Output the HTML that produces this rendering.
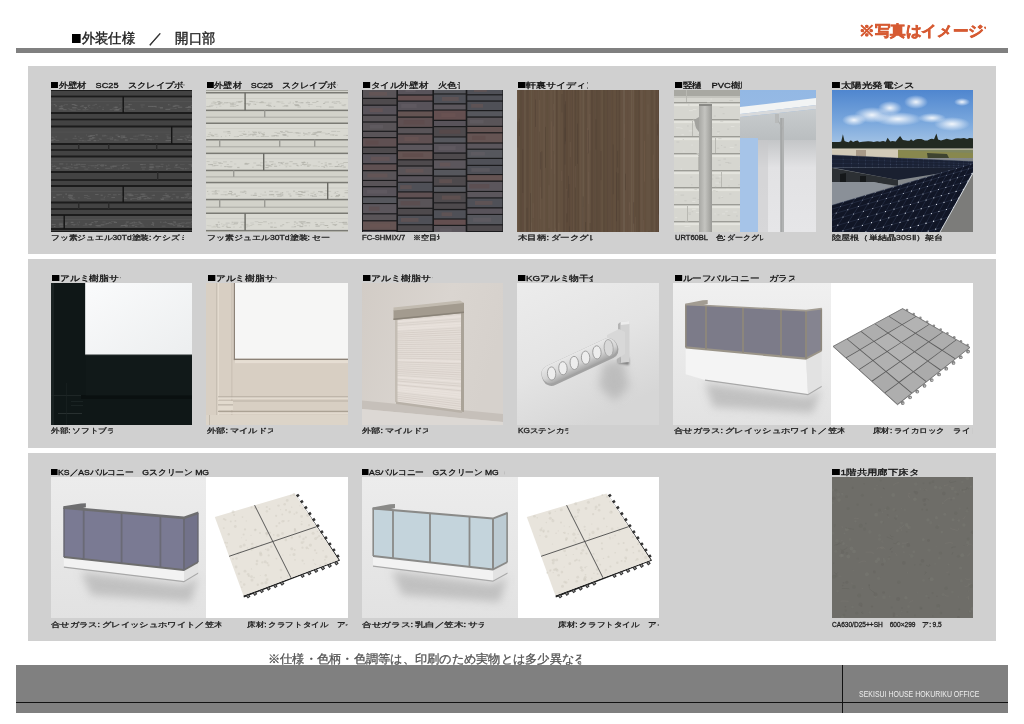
<!DOCTYPE html>
<html><head><meta charset="utf-8">
<style>
*{margin:0;padding:0;box-sizing:border-box}
html,body{width:1024px;height:724px;overflow:hidden;background:#fff;font-family:"Liberation Sans",sans-serif;color:#1a1a1a}
.a{position:absolute}
.hd{left:72px;top:29.5px;font-size:13.5px;white-space:pre;color:#222;-webkit-text-stroke:0.4px #222}
.hd .sq{width:9px;height:9px;margin-right:1px;vertical-align:-0.5px}
.red{left:858px;top:22px;font-size:14.5px;font-weight:bold;color:#d65a32;white-space:pre;-webkit-text-stroke:0.6px #d65a32}
.bar{left:16px;top:48px;width:992px;height:5px;background:#808080}
.pn{left:28px;width:968px;background:#d0d0d0}
.t{font-size:7.9px;white-space:pre;color:#111;line-height:9px;-webkit-text-stroke:0.3px #111}
.sq{display:inline-block;width:6px;height:6px;background:#000;margin-right:0.5px;vertical-align:-0.2px}
.sp{display:inline-block;width:1.5px}
.c{font-size:6.7px;white-space:pre;color:#222;line-height:9px;-webkit-text-stroke:0.3px #222}
.im{overflow:hidden}
.im svg{display:block}
.fn{left:268px;top:652px;font-size:11.5px;color:#555;white-space:pre;-webkit-text-stroke:0.3px #555}
.ft{left:16px;top:665px;width:992px;height:48px;background:#808080}
.fl{left:16px;top:701.8px;width:992px;height:1.2px;background:#111}
.fv{left:842px;top:665px;width:1.2px;height:48px;background:#111}
.ftx{left:859px;top:689px;font-size:8.8px;color:#eee;white-space:pre}
</style></head><body>
<div style="transform:scaleX(0.958);transform-origin:0 0;width:149.0px;overflow:hidden;left:72px" class="a hd"><i class="sq"></i>外装仕様　／　開口部仕様</div>
<div style="transform:scaleX(1.039);transform-origin:0 0;width:122.0px;overflow:hidden;left:858.75px" class="a red">※写真はイメージです。</div>
<div class="a bar"></div>

<div class="a pn" style="top:66px;height:188px"></div>
<div class="a pn" style="top:259px;height:189px"></div>
<div class="a pn" style="top:453px;height:188px"></div>

<!-- ROW 1 titles -->
<div class="a t" style="transform:scaleX(1.159);transform-origin:0 0;width:114.5px;overflow:hidden;left:51px;top:81px"><i class="sq"></i>外壁材　SC25　スクレイプボーダー</div>
<div class="a t" style="transform:scaleX(1.134);transform-origin:0 0;width:114.5px;overflow:hidden;left:207.3px;top:81px"><i class="sq"></i>外壁材　SC25　スクレイプボーダー</div>
<div class="a t" style="transform:scaleX(1.195);transform-origin:0 0;width:80.5px;overflow:hidden;left:362.5px;top:81px"><i class="sq"></i>タイル外壁材　火色音SH</div>
<div class="a t" style="transform:scaleX(1.248);transform-origin:0 0;width:55.5px;overflow:hidden;left:518px;top:81px"><i class="sq"></i>軒裏サイディング</div>
<div class="a t" style="transform:scaleX(1.193);transform-origin:0 0;width:55.5px;overflow:hidden;left:674.5px;top:81px"><i class="sq"></i>竪樋　PVC樹脂</div>
<div class="a t" style="transform:scaleX(1.322);transform-origin:0 0;width:61.5px;overflow:hidden;left:832px;top:81px"><i class="sq"></i>太陽光発電システム</div>

<!-- ROW 1 images -->
<div class="a im" id="i11" style="left:51px;top:90px;width:141px;height:142px;background:#3a3a3a"><svg width="141" height="142" viewBox="0 0 141 142" shape-rendering="auto"><rect x="0" y="0" width="141" height="142" fill="#434343"/><rect x="0" y="6.5" width="141" height="16.5" fill="#4b4b4b"/><rect x="45.7" y="17.7" width="1.6" height="0.6" fill="#6a6a6a" opacity="0.67"/><rect x="51.6" y="16.9" width="1.2" height="0.5" fill="#6a6a6a" opacity="0.62"/><rect x="9.8" y="16.4" width="1.4" height="1.1" fill="#6a6a6a" opacity="0.46"/><rect x="31.5" y="19.4" width="3.5" height="0.9" fill="#6a6a6a" opacity="0.6"/><rect x="137.7" y="18.9" width="1.2" height="0.7" fill="#6a6a6a" opacity="0.47"/><rect x="16.6" y="18.6" width="2.2" height="0.6" fill="#6a6a6a" opacity="0.69"/><rect x="90.1" y="17.1" width="2.5" height="0.5" fill="#6a6a6a" opacity="0.43"/><rect x="29" y="16.4" width="3.7" height="0.7" fill="#6a6a6a" opacity="0.69"/><rect x="63.9" y="18.5" width="2.2" height="1" fill="#6a6a6a" opacity="0.52"/><rect x="81" y="19" width="3.1" height="1" fill="#6a6a6a" opacity="0.54"/><rect x="138.2" y="16.3" width="1.5" height="1" fill="#6a6a6a" opacity="0.48"/><rect x="68.9" y="17.8" width="1.2" height="1" fill="#6a6a6a" opacity="0.69"/><rect x="123.4" y="17.9" width="2.3" height="0.9" fill="#6a6a6a" opacity="0.69"/><rect x="64.3" y="19.4" width="4.4" height="0.8" fill="#6a6a6a" opacity="0.73"/><rect x="8.6" y="17.7" width="3.8" height="1.2" fill="#6a6a6a" opacity="0.81"/><rect x="40.1" y="17.8" width="2.5" height="0.5" fill="#6a6a6a" opacity="0.63"/><rect x="23.7" y="14.3" width="1.5" height="1" fill="#6a6a6a" opacity="0.46"/><rect x="34.9" y="19" width="2.6" height="0.6" fill="#6a6a6a" opacity="0.62"/><rect x="77.5" y="18.7" width="4.5" height="1.1" fill="#6a6a6a" opacity="0.54"/><rect x="58.6" y="19" width="2.4" height="1.2" fill="#6a6a6a" opacity="0.48"/><rect x="24.8" y="15.3" width="1.9" height="0.8" fill="#6a6a6a" opacity="0.69"/><rect x="37" y="16.3" width="1" height="0.8" fill="#6a6a6a" opacity="0.68"/><rect x="134.4" y="16.9" width="3.8" height="0.9" fill="#6a6a6a" opacity="0.74"/><rect x="7.6" y="18.4" width="4.6" height="1.1" fill="#6a6a6a" opacity="0.8"/><rect x="55.3" y="14.5" width="2.6" height="0.9" fill="#6a6a6a" opacity="0.43"/><rect x="9.5" y="14.9" width="1.8" height="0.7" fill="#6a6a6a" opacity="0.43"/><rect x="0" y="14.5" width="1.6" height="0.8" fill="#6a6a6a" opacity="0.41"/><rect x="123.3" y="14.8" width="3.5" height="0.7" fill="#6a6a6a" opacity="0.57"/><rect x="51.3" y="18.8" width="1.5" height="1.2" fill="#6a6a6a" opacity="0.63"/><rect x="68.2" y="14.5" width="1.3" height="0.7" fill="#6a6a6a" opacity="0.53"/><rect x="116.9" y="14.1" width="1.6" height="1.2" fill="#6a6a6a" opacity="0.66"/><rect x="20.7" y="14.1" width="3.2" height="0.9" fill="#6a6a6a" opacity="0.89"/><rect x="121.7" y="15.4" width="3.8" height="0.8" fill="#6a6a6a" opacity="0.48"/><rect x="108.8" y="18.4" width="3.1" height="0.7" fill="#6a6a6a" opacity="0.51"/><rect x="114.4" y="18.8" width="4.9" height="1.1" fill="#6a6a6a" opacity="0.81"/><rect x="104.3" y="16.9" width="1.9" height="0.7" fill="#6a6a6a" opacity="0.41"/><rect x="3.9" y="15.4" width="2.1" height="1" fill="#6a6a6a" opacity="0.88"/><rect x="63.1" y="19.6" width="4.7" height="1.2" fill="#6a6a6a" opacity="0.58"/><rect x="31.1" y="15.1" width="1.9" height="0.6" fill="#6a6a6a" opacity="0.71"/><rect x="126.9" y="16.7" width="4.4" height="1" fill="#6a6a6a" opacity="0.8"/><rect x="12" y="19.2" width="3.6" height="1" fill="#6a6a6a" opacity="0.78"/><rect x="67.4" y="18.5" width="1.7" height="0.7" fill="#6a6a6a" opacity="0.8"/><rect x="137" y="16.2" width="2.6" height="1.2" fill="#6a6a6a" opacity="0.76"/><rect x="24" y="14.8" width="1.5" height="1.1" fill="#6a6a6a" opacity="0.8"/><rect x="20.6" y="19.6" width="4.3" height="1" fill="#6a6a6a" opacity="0.58"/><rect x="77.4" y="14" width="1.5" height="1.2" fill="#6a6a6a" opacity="0.72"/><rect x="74.2" y="16.4" width="4.7" height="1.1" fill="#6a6a6a" opacity="0.81"/><rect x="29.8" y="15.6" width="2" height="0.7" fill="#6a6a6a" opacity="0.69"/><rect x="36.6" y="14.7" width="2.7" height="1.1" fill="#6a6a6a" opacity="0.58"/><rect x="64.6" y="19.1" width="3.3" height="0.8" fill="#6a6a6a" opacity="0.86"/><rect x="70.7" y="16.9" width="3.1" height="0.5" fill="#6a6a6a" opacity="0.62"/><rect x="25.8" y="18.5" width="1" height="0.6" fill="#6a6a6a" opacity="0.64"/><rect x="102.3" y="15.8" width="3.2" height="0.9" fill="#6a6a6a" opacity="0.68"/><rect x="110.6" y="17.2" width="1.4" height="0.7" fill="#6a6a6a" opacity="0.54"/><rect x="108.9" y="17.2" width="3" height="1" fill="#6a6a6a" opacity="0.86"/><rect x="62.5" y="16.8" width="3.5" height="0.9" fill="#6a6a6a" opacity="0.75"/><rect x="63.8" y="16.7" width="3.1" height="1.2" fill="#6a6a6a" opacity="0.75"/><rect x="123.6" y="15.4" width="4.8" height="0.9" fill="#6a6a6a" opacity="0.87"/><rect x="118.4" y="14.6" width="1.5" height="0.8" fill="#6a6a6a" opacity="0.44"/><rect x="33.9" y="17.8" width="1.3" height="1" fill="#6a6a6a" opacity="0.85"/><rect x="21.8" y="17.7" width="3.9" height="0.6" fill="#6a6a6a" opacity="0.84"/><rect x="136.4" y="19.4" width="1.9" height="0.8" fill="#6a6a6a" opacity="0.64"/><rect x="139.6" y="14.9" width="4.3" height="0.8" fill="#6a6a6a" opacity="0.66"/><rect x="47.8" y="15.8" width="1.8" height="1" fill="#6a6a6a" opacity="0.41"/><rect x="78.1" y="14" width="2.8" height="0.7" fill="#6a6a6a" opacity="0.71"/><rect x="72.2" y="19.6" width="1.3" height="1.1" fill="#6a6a6a" opacity="0.89"/><rect x="14.8" y="14.2" width="2.1" height="1" fill="#6a6a6a" opacity="0.54"/><rect x="18.3" y="19.2" width="2.7" height="1.1" fill="#6a6a6a" opacity="0.53"/><rect x="21.1" y="17.2" width="4.7" height="1" fill="#6a6a6a" opacity="0.44"/><rect x="8.1" y="16.4" width="3.8" height="0.6" fill="#6a6a6a" opacity="0.87"/><rect x="89.5" y="14.4" width="4.2" height="1.1" fill="#6a6a6a" opacity="0.43"/><rect x="121.7" y="15.9" width="2.8" height="0.9" fill="#6a6a6a" opacity="0.86"/><rect x="37.8" y="17" width="1.5" height="0.7" fill="#6a6a6a" opacity="0.45"/><rect x="22.8" y="15.1" width="1.2" height="0.7" fill="#6a6a6a" opacity="0.55"/><rect x="107.1" y="16.8" width="2.2" height="0.6" fill="#6a6a6a" opacity="0.57"/><rect x="2.6" y="14" width="2" height="1" fill="#6a6a6a" opacity="0.68"/><rect x="26.7" y="19.3" width="2.9" height="0.6" fill="#6a6a6a" opacity="0.81"/><rect x="60.9" y="18.7" width="3" height="0.8" fill="#6a6a6a" opacity="0.65"/><rect x="97" y="15.9" width="4.9" height="1.1" fill="#6a6a6a" opacity="0.75"/><rect x="89.7" y="15.9" width="2.6" height="0.5" fill="#6a6a6a" opacity="0.46"/><rect x="10" y="15.4" width="4" height="0.6" fill="#6a6a6a" opacity="0.44"/><rect x="118.6" y="17.8" width="4.5" height="0.7" fill="#6a6a6a" opacity="0.52"/><rect x="41.3" y="14.8" width="2.8" height="0.8" fill="#6a6a6a" opacity="0.53"/><rect x="135.6" y="17.1" width="4.9" height="0.7" fill="#6a6a6a" opacity="0.88"/><rect x="43.6" y="13.9" width="2.4" height="0.8" fill="#6a6a6a" opacity="0.64"/><rect x="70.9" y="16.8" width="1.8" height="0.5" fill="#6a6a6a" opacity="0.53"/><rect x="12.7" y="14.2" width="2.6" height="0.5" fill="#6a6a6a" opacity="0.55"/><rect x="32.8" y="17" width="3.3" height="1" fill="#6a6a6a" opacity="0.73"/><rect x="101" y="16.2" width="4.5" height="0.7" fill="#6a6a6a" opacity="0.89"/><rect x="21.1" y="17.6" width="3.9" height="0.5" fill="#6a6a6a" opacity="0.82"/><rect x="0" y="11.4" width="141" height="0.6" fill="#6a6a6a" opacity="0.4"/><rect x="0" y="36.5" width="141" height="17.5" fill="#4b4b4b"/><rect x="125.8" y="48.9" width="3.5" height="1.1" fill="#6a6a6a" opacity="0.47"/><rect x="73.8" y="49.5" width="3" height="1.1" fill="#6a6a6a" opacity="0.81"/><rect x="82.4" y="48.6" width="4.6" height="1" fill="#6a6a6a" opacity="0.51"/><rect x="4.4" y="46.6" width="1.5" height="0.6" fill="#6a6a6a" opacity="0.82"/><rect x="78.8" y="48.2" width="3.5" height="1" fill="#6a6a6a" opacity="0.64"/><rect x="0.5" y="49" width="4.2" height="0.9" fill="#6a6a6a" opacity="0.67"/><rect x="93" y="48.9" width="1.3" height="0.7" fill="#6a6a6a" opacity="0.44"/><rect x="37.4" y="45.6" width="3.9" height="1" fill="#6a6a6a" opacity="0.89"/><rect x="69.6" y="47.3" width="2.5" height="1" fill="#6a6a6a" opacity="0.78"/><rect x="87" y="44.8" width="3.6" height="0.6" fill="#6a6a6a" opacity="0.53"/><rect x="104.8" y="47.9" width="2.2" height="0.5" fill="#6a6a6a" opacity="0.43"/><rect x="37.9" y="48.6" width="3.7" height="1" fill="#6a6a6a" opacity="0.55"/><rect x="72.8" y="47.2" width="2.9" height="0.6" fill="#6a6a6a" opacity="0.85"/><rect x="28.1" y="50.1" width="4.9" height="0.5" fill="#6a6a6a" opacity="0.63"/><rect x="115.6" y="47.1" width="4.9" height="0.7" fill="#6a6a6a" opacity="0.5"/><rect x="133.3" y="47.9" width="1.8" height="0.6" fill="#6a6a6a" opacity="0.66"/><rect x="134.3" y="49.4" width="1.5" height="0.9" fill="#6a6a6a" opacity="0.84"/><rect x="99.2" y="49.9" width="1.9" height="0.8" fill="#6a6a6a" opacity="0.41"/><rect x="0.5" y="47.1" width="3" height="0.7" fill="#6a6a6a" opacity="0.47"/><rect x="48.5" y="49.5" width="2.3" height="0.5" fill="#6a6a6a" opacity="0.78"/><rect x="118.3" y="50" width="1.5" height="1" fill="#6a6a6a" opacity="0.85"/><rect x="40.9" y="46.8" width="2.5" height="1.2" fill="#6a6a6a" opacity="0.69"/><rect x="50.9" y="46.1" width="2.7" height="0.5" fill="#6a6a6a" opacity="0.45"/><rect x="117.7" y="50.1" width="2.1" height="0.7" fill="#6a6a6a" opacity="0.53"/><rect x="72" y="46.7" width="1.8" height="1.2" fill="#6a6a6a" opacity="0.84"/><rect x="114.5" y="50" width="3.5" height="1.2" fill="#6a6a6a" opacity="0.67"/><rect x="101.5" y="48.9" width="1.2" height="0.8" fill="#6a6a6a" opacity="0.78"/><rect x="90.9" y="44.7" width="2.1" height="1.1" fill="#6a6a6a" opacity="0.46"/><rect x="66.6" y="46.2" width="2.4" height="1" fill="#6a6a6a" opacity="0.89"/><rect x="36.7" y="46.2" width="3.6" height="0.9" fill="#6a6a6a" opacity="0.6"/><rect x="23.6" y="45.6" width="1.6" height="1.1" fill="#6a6a6a" opacity="0.65"/><rect x="31" y="50.5" width="4.6" height="0.8" fill="#6a6a6a" opacity="0.47"/><rect x="27.1" y="46.5" width="1.4" height="0.6" fill="#6a6a6a" opacity="0.52"/><rect x="36.4" y="49.8" width="3.3" height="1" fill="#6a6a6a" opacity="0.61"/><rect x="58.4" y="46.7" width="3.1" height="0.7" fill="#6a6a6a" opacity="0.43"/><rect x="39.1" y="45.1" width="4.9" height="0.9" fill="#6a6a6a" opacity="0.71"/><rect x="121.7" y="46" width="1.9" height="0.7" fill="#6a6a6a" opacity="0.6"/><rect x="62.9" y="49.6" width="4.8" height="1.1" fill="#6a6a6a" opacity="0.41"/><rect x="4.5" y="49.9" width="3.8" height="0.8" fill="#6a6a6a" opacity="0.69"/><rect x="0" y="50.1" width="2.6" height="1.1" fill="#6a6a6a" opacity="0.83"/><rect x="137.1" y="45" width="2" height="0.6" fill="#6a6a6a" opacity="0.66"/><rect x="96.2" y="48.8" width="4.8" height="1" fill="#6a6a6a" opacity="0.78"/><rect x="64.5" y="44.6" width="3.2" height="1" fill="#6a6a6a" opacity="0.52"/><rect x="129.7" y="46.2" width="3.6" height="0.6" fill="#6a6a6a" opacity="0.53"/><rect x="89.7" y="45.1" width="3.8" height="0.5" fill="#6a6a6a" opacity="0.66"/><rect x="82.2" y="45.7" width="2.6" height="0.9" fill="#6a6a6a" opacity="0.41"/><rect x="42.5" y="50.2" width="2.8" height="1" fill="#6a6a6a" opacity="0.84"/><rect x="67" y="45.9" width="1.9" height="1.2" fill="#6a6a6a" opacity="0.75"/><rect x="43.3" y="47.4" width="1.1" height="1" fill="#6a6a6a" opacity="0.61"/><rect x="36.3" y="50" width="3.7" height="0.7" fill="#6a6a6a" opacity="0.42"/><rect x="47.7" y="48.6" width="2.7" height="0.6" fill="#6a6a6a" opacity="0.8"/><rect x="104.2" y="45.6" width="3" height="1.2" fill="#6a6a6a" opacity="0.56"/><rect x="115.6" y="45.7" width="1.9" height="1" fill="#6a6a6a" opacity="0.55"/><rect x="134.2" y="45.5" width="3" height="0.7" fill="#6a6a6a" opacity="0.61"/><rect x="93.8" y="45.3" width="4.8" height="0.8" fill="#6a6a6a" opacity="0.51"/><rect x="137.4" y="44.7" width="1.6" height="0.5" fill="#6a6a6a" opacity="0.6"/><rect x="126.6" y="48.9" width="4.5" height="1.2" fill="#6a6a6a" opacity="0.87"/><rect x="46.4" y="50.1" width="1.7" height="1" fill="#6a6a6a" opacity="0.42"/><rect x="93.7" y="46.7" width="2.5" height="0.7" fill="#6a6a6a" opacity="0.48"/><rect x="0.4" y="46.5" width="2.1" height="1.2" fill="#6a6a6a" opacity="0.46"/><rect x="136" y="46.6" width="1.8" height="1.1" fill="#6a6a6a" opacity="0.81"/><rect x="61" y="47.3" width="1.2" height="0.8" fill="#6a6a6a" opacity="0.86"/><rect x="27.2" y="49.9" width="2.5" height="0.5" fill="#6a6a6a" opacity="0.61"/><rect x="114.5" y="44.6" width="4.1" height="0.5" fill="#6a6a6a" opacity="0.43"/><rect x="129.7" y="49" width="2" height="1.1" fill="#6a6a6a" opacity="0.57"/><rect x="38.4" y="48.2" width="4.8" height="0.7" fill="#6a6a6a" opacity="0.76"/><rect x="44.6" y="44.4" width="2.1" height="1" fill="#6a6a6a" opacity="0.86"/><rect x="89.4" y="44.5" width="4.8" height="0.7" fill="#6a6a6a" opacity="0.64"/><rect x="134.9" y="46.7" width="4.8" height="0.7" fill="#6a6a6a" opacity="0.61"/><rect x="69.6" y="45.5" width="4.7" height="1.1" fill="#6a6a6a" opacity="0.77"/><rect x="116" y="48.1" width="4.1" height="0.7" fill="#6a6a6a" opacity="0.56"/><rect x="51" y="44.9" width="4.1" height="0.6" fill="#6a6a6a" opacity="0.78"/><rect x="34.9" y="44.6" width="1.3" height="0.9" fill="#6a6a6a" opacity="0.56"/><rect x="138.2" y="50.4" width="4.5" height="0.7" fill="#6a6a6a" opacity="0.44"/><rect x="13.6" y="48.7" width="3" height="0.8" fill="#6a6a6a" opacity="0.52"/><rect x="58.8" y="48.5" width="3.5" height="1" fill="#6a6a6a" opacity="0.82"/><rect x="93.7" y="49.5" width="1.5" height="0.7" fill="#6a6a6a" opacity="0.68"/><rect x="52.6" y="45.6" width="4" height="0.7" fill="#6a6a6a" opacity="0.52"/><rect x="21.6" y="47.9" width="4.5" height="0.7" fill="#6a6a6a" opacity="0.6"/><rect x="139.9" y="45.8" width="3" height="1.1" fill="#6a6a6a" opacity="0.73"/><rect x="139.7" y="47.3" width="1.4" height="1.1" fill="#6a6a6a" opacity="0.82"/><rect x="128.9" y="46.2" width="1.2" height="0.6" fill="#6a6a6a" opacity="0.49"/><rect x="137.2" y="50.1" width="3.3" height="0.8" fill="#6a6a6a" opacity="0.83"/><rect x="63.3" y="49.1" width="2" height="1.2" fill="#6a6a6a" opacity="0.45"/><rect x="84.1" y="45.7" width="3.5" height="0.8" fill="#6a6a6a" opacity="0.47"/><rect x="28.8" y="48" width="2" height="1" fill="#6a6a6a" opacity="0.5"/><rect x="1.6" y="48.5" width="2.3" height="0.6" fill="#6a6a6a" opacity="0.56"/><rect x="28.7" y="47.7" width="4.2" height="0.5" fill="#6a6a6a" opacity="0.45"/><rect x="55.7" y="48.3" width="3.2" height="0.6" fill="#6a6a6a" opacity="0.48"/><rect x="98.1" y="46.1" width="2.6" height="0.7" fill="#6a6a6a" opacity="0.88"/><rect x="0" y="41.8" width="141" height="0.6" fill="#6a6a6a" opacity="0.4"/><rect x="0" y="66.5" width="141" height="15.5" fill="#4b4b4b"/><rect x="44" y="75.4" width="3.3" height="0.8" fill="#6a6a6a" opacity="0.83"/><rect x="140.5" y="74.5" width="2.5" height="1" fill="#6a6a6a" opacity="0.5"/><rect x="0.8" y="75.8" width="4.6" height="1.1" fill="#6a6a6a" opacity="0.6"/><rect x="124.5" y="74.4" width="2.8" height="0.5" fill="#6a6a6a" opacity="0.68"/><rect x="90.3" y="74" width="4.6" height="0.9" fill="#6a6a6a" opacity="0.59"/><rect x="71.1" y="75" width="1.6" height="0.9" fill="#6a6a6a" opacity="0.86"/><rect x="15.3" y="77.8" width="3" height="1.2" fill="#6a6a6a" opacity="0.5"/><rect x="17.9" y="78.8" width="4.8" height="0.8" fill="#6a6a6a" opacity="0.43"/><rect x="130.6" y="78.4" width="2.6" height="0.9" fill="#6a6a6a" opacity="0.81"/><rect x="22.6" y="74.7" width="4.1" height="0.8" fill="#6a6a6a" opacity="0.82"/><rect x="116.9" y="74.7" width="1.7" height="0.8" fill="#6a6a6a" opacity="0.66"/><rect x="54.1" y="74.8" width="1.5" height="1" fill="#6a6a6a" opacity="0.85"/><rect x="5.8" y="77.6" width="3.2" height="0.5" fill="#6a6a6a" opacity="0.82"/><rect x="16.6" y="76.5" width="3.4" height="0.9" fill="#6a6a6a" opacity="0.55"/><rect x="59.2" y="75.8" width="3.3" height="1" fill="#6a6a6a" opacity="0.62"/><rect x="61.8" y="76.8" width="1.1" height="0.8" fill="#6a6a6a" opacity="0.52"/><rect x="107.7" y="76" width="4.1" height="0.6" fill="#6a6a6a" opacity="0.64"/><rect x="15.1" y="75.8" width="1.5" height="0.6" fill="#6a6a6a" opacity="0.62"/><rect x="71.9" y="76.9" width="1.2" height="0.6" fill="#6a6a6a" opacity="0.77"/><rect x="109.6" y="73.8" width="3" height="0.9" fill="#6a6a6a" opacity="0.59"/><rect x="134.1" y="78.1" width="1.5" height="1.2" fill="#6a6a6a" opacity="0.77"/><rect x="114.9" y="78.8" width="1.8" height="0.8" fill="#6a6a6a" opacity="0.88"/><rect x="129.2" y="77.8" width="1.7" height="1.2" fill="#6a6a6a" opacity="0.43"/><rect x="49.5" y="74.3" width="4" height="1.1" fill="#6a6a6a" opacity="0.54"/><rect x="115" y="76.2" width="1.6" height="1.1" fill="#6a6a6a" opacity="0.5"/><rect x="37.1" y="75.2" width="3" height="0.5" fill="#6a6a6a" opacity="0.49"/><rect x="22.7" y="77.2" width="4.7" height="1.1" fill="#6a6a6a" opacity="0.48"/><rect x="110.7" y="76.4" width="1.5" height="0.9" fill="#6a6a6a" opacity="0.58"/><rect x="123.1" y="76.6" width="3.2" height="1.1" fill="#6a6a6a" opacity="0.45"/><rect x="140" y="75.6" width="3.5" height="1.1" fill="#6a6a6a" opacity="0.53"/><rect x="139.7" y="75.4" width="3.3" height="1" fill="#6a6a6a" opacity="0.62"/><rect x="24.9" y="73.7" width="4" height="1.1" fill="#6a6a6a" opacity="0.53"/><rect x="90.1" y="76.7" width="4.9" height="1" fill="#6a6a6a" opacity="0.56"/><rect x="0.3" y="74.3" width="1.1" height="0.9" fill="#6a6a6a" opacity="0.62"/><rect x="72.3" y="74.2" width="4.6" height="0.7" fill="#6a6a6a" opacity="0.73"/><rect x="3.1" y="75.4" width="1" height="0.6" fill="#6a6a6a" opacity="0.58"/><rect x="31.6" y="76.7" width="3.3" height="0.6" fill="#6a6a6a" opacity="0.71"/><rect x="67" y="78.6" width="1.5" height="0.7" fill="#6a6a6a" opacity="0.47"/><rect x="13.5" y="78.2" width="3.6" height="1" fill="#6a6a6a" opacity="0.6"/><rect x="37.3" y="77" width="1" height="0.9" fill="#6a6a6a" opacity="0.58"/><rect x="91" y="78.6" width="2.8" height="1" fill="#6a6a6a" opacity="0.52"/><rect x="127.4" y="76.4" width="1.2" height="0.8" fill="#6a6a6a" opacity="0.52"/><rect x="8.2" y="73.5" width="4.1" height="0.9" fill="#6a6a6a" opacity="0.87"/><rect x="20.1" y="76.8" width="1.8" height="0.9" fill="#6a6a6a" opacity="0.72"/><rect x="114.7" y="75.2" width="1.7" height="0.7" fill="#6a6a6a" opacity="0.42"/><rect x="125.4" y="77.4" width="4.1" height="0.5" fill="#6a6a6a" opacity="0.82"/><rect x="105.1" y="77.5" width="2.9" height="0.8" fill="#6a6a6a" opacity="0.51"/><rect x="14.8" y="73.7" width="1.9" height="0.7" fill="#6a6a6a" opacity="0.77"/><rect x="98" y="77.3" width="4.4" height="0.7" fill="#6a6a6a" opacity="0.68"/><rect x="61.5" y="76.3" width="4.2" height="0.7" fill="#6a6a6a" opacity="0.72"/><rect x="136.1" y="78.2" width="1.9" height="0.5" fill="#6a6a6a" opacity="0.53"/><rect x="33.3" y="78.6" width="4" height="1" fill="#6a6a6a" opacity="0.56"/><rect x="124.1" y="74.8" width="2.3" height="1.1" fill="#6a6a6a" opacity="0.72"/><rect x="97.7" y="78.8" width="3.7" height="0.8" fill="#6a6a6a" opacity="0.82"/><rect x="98.4" y="75.8" width="4.4" height="1" fill="#6a6a6a" opacity="0.69"/><rect x="43.4" y="76.9" width="1.8" height="0.6" fill="#6a6a6a" opacity="0.86"/><rect x="20.4" y="74.1" width="1.1" height="1.2" fill="#6a6a6a" opacity="0.57"/><rect x="20" y="73.7" width="1.1" height="1" fill="#6a6a6a" opacity="0.72"/><rect x="98.3" y="73.8" width="3.9" height="0.9" fill="#6a6a6a" opacity="0.58"/><rect x="115.3" y="78.3" width="4.3" height="0.5" fill="#6a6a6a" opacity="0.83"/><rect x="128.9" y="74.1" width="4.8" height="0.6" fill="#6a6a6a" opacity="0.46"/><rect x="4.9" y="77.9" width="4.4" height="0.9" fill="#6a6a6a" opacity="0.81"/><rect x="89" y="74" width="2.1" height="0.6" fill="#6a6a6a" opacity="0.78"/><rect x="28.9" y="75.8" width="2.3" height="0.5" fill="#6a6a6a" opacity="0.53"/><rect x="39.8" y="75.5" width="3.9" height="0.7" fill="#6a6a6a" opacity="0.88"/><rect x="71" y="76.8" width="4.4" height="0.5" fill="#6a6a6a" opacity="0.61"/><rect x="61.5" y="75.4" width="4.1" height="1" fill="#6a6a6a" opacity="0.67"/><rect x="30.5" y="74" width="4.4" height="1.1" fill="#6a6a6a" opacity="0.49"/><rect x="0.2" y="77.6" width="1.8" height="1.2" fill="#6a6a6a" opacity="0.4"/><rect x="69.2" y="77.8" width="3" height="0.6" fill="#6a6a6a" opacity="0.65"/><rect x="49" y="74.9" width="4.3" height="1.2" fill="#6a6a6a" opacity="0.54"/><rect x="30.3" y="76.2" width="3.8" height="0.6" fill="#6a6a6a" opacity="0.72"/><rect x="11.4" y="77.3" width="4.2" height="1.1" fill="#6a6a6a" opacity="0.71"/><rect x="50.1" y="75.6" width="2.6" height="1.1" fill="#6a6a6a" opacity="0.44"/><rect x="125.3" y="74.6" width="1.1" height="0.7" fill="#6a6a6a" opacity="0.85"/><rect x="70.7" y="78.3" width="2.5" height="0.7" fill="#6a6a6a" opacity="0.63"/><rect x="74.9" y="77.6" width="4" height="1" fill="#6a6a6a" opacity="0.57"/><rect x="46.1" y="78" width="1.6" height="1" fill="#6a6a6a" opacity="0.77"/><rect x="23.9" y="77.7" width="2.8" height="0.9" fill="#6a6a6a" opacity="0.46"/><rect x="65.1" y="74.8" width="4.5" height="0.6" fill="#6a6a6a" opacity="0.55"/><rect x="99.1" y="74.3" width="4.4" height="0.6" fill="#6a6a6a" opacity="0.52"/><rect x="46" y="74.3" width="3.1" height="0.7" fill="#6a6a6a" opacity="0.49"/><rect x="137.5" y="74" width="3.9" height="1.2" fill="#6a6a6a" opacity="0.45"/><rect x="54.2" y="77.8" width="4.9" height="1" fill="#6a6a6a" opacity="0.62"/><rect x="27.7" y="74.1" width="3.6" height="0.6" fill="#6a6a6a" opacity="0.59"/><rect x="4.8" y="77.8" width="2.6" height="1" fill="#6a6a6a" opacity="0.65"/><rect x="89.2" y="74.2" width="2.9" height="0.9" fill="#6a6a6a" opacity="0.6"/><rect x="104.5" y="75.8" width="4.6" height="0.9" fill="#6a6a6a" opacity="0.77"/><rect x="59.4" y="77.4" width="1.9" height="1.1" fill="#6a6a6a" opacity="0.79"/><rect x="98.7" y="77.2" width="4.4" height="0.9" fill="#6a6a6a" opacity="0.63"/><rect x="0" y="71.2" width="141" height="0.6" fill="#6a6a6a" opacity="0.4"/><rect x="0" y="96" width="141" height="16.5" fill="#4b4b4b"/><rect x="44.1" y="104" width="3.5" height="0.8" fill="#6a6a6a" opacity="0.79"/><rect x="100.6" y="104.9" width="3.5" height="0.8" fill="#6a6a6a" opacity="0.63"/><rect x="87.6" y="107.3" width="2.6" height="1.2" fill="#6a6a6a" opacity="0.49"/><rect x="92.3" y="105.7" width="4.1" height="0.8" fill="#6a6a6a" opacity="0.89"/><rect x="5.4" y="104.4" width="3.2" height="1" fill="#6a6a6a" opacity="0.87"/><rect x="73.2" y="106.7" width="1.4" height="0.9" fill="#6a6a6a" opacity="0.76"/><rect x="72.2" y="108.2" width="3.6" height="0.9" fill="#6a6a6a" opacity="0.61"/><rect x="133.7" y="107.4" width="1.8" height="0.8" fill="#6a6a6a" opacity="0.78"/><rect x="17.3" y="105.5" width="4.9" height="0.5" fill="#6a6a6a" opacity="0.54"/><rect x="56.4" y="105.8" width="1.1" height="0.8" fill="#6a6a6a" opacity="0.75"/><rect x="49.6" y="104.7" width="2.1" height="1" fill="#6a6a6a" opacity="0.87"/><rect x="74.3" y="108.1" width="1.9" height="0.8" fill="#6a6a6a" opacity="0.51"/><rect x="18.2" y="108.1" width="4.1" height="0.9" fill="#6a6a6a" opacity="0.63"/><rect x="79.2" y="109" width="1.9" height="0.7" fill="#6a6a6a" opacity="0.72"/><rect x="115.4" y="106.1" width="4.3" height="0.7" fill="#6a6a6a" opacity="0.67"/><rect x="17.6" y="105.5" width="4.3" height="1.1" fill="#6a6a6a" opacity="0.53"/><rect x="53" y="105.9" width="2" height="0.6" fill="#6a6a6a" opacity="0.4"/><rect x="101.8" y="104.8" width="2.1" height="0.7" fill="#6a6a6a" opacity="0.64"/><rect x="60.4" y="107.2" width="3.5" height="0.8" fill="#6a6a6a" opacity="0.86"/><rect x="120.5" y="108.2" width="1.2" height="1.1" fill="#6a6a6a" opacity="0.79"/><rect x="19.8" y="107.1" width="4.3" height="0.5" fill="#6a6a6a" opacity="0.41"/><rect x="134.2" y="104.9" width="3.6" height="0.6" fill="#6a6a6a" opacity="0.47"/><rect x="32.9" y="105.4" width="4.1" height="0.6" fill="#6a6a6a" opacity="0.85"/><rect x="111.6" y="108.6" width="1.7" height="0.9" fill="#6a6a6a" opacity="0.79"/><rect x="94.3" y="108" width="4.6" height="1.1" fill="#6a6a6a" opacity="0.5"/><rect x="97.7" y="107.7" width="3.1" height="0.8" fill="#6a6a6a" opacity="0.84"/><rect x="78.3" y="104.8" width="2.1" height="0.6" fill="#6a6a6a" opacity="0.65"/><rect x="8.2" y="104.3" width="2.9" height="0.8" fill="#6a6a6a" opacity="0.65"/><rect x="76.1" y="103.5" width="4.5" height="1.1" fill="#6a6a6a" opacity="0.63"/><rect x="79.3" y="108.3" width="3.7" height="0.8" fill="#6a6a6a" opacity="0.61"/><rect x="135.4" y="107.1" width="1.3" height="0.9" fill="#6a6a6a" opacity="0.41"/><rect x="86" y="108.8" width="3.7" height="0.7" fill="#6a6a6a" opacity="0.89"/><rect x="72" y="108.6" width="2.9" height="0.5" fill="#6a6a6a" opacity="0.76"/><rect x="88.2" y="108.4" width="2.4" height="0.8" fill="#6a6a6a" opacity="0.64"/><rect x="74.1" y="104.6" width="4.1" height="0.8" fill="#6a6a6a" opacity="0.61"/><rect x="78.1" y="105.1" width="4.3" height="1.1" fill="#6a6a6a" opacity="0.6"/><rect x="71" y="106.3" width="2.1" height="1.2" fill="#6a6a6a" opacity="0.73"/><rect x="111.7" y="105.3" width="2.3" height="0.7" fill="#6a6a6a" opacity="0.69"/><rect x="89.5" y="103.7" width="4.1" height="1" fill="#6a6a6a" opacity="0.84"/><rect x="76.9" y="105.2" width="1.2" height="0.5" fill="#6a6a6a" opacity="0.49"/><rect x="129.9" y="107.2" width="3.4" height="1.1" fill="#6a6a6a" opacity="0.85"/><rect x="86.3" y="107" width="3.5" height="1" fill="#6a6a6a" opacity="0.7"/><rect x="96" y="107.3" width="1.9" height="0.8" fill="#6a6a6a" opacity="0.78"/><rect x="14.3" y="103.6" width="1.7" height="1" fill="#6a6a6a" opacity="0.86"/><rect x="92.5" y="108.2" width="2.5" height="1.1" fill="#6a6a6a" opacity="0.68"/><rect x="36.4" y="105.9" width="2.2" height="0.7" fill="#6a6a6a" opacity="0.62"/><rect x="90.5" y="103.7" width="4.7" height="0.9" fill="#6a6a6a" opacity="0.42"/><rect x="16.8" y="106.7" width="4.2" height="1.1" fill="#6a6a6a" opacity="0.62"/><rect x="2" y="106.8" width="2.5" height="1.2" fill="#6a6a6a" opacity="0.89"/><rect x="67" y="104" width="2.6" height="1" fill="#6a6a6a" opacity="0.51"/><rect x="21.4" y="103.5" width="1.1" height="1" fill="#6a6a6a" opacity="0.46"/><rect x="136.3" y="108.4" width="1.4" height="0.6" fill="#6a6a6a" opacity="0.41"/><rect x="101.4" y="107.7" width="2" height="0.6" fill="#6a6a6a" opacity="0.43"/><rect x="109.1" y="108.4" width="3.9" height="1" fill="#6a6a6a" opacity="0.44"/><rect x="88.6" y="106.1" width="3.8" height="1.2" fill="#6a6a6a" opacity="0.53"/><rect x="136" y="103.5" width="3.9" height="0.5" fill="#6a6a6a" opacity="0.73"/><rect x="115.2" y="105.2" width="1.3" height="1" fill="#6a6a6a" opacity="0.48"/><rect x="121.4" y="103.8" width="2.9" height="0.8" fill="#6a6a6a" opacity="0.69"/><rect x="61.9" y="104.3" width="3.7" height="1.1" fill="#6a6a6a" opacity="0.58"/><rect x="90.9" y="105.8" width="3.5" height="0.8" fill="#6a6a6a" opacity="0.79"/><rect x="133.2" y="106.7" width="4.1" height="0.7" fill="#6a6a6a" opacity="0.43"/><rect x="137.3" y="108.2" width="3.8" height="0.7" fill="#6a6a6a" opacity="0.7"/><rect x="137.8" y="106.9" width="4.3" height="0.7" fill="#6a6a6a" opacity="0.61"/><rect x="125.2" y="107.4" width="2.5" height="0.9" fill="#6a6a6a" opacity="0.85"/><rect x="113.9" y="103.4" width="2.1" height="0.7" fill="#6a6a6a" opacity="0.61"/><rect x="82.7" y="108.5" width="4.3" height="0.5" fill="#6a6a6a" opacity="0.82"/><rect x="114.5" y="106.7" width="4.5" height="0.7" fill="#6a6a6a" opacity="0.83"/><rect x="113.8" y="108.7" width="3.7" height="0.7" fill="#6a6a6a" opacity="0.44"/><rect x="78.1" y="104.6" width="4.2" height="1" fill="#6a6a6a" opacity="0.87"/><rect x="33" y="107.3" width="3.4" height="0.8" fill="#6a6a6a" opacity="0.5"/><rect x="35.9" y="108" width="4" height="0.8" fill="#6a6a6a" opacity="0.44"/><rect x="113.7" y="104.8" width="4.1" height="0.9" fill="#6a6a6a" opacity="0.85"/><rect x="124.8" y="106.2" width="3.1" height="0.9" fill="#6a6a6a" opacity="0.49"/><rect x="27.1" y="107.5" width="1.7" height="0.8" fill="#6a6a6a" opacity="0.68"/><rect x="56.8" y="104.3" width="3.1" height="0.5" fill="#6a6a6a" opacity="0.9"/><rect x="52.7" y="107.1" width="1.4" height="1.1" fill="#6a6a6a" opacity="0.48"/><rect x="84.2" y="106.4" width="2.4" height="0.5" fill="#6a6a6a" opacity="0.42"/><rect x="139.6" y="106.2" width="4.5" height="0.9" fill="#6a6a6a" opacity="0.53"/><rect x="109.9" y="108.9" width="2.7" height="1" fill="#6a6a6a" opacity="0.81"/><rect x="135.8" y="103.6" width="2" height="0.6" fill="#6a6a6a" opacity="0.49"/><rect x="11.8" y="106.6" width="1.2" height="1.1" fill="#6a6a6a" opacity="0.63"/><rect x="133.6" y="103.8" width="4.6" height="0.9" fill="#6a6a6a" opacity="0.6"/><rect x="16.9" y="104.9" width="4.8" height="0.9" fill="#6a6a6a" opacity="0.72"/><rect x="134.9" y="105.7" width="3.7" height="0.8" fill="#6a6a6a" opacity="0.48"/><rect x="136.2" y="104.7" width="5" height="0.5" fill="#6a6a6a" opacity="0.53"/><rect x="49.6" y="108.6" width="4.6" height="1.1" fill="#6a6a6a" opacity="0.42"/><rect x="110.9" y="107.2" width="3.8" height="1.2" fill="#6a6a6a" opacity="0.43"/><rect x="20.4" y="108.8" width="4" height="1" fill="#6a6a6a" opacity="0.55"/><rect x="83.4" y="104" width="4" height="0.7" fill="#6a6a6a" opacity="0.53"/><rect x="17.5" y="104.4" width="2.9" height="0.7" fill="#6a6a6a" opacity="0.47"/><rect x="0" y="101" width="141" height="0.6" fill="#6a6a6a" opacity="0.4"/><rect x="0" y="125" width="141" height="14" fill="#4b4b4b"/><rect x="95.5" y="134.8" width="1.1" height="0.6" fill="#6a6a6a" opacity="0.42"/><rect x="130.8" y="135.9" width="1.9" height="1.1" fill="#6a6a6a" opacity="0.84"/><rect x="19.7" y="131.8" width="2.8" height="1.2" fill="#6a6a6a" opacity="0.82"/><rect x="88.6" y="133" width="2.8" height="1.1" fill="#6a6a6a" opacity="0.64"/><rect x="88.6" y="132.4" width="1.6" height="0.5" fill="#6a6a6a" opacity="0.76"/><rect x="78" y="135.6" width="1.6" height="0.7" fill="#6a6a6a" opacity="0.61"/><rect x="22" y="135.4" width="2.1" height="0.7" fill="#6a6a6a" opacity="0.48"/><rect x="69.2" y="135.7" width="2.3" height="0.6" fill="#6a6a6a" opacity="0.89"/><rect x="8" y="134.6" width="4.6" height="0.6" fill="#6a6a6a" opacity="0.64"/><rect x="40.4" y="132.3" width="2" height="0.8" fill="#6a6a6a" opacity="0.9"/><rect x="140.7" y="131.8" width="4.7" height="0.7" fill="#6a6a6a" opacity="0.85"/><rect x="8.1" y="132.7" width="3.9" height="1.2" fill="#6a6a6a" opacity="0.41"/><rect x="113.8" y="132" width="2.4" height="0.5" fill="#6a6a6a" opacity="0.82"/><rect x="74.2" y="133.4" width="1.7" height="1.1" fill="#6a6a6a" opacity="0.51"/><rect x="80.6" y="132.2" width="1.6" height="1" fill="#6a6a6a" opacity="0.76"/><rect x="27.7" y="131.7" width="1.3" height="0.9" fill="#6a6a6a" opacity="0.65"/><rect x="38.6" y="134.3" width="1.8" height="1" fill="#6a6a6a" opacity="0.81"/><rect x="82.2" y="131.6" width="1.8" height="1" fill="#6a6a6a" opacity="0.6"/><rect x="101.8" y="135.3" width="1.2" height="0.7" fill="#6a6a6a" opacity="0.82"/><rect x="121.9" y="131.4" width="3" height="1.1" fill="#6a6a6a" opacity="0.64"/><rect x="123" y="132.2" width="2.1" height="1.1" fill="#6a6a6a" opacity="0.58"/><rect x="23.1" y="134.2" width="2.5" height="0.5" fill="#6a6a6a" opacity="0.66"/><rect x="62.9" y="131.9" width="3.1" height="1" fill="#6a6a6a" opacity="0.81"/><rect x="122" y="134.8" width="2.3" height="0.8" fill="#6a6a6a" opacity="0.78"/><rect x="8.6" y="136" width="4.5" height="0.8" fill="#6a6a6a" opacity="0.66"/><rect x="74.8" y="131.4" width="3.1" height="1.2" fill="#6a6a6a" opacity="0.51"/><rect x="25.7" y="132.5" width="1.4" height="1.1" fill="#6a6a6a" opacity="0.42"/><rect x="13.6" y="132.3" width="3.8" height="0.5" fill="#6a6a6a" opacity="0.7"/><rect x="81.3" y="134.7" width="3.1" height="0.6" fill="#6a6a6a" opacity="0.83"/><rect x="101.1" y="131.9" width="1.2" height="0.8" fill="#6a6a6a" opacity="0.65"/><rect x="39.4" y="133.3" width="1.5" height="0.6" fill="#6a6a6a" opacity="0.7"/><rect x="121.4" y="134.1" width="1.6" height="1" fill="#6a6a6a" opacity="0.48"/><rect x="116.5" y="133.2" width="4.8" height="0.8" fill="#6a6a6a" opacity="0.82"/><rect x="74.1" y="135.9" width="2.6" height="1" fill="#6a6a6a" opacity="0.57"/><rect x="33.9" y="133.4" width="2.3" height="1.2" fill="#6a6a6a" opacity="0.8"/><rect x="128.7" y="135.5" width="4.3" height="0.5" fill="#6a6a6a" opacity="0.66"/><rect x="135.1" y="132.5" width="4.7" height="0.8" fill="#6a6a6a" opacity="0.72"/><rect x="51.4" y="131.6" width="3.1" height="0.8" fill="#6a6a6a" opacity="0.65"/><rect x="2.9" y="136.1" width="1.6" height="1" fill="#6a6a6a" opacity="0.87"/><rect x="89.3" y="135.6" width="4.2" height="1.1" fill="#6a6a6a" opacity="0.42"/><rect x="90.5" y="134.6" width="2.1" height="0.7" fill="#6a6a6a" opacity="0.67"/><rect x="130.3" y="132.5" width="3.5" height="0.9" fill="#6a6a6a" opacity="0.62"/><rect x="134.1" y="132.8" width="2.2" height="1" fill="#6a6a6a" opacity="0.46"/><rect x="83.8" y="133.8" width="4.8" height="0.7" fill="#6a6a6a" opacity="0.63"/><rect x="75.3" y="131.9" width="1.6" height="0.6" fill="#6a6a6a" opacity="0.55"/><rect x="57.3" y="132.5" width="2.2" height="0.6" fill="#6a6a6a" opacity="0.67"/><rect x="118.4" y="134.1" width="3.4" height="1" fill="#6a6a6a" opacity="0.5"/><rect x="100.2" y="134" width="2.8" height="0.9" fill="#6a6a6a" opacity="0.63"/><rect x="43.8" y="132.4" width="2" height="0.9" fill="#6a6a6a" opacity="0.59"/><rect x="82.6" y="133" width="1" height="1.1" fill="#6a6a6a" opacity="0.52"/><rect x="78.5" y="132.7" width="3" height="1.2" fill="#6a6a6a" opacity="0.55"/><rect x="108.9" y="131.6" width="1.6" height="1.1" fill="#6a6a6a" opacity="0.62"/><rect x="8.7" y="133.5" width="2.6" height="1" fill="#6a6a6a" opacity="0.45"/><rect x="31.7" y="134.9" width="4.8" height="0.6" fill="#6a6a6a" opacity="0.57"/><rect x="49.7" y="134.3" width="3.7" height="1.1" fill="#6a6a6a" opacity="0.81"/><rect x="73" y="134.9" width="4" height="1" fill="#6a6a6a" opacity="0.64"/><rect x="110.7" y="135.8" width="3.8" height="0.6" fill="#6a6a6a" opacity="0.84"/><rect x="0.6" y="134.2" width="4.1" height="0.8" fill="#6a6a6a" opacity="0.88"/><rect x="80.6" y="135.1" width="2.7" height="1.1" fill="#6a6a6a" opacity="0.7"/><rect x="53.5" y="133.5" width="2.8" height="1" fill="#6a6a6a" opacity="0.55"/><rect x="55.1" y="133.2" width="3.2" height="0.7" fill="#6a6a6a" opacity="0.79"/><rect x="119.8" y="133.5" width="3" height="0.6" fill="#6a6a6a" opacity="0.55"/><rect x="20.4" y="134.1" width="3.3" height="0.6" fill="#6a6a6a" opacity="0.86"/><rect x="45.7" y="135.4" width="4.4" height="1.2" fill="#6a6a6a" opacity="0.5"/><rect x="60.1" y="131.4" width="4.6" height="0.5" fill="#6a6a6a" opacity="0.68"/><rect x="70.1" y="135.1" width="4.7" height="0.9" fill="#6a6a6a" opacity="0.9"/><rect x="73" y="134.7" width="3.1" height="0.8" fill="#6a6a6a" opacity="0.58"/><rect x="83.9" y="135.9" width="2.4" height="1" fill="#6a6a6a" opacity="0.66"/><rect x="14" y="133.3" width="2.5" height="0.9" fill="#6a6a6a" opacity="0.69"/><rect x="124.1" y="133.7" width="4.9" height="0.8" fill="#6a6a6a" opacity="0.71"/><rect x="140.5" y="133.9" width="2.4" height="1.1" fill="#6a6a6a" opacity="0.49"/><rect x="44.8" y="135.3" width="4.9" height="0.9" fill="#6a6a6a" opacity="0.46"/><rect x="126.1" y="135.3" width="3.8" height="1.2" fill="#6a6a6a" opacity="0.84"/><rect x="59.3" y="132.7" width="1.6" height="0.9" fill="#6a6a6a" opacity="0.65"/><rect x="26.5" y="134.4" width="1.7" height="0.9" fill="#6a6a6a" opacity="0.58"/><rect x="140.1" y="131.5" width="3.5" height="0.8" fill="#6a6a6a" opacity="0.79"/><rect x="43.3" y="131.3" width="3.8" height="0.7" fill="#6a6a6a" opacity="0.82"/><rect x="82.7" y="132.3" width="3.7" height="0.8" fill="#6a6a6a" opacity="0.68"/><rect x="37.5" y="133.9" width="3.6" height="1.2" fill="#6a6a6a" opacity="0.69"/><rect x="58" y="132.1" width="1.5" height="1" fill="#6a6a6a" opacity="0.45"/><rect x="14.1" y="133.9" width="1.7" height="1.1" fill="#6a6a6a" opacity="0.71"/><rect x="113.7" y="131.4" width="1.2" height="1" fill="#6a6a6a" opacity="0.56"/><rect x="100.9" y="132.1" width="2.4" height="0.7" fill="#6a6a6a" opacity="0.45"/><rect x="127.4" y="133" width="3.3" height="0.8" fill="#6a6a6a" opacity="0.59"/><rect x="7.7" y="134.2" width="4.6" height="1.2" fill="#6a6a6a" opacity="0.62"/><rect x="87.4" y="131.5" width="2" height="1.2" fill="#6a6a6a" opacity="0.83"/><rect x="44.4" y="135.3" width="4.6" height="0.7" fill="#6a6a6a" opacity="0.7"/><rect x="135.4" y="136" width="3" height="0.7" fill="#6a6a6a" opacity="0.59"/><rect x="101.3" y="132.8" width="1.9" height="1.1" fill="#6a6a6a" opacity="0.64"/><rect x="111.8" y="132.1" width="2" height="0.8" fill="#6a6a6a" opacity="0.49"/><rect x="0" y="129.2" width="141" height="0.6" fill="#6a6a6a" opacity="0.4"/><rect x="0" y="-1" width="141" height="2" fill="#1c1c1c"/><rect x="0" y="5.6" width="141" height="1.8" fill="#1c1c1c"/><rect x="0" y="22" width="141" height="2" fill="#1c1c1c"/><rect x="0" y="28.7" width="141" height="1.6" fill="#1c1c1c"/><rect x="0" y="35.5" width="141" height="2" fill="#1c1c1c"/><rect x="0" y="53" width="141" height="2" fill="#1c1c1c"/><rect x="0" y="59.2" width="141" height="1.6" fill="#1c1c1c"/><rect x="0" y="65.5" width="141" height="2" fill="#1c1c1c"/><rect x="0" y="81" width="141" height="2" fill="#1c1c1c"/><rect x="0" y="89.2" width="141" height="1.6" fill="#1c1c1c"/><rect x="0" y="95" width="141" height="2" fill="#1c1c1c"/><rect x="0" y="111.5" width="141" height="2" fill="#1c1c1c"/><rect x="0" y="118.2" width="141" height="1.6" fill="#1c1c1c"/><rect x="0" y="124" width="141" height="2" fill="#1c1c1c"/><rect x="0" y="138" width="141" height="2" fill="#1c1c1c"/><rect x="0" y="141" width="141" height="2" fill="#1c1c1c"/><rect x="71.5" y="6.5" width="1.4" height="16.5" fill="#151515"/><rect x="120" y="36.5" width="1.4" height="17.5" fill="#151515"/><rect x="27" y="54" width="1.4" height="6" fill="#2a2a2a"/><rect x="57" y="54" width="1.4" height="6" fill="#2a2a2a"/><rect x="105" y="54" width="1.4" height="6" fill="#2a2a2a"/><rect x="106" y="82" width="1.4" height="8" fill="#2a2a2a"/><rect x="71.5" y="96" width="1.4" height="16.5" fill="#151515"/><rect x="27" y="112.5" width="1.4" height="6.5" fill="#2a2a2a"/><rect x="57" y="112.5" width="1.4" height="6.5" fill="#2a2a2a"/><rect x="12.5" y="125" width="1.4" height="14" fill="#151515"/></svg></div>
<div class="a im" id="i12" style="left:206px;top:90px;width:142px;height:142px;background:#d6d5cc"><svg width="142" height="142" viewBox="0 0 142 142" shape-rendering="auto"><rect x="0" y="0" width="142" height="142" fill="#d2d2ca"/><rect x="0" y="2.7" width="142" height="17.7" fill="#d9d9d2"/><rect x="138" y="14.1" width="2.2" height="0.6" fill="#b2b2aa" opacity="0.67"/><rect x="54.8" y="11.1" width="2.6" height="0.6" fill="#b2b2aa" opacity="0.81"/><rect x="49.9" y="11.8" width="2" height="0.7" fill="#b2b2aa" opacity="0.52"/><rect x="5" y="12.8" width="3.7" height="0.6" fill="#b2b2aa" opacity="0.75"/><rect x="13.2" y="15.8" width="2.1" height="0.6" fill="#b2b2aa" opacity="0.62"/><rect x="118.8" y="11.7" width="4.2" height="0.7" fill="#b2b2aa" opacity="0.76"/><rect x="53.5" y="12" width="4.8" height="1.2" fill="#b2b2aa" opacity="0.65"/><rect x="32.3" y="11.5" width="2.8" height="1" fill="#b2b2aa" opacity="0.53"/><rect x="127.7" y="12.9" width="3.4" height="0.7" fill="#b2b2aa" opacity="0.7"/><rect x="30.2" y="11.4" width="4.5" height="0.9" fill="#b2b2aa" opacity="0.67"/><rect x="38.4" y="13" width="4.1" height="1" fill="#b2b2aa" opacity="0.68"/><rect x="44.1" y="11.2" width="2.6" height="0.6" fill="#b2b2aa" opacity="0.83"/><rect x="45.6" y="11.3" width="3.7" height="0.9" fill="#b2b2aa" opacity="0.58"/><rect x="71.1" y="11.1" width="2.2" height="0.7" fill="#b2b2aa" opacity="0.51"/><rect x="17.9" y="12.4" width="3.9" height="0.8" fill="#b2b2aa" opacity="0.85"/><rect x="110" y="16" width="4.5" height="0.6" fill="#b2b2aa" opacity="0.54"/><rect x="4.2" y="14.8" width="3.7" height="0.7" fill="#b2b2aa" opacity="0.61"/><rect x="93.6" y="12.2" width="3.8" height="1.1" fill="#b2b2aa" opacity="0.58"/><rect x="89.3" y="11.4" width="1.7" height="1.1" fill="#b2b2aa" opacity="0.77"/><rect x="101.2" y="10.9" width="1.2" height="0.6" fill="#b2b2aa" opacity="0.5"/><rect x="43" y="10.9" width="2.5" height="0.7" fill="#b2b2aa" opacity="0.72"/><rect x="25.5" y="14.2" width="4.4" height="1" fill="#b2b2aa" opacity="0.53"/><rect x="61.8" y="12.8" width="3.7" height="0.5" fill="#b2b2aa" opacity="0.82"/><rect x="110.3" y="10.9" width="2.1" height="1.1" fill="#b2b2aa" opacity="0.7"/><rect x="6.7" y="11.4" width="2" height="1.1" fill="#b2b2aa" opacity="0.51"/><rect x="129.9" y="11.2" width="4" height="1" fill="#b2b2aa" opacity="0.6"/><rect x="106.2" y="12.4" width="4.3" height="0.6" fill="#b2b2aa" opacity="0.87"/><rect x="60.2" y="14.9" width="4.7" height="1" fill="#b2b2aa" opacity="0.81"/><rect x="89.2" y="11" width="2.8" height="1" fill="#b2b2aa" opacity="0.61"/><rect x="72.7" y="11.5" width="4.7" height="1" fill="#b2b2aa" opacity="0.42"/><rect x="99.8" y="12.3" width="4.2" height="0.9" fill="#b2b2aa" opacity="0.88"/><rect x="90.5" y="12.2" width="3.2" height="0.5" fill="#b2b2aa" opacity="0.58"/><rect x="58.5" y="12.6" width="1.8" height="0.6" fill="#b2b2aa" opacity="0.75"/><rect x="95.2" y="12.2" width="2" height="0.9" fill="#b2b2aa" opacity="0.62"/><rect x="132.9" y="12.5" width="2.4" height="1.1" fill="#b2b2aa" opacity="0.47"/><rect x="80" y="15.7" width="2.3" height="0.9" fill="#b2b2aa" opacity="0.78"/><rect x="24" y="14.4" width="3.7" height="0.8" fill="#b2b2aa" opacity="0.78"/><rect x="118" y="12.5" width="1.5" height="0.8" fill="#b2b2aa" opacity="0.5"/><rect x="8.6" y="11.9" width="2.1" height="1" fill="#b2b2aa" opacity="0.62"/><rect x="16" y="13.6" width="2.3" height="0.8" fill="#b2b2aa" opacity="0.48"/><rect x="10.2" y="16.8" width="1" height="1" fill="#b2b2aa" opacity="0.44"/><rect x="101.8" y="14.2" width="4.9" height="0.6" fill="#b2b2aa" opacity="0.64"/><rect x="61.7" y="14" width="1.8" height="0.5" fill="#b2b2aa" opacity="0.86"/><rect x="91.5" y="16.5" width="3.5" height="1" fill="#b2b2aa" opacity="0.53"/><rect x="34.9" y="10.8" width="1.6" height="1" fill="#b2b2aa" opacity="0.82"/><rect x="42.1" y="14.6" width="1.7" height="1.1" fill="#b2b2aa" opacity="0.86"/><rect x="23.9" y="15.8" width="4.1" height="1" fill="#b2b2aa" opacity="0.56"/><rect x="26.2" y="12.6" width="4.3" height="0.8" fill="#b2b2aa" opacity="0.68"/><rect x="52.4" y="12.1" width="4.3" height="0.5" fill="#b2b2aa" opacity="0.68"/><rect x="89.2" y="15" width="4.3" height="1.1" fill="#b2b2aa" opacity="0.87"/><rect x="70.2" y="11.6" width="3" height="0.7" fill="#b2b2aa" opacity="0.69"/><rect x="11.4" y="11.7" width="3.8" height="0.8" fill="#b2b2aa" opacity="0.88"/><rect x="12.7" y="13.4" width="1.2" height="0.6" fill="#b2b2aa" opacity="0.76"/><rect x="0.4" y="16" width="4.4" height="1.1" fill="#b2b2aa" opacity="0.61"/><rect x="40.2" y="13.9" width="3.6" height="0.8" fill="#b2b2aa" opacity="0.57"/><rect x="62.3" y="15.8" width="3.7" height="1.1" fill="#b2b2aa" opacity="0.48"/><rect x="42" y="14.2" width="2.8" height="0.7" fill="#b2b2aa" opacity="0.5"/><rect x="12.1" y="13.5" width="2.3" height="1.2" fill="#b2b2aa" opacity="0.85"/><rect x="122.9" y="16.6" width="4.9" height="0.9" fill="#b2b2aa" opacity="0.81"/><rect x="8.5" y="14.4" width="3.7" height="0.7" fill="#b2b2aa" opacity="0.69"/><rect x="135.3" y="14.7" width="2.9" height="0.7" fill="#b2b2aa" opacity="0.57"/><rect x="125.7" y="11.8" width="1.1" height="1" fill="#b2b2aa" opacity="0.62"/><rect x="12.1" y="13" width="3.6" height="0.9" fill="#b2b2aa" opacity="0.61"/><rect x="75.3" y="13.1" width="3.3" height="0.6" fill="#b2b2aa" opacity="0.49"/><rect x="126.4" y="11.4" width="3.2" height="1.1" fill="#b2b2aa" opacity="0.53"/><rect x="13.5" y="12.2" width="3.1" height="0.8" fill="#b2b2aa" opacity="0.68"/><rect x="32.2" y="11.4" width="3.3" height="0.9" fill="#b2b2aa" opacity="0.69"/><rect x="11.4" y="11.1" width="2.6" height="0.8" fill="#b2b2aa" opacity="0.83"/><rect x="78.2" y="15.4" width="3.9" height="0.6" fill="#b2b2aa" opacity="0.9"/><rect x="102.5" y="15.8" width="1.4" height="0.8" fill="#b2b2aa" opacity="0.49"/><rect x="136.3" y="15.5" width="3.3" height="0.6" fill="#b2b2aa" opacity="0.79"/><rect x="8.2" y="13" width="1.9" height="0.5" fill="#b2b2aa" opacity="0.7"/><rect x="30.3" y="15" width="2.2" height="0.8" fill="#b2b2aa" opacity="0.84"/><rect x="88.2" y="14.2" width="4.5" height="1.1" fill="#b2b2aa" opacity="0.84"/><rect x="23.9" y="12.8" width="4" height="1" fill="#b2b2aa" opacity="0.74"/><rect x="117.2" y="13" width="1.5" height="1" fill="#b2b2aa" opacity="0.87"/><rect x="102.5" y="14.4" width="1.2" height="0.6" fill="#b2b2aa" opacity="0.67"/><rect x="114" y="16.4" width="1.5" height="1" fill="#b2b2aa" opacity="0.53"/><rect x="27.4" y="15.9" width="2.8" height="0.9" fill="#b2b2aa" opacity="0.46"/><rect x="3" y="15.6" width="1.4" height="0.6" fill="#b2b2aa" opacity="0.68"/><rect x="41.2" y="13" width="3.7" height="0.6" fill="#b2b2aa" opacity="0.84"/><rect x="76.5" y="15.7" width="3.8" height="1.2" fill="#b2b2aa" opacity="0.41"/><rect x="48.6" y="13.8" width="1.6" height="1.1" fill="#b2b2aa" opacity="0.8"/><rect x="5" y="15.7" width="1.7" height="1" fill="#b2b2aa" opacity="0.6"/><rect x="67.6" y="15.9" width="1.6" height="0.8" fill="#b2b2aa" opacity="0.84"/><rect x="86.7" y="12.7" width="1.3" height="0.7" fill="#b2b2aa" opacity="0.85"/><rect x="83.7" y="11.7" width="1.2" height="0.8" fill="#b2b2aa" opacity="0.63"/><rect x="81.9" y="12.9" width="2.6" height="0.5" fill="#b2b2aa" opacity="0.69"/><rect x="47.4" y="13.5" width="1.1" height="1.2" fill="#b2b2aa" opacity="0.42"/><rect x="20.7" y="12.4" width="3.7" height="0.7" fill="#b2b2aa" opacity="0.65"/><rect x="0" y="8" width="142" height="0.6" fill="#b2b2aa" opacity="0.4"/><rect x="0" y="33.3" width="142" height="16.4" fill="#d9d9d2"/><rect x="37.2" y="43.7" width="3.3" height="1.2" fill="#b2b2aa" opacity="0.9"/><rect x="4.8" y="45.1" width="3.2" height="1.1" fill="#b2b2aa" opacity="0.79"/><rect x="89.9" y="42.8" width="3.5" height="0.7" fill="#b2b2aa" opacity="0.8"/><rect x="123.9" y="44.6" width="4.8" height="0.7" fill="#b2b2aa" opacity="0.78"/><rect x="105" y="44.3" width="3" height="0.7" fill="#b2b2aa" opacity="0.68"/><rect x="57.6" y="42.6" width="1.2" height="0.7" fill="#b2b2aa" opacity="0.89"/><rect x="68.4" y="42.1" width="2.5" height="0.7" fill="#b2b2aa" opacity="0.57"/><rect x="19.3" y="45.7" width="1" height="0.8" fill="#b2b2aa" opacity="0.62"/><rect x="80.8" y="41.6" width="2.2" height="0.5" fill="#b2b2aa" opacity="0.55"/><rect x="43.8" y="43.8" width="3.9" height="1.2" fill="#b2b2aa" opacity="0.57"/><rect x="130.8" y="41.1" width="3.3" height="0.6" fill="#b2b2aa" opacity="0.69"/><rect x="140.2" y="45.1" width="2.4" height="0.8" fill="#b2b2aa" opacity="0.83"/><rect x="9.6" y="45.8" width="2.9" height="0.7" fill="#b2b2aa" opacity="0.53"/><rect x="3.3" y="42.2" width="1.7" height="1" fill="#b2b2aa" opacity="0.51"/><rect x="56.7" y="44.1" width="1.8" height="1.1" fill="#b2b2aa" opacity="0.72"/><rect x="27.9" y="46.2" width="3.9" height="0.9" fill="#b2b2aa" opacity="0.44"/><rect x="114.9" y="42.6" width="4.5" height="0.6" fill="#b2b2aa" opacity="0.49"/><rect x="76.2" y="44.4" width="4.5" height="1.1" fill="#b2b2aa" opacity="0.51"/><rect x="46.4" y="44.4" width="4" height="0.8" fill="#b2b2aa" opacity="0.74"/><rect x="48" y="43.1" width="1.2" height="0.5" fill="#b2b2aa" opacity="0.71"/><rect x="47.5" y="44.1" width="3" height="0.7" fill="#b2b2aa" opacity="0.63"/><rect x="1.9" y="43.9" width="4.7" height="1.2" fill="#b2b2aa" opacity="0.43"/><rect x="87.2" y="42.6" width="3.9" height="0.6" fill="#b2b2aa" opacity="0.48"/><rect x="20.3" y="41.2" width="4.1" height="1.1" fill="#b2b2aa" opacity="0.61"/><rect x="76.5" y="43.9" width="3.4" height="1" fill="#b2b2aa" opacity="0.7"/><rect x="47" y="42.2" width="4" height="1" fill="#b2b2aa" opacity="0.78"/><rect x="110.2" y="45.1" width="2.2" height="1.2" fill="#b2b2aa" opacity="0.63"/><rect x="39.5" y="46.1" width="3.1" height="0.6" fill="#b2b2aa" opacity="0.4"/><rect x="67.6" y="45.1" width="3.6" height="0.8" fill="#b2b2aa" opacity="0.89"/><rect x="32.4" y="41.2" width="4" height="0.5" fill="#b2b2aa" opacity="0.47"/><rect x="8.5" y="43.9" width="3" height="0.6" fill="#b2b2aa" opacity="0.87"/><rect x="51.9" y="41.7" width="1.6" height="1" fill="#b2b2aa" opacity="0.86"/><rect x="23" y="45.1" width="1.1" height="0.7" fill="#b2b2aa" opacity="0.89"/><rect x="70.8" y="42.7" width="3.5" height="1.1" fill="#b2b2aa" opacity="0.63"/><rect x="46" y="41.3" width="4.6" height="1" fill="#b2b2aa" opacity="0.43"/><rect x="91.7" y="45.6" width="2.6" height="0.5" fill="#b2b2aa" opacity="0.68"/><rect x="58.2" y="46.1" width="4.7" height="0.9" fill="#b2b2aa" opacity="0.51"/><rect x="35.8" y="43.2" width="2" height="0.7" fill="#b2b2aa" opacity="0.5"/><rect x="107.8" y="42.4" width="3.6" height="1.2" fill="#b2b2aa" opacity="0.51"/><rect x="80.9" y="45.6" width="1.6" height="1.1" fill="#b2b2aa" opacity="0.53"/><rect x="106.7" y="42.3" width="4.3" height="0.7" fill="#b2b2aa" opacity="0.64"/><rect x="126.5" y="44.6" width="1.6" height="0.9" fill="#b2b2aa" opacity="0.63"/><rect x="82.2" y="41.9" width="4.5" height="1.1" fill="#b2b2aa" opacity="0.58"/><rect x="110.7" y="41.7" width="4.5" height="1.1" fill="#b2b2aa" opacity="0.9"/><rect x="42.3" y="41.3" width="1.1" height="1.2" fill="#b2b2aa" opacity="0.4"/><rect x="129.4" y="44.9" width="1.6" height="0.6" fill="#b2b2aa" opacity="0.48"/><rect x="97" y="42.6" width="1.4" height="1.1" fill="#b2b2aa" opacity="0.76"/><rect x="125.2" y="40.9" width="4.9" height="0.7" fill="#b2b2aa" opacity="0.8"/><rect x="97.9" y="43.6" width="1.2" height="0.7" fill="#b2b2aa" opacity="0.62"/><rect x="14.9" y="46.4" width="1.1" height="0.7" fill="#b2b2aa" opacity="0.84"/><rect x="17.1" y="41.5" width="2.9" height="0.8" fill="#b2b2aa" opacity="0.49"/><rect x="97.3" y="44.9" width="1.6" height="0.9" fill="#b2b2aa" opacity="0.46"/><rect x="50.2" y="46" width="3" height="0.7" fill="#b2b2aa" opacity="0.51"/><rect x="137.4" y="44.9" width="4.5" height="0.7" fill="#b2b2aa" opacity="0.49"/><rect x="37.6" y="40.9" width="1.3" height="0.9" fill="#b2b2aa" opacity="0.6"/><rect x="79" y="40.7" width="2.5" height="1" fill="#b2b2aa" opacity="0.73"/><rect x="77.2" y="44.6" width="3.2" height="1.2" fill="#b2b2aa" opacity="0.84"/><rect x="101.9" y="42.5" width="2.6" height="0.8" fill="#b2b2aa" opacity="0.89"/><rect x="55" y="43" width="2.5" height="0.6" fill="#b2b2aa" opacity="0.9"/><rect x="0.7" y="46" width="3.4" height="0.7" fill="#b2b2aa" opacity="0.71"/><rect x="53.5" y="41.8" width="2" height="0.6" fill="#b2b2aa" opacity="0.82"/><rect x="111.3" y="41" width="4.6" height="1" fill="#b2b2aa" opacity="0.56"/><rect x="91.8" y="42.5" width="3.2" height="1.2" fill="#b2b2aa" opacity="0.4"/><rect x="106" y="43.6" width="4.4" height="0.9" fill="#b2b2aa" opacity="0.9"/><rect x="33.3" y="44.9" width="3.5" height="0.8" fill="#b2b2aa" opacity="0.76"/><rect x="55.9" y="44.2" width="3.1" height="1" fill="#b2b2aa" opacity="0.56"/><rect x="89.3" y="42" width="3.2" height="0.9" fill="#b2b2aa" opacity="0.53"/><rect x="129" y="44.8" width="2.9" height="0.9" fill="#b2b2aa" opacity="0.64"/><rect x="31.4" y="46" width="1.6" height="0.9" fill="#b2b2aa" opacity="0.66"/><rect x="74.9" y="42" width="4.3" height="0.6" fill="#b2b2aa" opacity="0.81"/><rect x="65.4" y="45.4" width="3.6" height="1.1" fill="#b2b2aa" opacity="0.83"/><rect x="6.1" y="45.5" width="2.5" height="1.1" fill="#b2b2aa" opacity="0.46"/><rect x="21.8" y="41.3" width="2" height="0.7" fill="#b2b2aa" opacity="0.8"/><rect x="74" y="41.2" width="2.8" height="0.8" fill="#b2b2aa" opacity="0.9"/><rect x="98.7" y="43.4" width="2.8" height="1.1" fill="#b2b2aa" opacity="0.78"/><rect x="21.3" y="42.8" width="3.7" height="0.9" fill="#b2b2aa" opacity="0.52"/><rect x="52.6" y="42.9" width="2.4" height="0.5" fill="#b2b2aa" opacity="0.5"/><rect x="81" y="41.7" width="1.2" height="1" fill="#b2b2aa" opacity="0.54"/><rect x="46" y="45.5" width="2" height="0.6" fill="#b2b2aa" opacity="0.72"/><rect x="122" y="43.1" width="1.8" height="1.1" fill="#b2b2aa" opacity="0.71"/><rect x="52.8" y="43.2" width="1.2" height="0.8" fill="#b2b2aa" opacity="0.76"/><rect x="41.9" y="44.4" width="2.6" height="1.1" fill="#b2b2aa" opacity="0.58"/><rect x="54.7" y="46" width="3.3" height="0.6" fill="#b2b2aa" opacity="0.89"/><rect x="101.1" y="44.5" width="2.5" height="0.7" fill="#b2b2aa" opacity="0.44"/><rect x="107.4" y="43.7" width="2.5" height="0.8" fill="#b2b2aa" opacity="0.85"/><rect x="107.5" y="44.1" width="1.1" height="0.8" fill="#b2b2aa" opacity="0.63"/><rect x="119.2" y="43.4" width="2.7" height="1.1" fill="#b2b2aa" opacity="0.62"/><rect x="69.8" y="45.4" width="3" height="1" fill="#b2b2aa" opacity="0.77"/><rect x="57" y="44.6" width="1.2" height="0.9" fill="#b2b2aa" opacity="0.78"/><rect x="109.3" y="41.9" width="1.5" height="0.6" fill="#b2b2aa" opacity="0.81"/><rect x="0" y="38.2" width="142" height="0.6" fill="#b2b2aa" opacity="0.4"/><rect x="0" y="63.4" width="142" height="17" fill="#d9d9d2"/><rect x="14.4" y="75.5" width="1.4" height="0.9" fill="#b2b2aa" opacity="0.43"/><rect x="96.7" y="73.9" width="3.8" height="0.5" fill="#b2b2aa" opacity="0.75"/><rect x="59.3" y="77" width="3.3" height="1.1" fill="#b2b2aa" opacity="0.84"/><rect x="20.7" y="74.1" width="2.3" height="0.5" fill="#b2b2aa" opacity="0.89"/><rect x="39" y="72.9" width="2" height="0.7" fill="#b2b2aa" opacity="0.83"/><rect x="78.9" y="73.6" width="3" height="0.5" fill="#b2b2aa" opacity="0.55"/><rect x="123.1" y="76.1" width="4.2" height="0.7" fill="#b2b2aa" opacity="0.5"/><rect x="7.4" y="73.3" width="3.1" height="0.8" fill="#b2b2aa" opacity="0.64"/><rect x="82.9" y="75.8" width="2.5" height="0.6" fill="#b2b2aa" opacity="0.86"/><rect x="79" y="72.9" width="1.2" height="0.9" fill="#b2b2aa" opacity="0.6"/><rect x="80.2" y="72.7" width="2.3" height="1.1" fill="#b2b2aa" opacity="0.55"/><rect x="100.9" y="74.6" width="4.2" height="0.8" fill="#b2b2aa" opacity="0.87"/><rect x="63.2" y="71.4" width="4.5" height="0.8" fill="#b2b2aa" opacity="0.72"/><rect x="7" y="71.5" width="4.5" height="0.9" fill="#b2b2aa" opacity="0.49"/><rect x="131" y="75.8" width="3.2" height="0.8" fill="#b2b2aa" opacity="0.74"/><rect x="95.8" y="72.3" width="2.2" height="1.1" fill="#b2b2aa" opacity="0.47"/><rect x="130.3" y="71.7" width="1.8" height="0.6" fill="#b2b2aa" opacity="0.79"/><rect x="135" y="75" width="2.7" height="0.7" fill="#b2b2aa" opacity="0.85"/><rect x="97.4" y="71.4" width="1.6" height="1" fill="#b2b2aa" opacity="0.42"/><rect x="118.7" y="72.4" width="2.2" height="0.9" fill="#b2b2aa" opacity="0.56"/><rect x="79.6" y="76.5" width="1.6" height="0.7" fill="#b2b2aa" opacity="0.82"/><rect x="21.6" y="76.9" width="4.2" height="0.8" fill="#b2b2aa" opacity="0.42"/><rect x="54" y="72.4" width="3.6" height="0.9" fill="#b2b2aa" opacity="0.45"/><rect x="66" y="73.6" width="3.9" height="1" fill="#b2b2aa" opacity="0.46"/><rect x="117.6" y="76.5" width="1.5" height="1.2" fill="#b2b2aa" opacity="0.87"/><rect x="74.7" y="73.1" width="2.2" height="1" fill="#b2b2aa" opacity="0.65"/><rect x="132" y="73.9" width="1.4" height="1.1" fill="#b2b2aa" opacity="0.7"/><rect x="76.8" y="71.9" width="1.4" height="0.7" fill="#b2b2aa" opacity="0.85"/><rect x="120" y="76.6" width="1.9" height="0.5" fill="#b2b2aa" opacity="0.7"/><rect x="137.4" y="76.7" width="2.4" height="1" fill="#b2b2aa" opacity="0.43"/><rect x="47.3" y="72.5" width="2.8" height="1" fill="#b2b2aa" opacity="0.49"/><rect x="111.9" y="71.5" width="2.2" height="0.9" fill="#b2b2aa" opacity="0.45"/><rect x="78.3" y="74.6" width="4.2" height="0.8" fill="#b2b2aa" opacity="0.42"/><rect x="72.9" y="74.9" width="1.4" height="0.6" fill="#b2b2aa" opacity="0.69"/><rect x="50.1" y="75" width="2.5" height="0.6" fill="#b2b2aa" opacity="0.48"/><rect x="133.7" y="76.1" width="2.3" height="1.1" fill="#b2b2aa" opacity="0.64"/><rect x="21.2" y="76.3" width="1.4" height="0.6" fill="#b2b2aa" opacity="0.65"/><rect x="76.1" y="73.8" width="1.5" height="0.6" fill="#b2b2aa" opacity="0.67"/><rect x="72" y="72.2" width="2.5" height="0.8" fill="#b2b2aa" opacity="0.5"/><rect x="18.1" y="76.2" width="2" height="0.9" fill="#b2b2aa" opacity="0.85"/><rect x="2.1" y="74" width="4.8" height="1.1" fill="#b2b2aa" opacity="0.69"/><rect x="97.8" y="75.5" width="1.9" height="0.6" fill="#b2b2aa" opacity="0.53"/><rect x="4.4" y="74.1" width="2.6" height="0.7" fill="#b2b2aa" opacity="0.85"/><rect x="12" y="72.4" width="3.3" height="0.9" fill="#b2b2aa" opacity="0.79"/><rect x="100.9" y="72.5" width="1.2" height="0.9" fill="#b2b2aa" opacity="0.89"/><rect x="5.9" y="75.2" width="3.5" height="1.1" fill="#b2b2aa" opacity="0.57"/><rect x="115.1" y="76.5" width="2.8" height="0.5" fill="#b2b2aa" opacity="0.87"/><rect x="58.5" y="71.6" width="2.6" height="0.7" fill="#b2b2aa" opacity="0.77"/><rect x="96.4" y="73.1" width="1.6" height="0.6" fill="#b2b2aa" opacity="0.5"/><rect x="31.2" y="76.9" width="2.3" height="1.2" fill="#b2b2aa" opacity="0.8"/><rect x="68.1" y="75.7" width="3" height="1.1" fill="#b2b2aa" opacity="0.78"/><rect x="90.4" y="74.8" width="1.8" height="1.1" fill="#b2b2aa" opacity="0.79"/><rect x="13.1" y="73.1" width="3.9" height="0.6" fill="#b2b2aa" opacity="0.88"/><rect x="95.5" y="71.9" width="4" height="1.1" fill="#b2b2aa" opacity="0.87"/><rect x="128.5" y="76" width="4" height="1.1" fill="#b2b2aa" opacity="0.7"/><rect x="61.8" y="75.7" width="4.3" height="1.1" fill="#b2b2aa" opacity="0.55"/><rect x="136.5" y="76.7" width="3.1" height="0.6" fill="#b2b2aa" opacity="0.88"/><rect x="111.8" y="76" width="2" height="0.7" fill="#b2b2aa" opacity="0.5"/><rect x="65" y="74" width="1.9" height="1.1" fill="#b2b2aa" opacity="0.74"/><rect x="100.9" y="75.7" width="2.6" height="1.1" fill="#b2b2aa" opacity="0.74"/><rect x="133.7" y="73.5" width="4.3" height="0.6" fill="#b2b2aa" opacity="0.73"/><rect x="118.7" y="74.6" width="2.4" height="1.1" fill="#b2b2aa" opacity="0.8"/><rect x="0.6" y="71.1" width="3" height="0.6" fill="#b2b2aa" opacity="0.81"/><rect x="59.4" y="73.8" width="3.4" height="0.7" fill="#b2b2aa" opacity="0.51"/><rect x="50.2" y="74.7" width="4.4" height="0.7" fill="#b2b2aa" opacity="0.44"/><rect x="38.5" y="73.7" width="3.8" height="1" fill="#b2b2aa" opacity="0.8"/><rect x="17.1" y="71.3" width="3.7" height="1.1" fill="#b2b2aa" opacity="0.49"/><rect x="38.6" y="73.2" width="4.8" height="0.7" fill="#b2b2aa" opacity="0.84"/><rect x="86.7" y="73.4" width="4.6" height="0.8" fill="#b2b2aa" opacity="0.88"/><rect x="72" y="72.2" width="5" height="1.1" fill="#b2b2aa" opacity="0.48"/><rect x="74.9" y="72.1" width="1" height="1.2" fill="#b2b2aa" opacity="0.63"/><rect x="114.9" y="73.1" width="2" height="0.6" fill="#b2b2aa" opacity="0.68"/><rect x="122.4" y="73.3" width="3.1" height="1.2" fill="#b2b2aa" opacity="0.85"/><rect x="94.6" y="74.8" width="1.3" height="0.8" fill="#b2b2aa" opacity="0.88"/><rect x="51.4" y="74.8" width="3.6" height="0.8" fill="#b2b2aa" opacity="0.66"/><rect x="96.1" y="74" width="4.6" height="0.8" fill="#b2b2aa" opacity="0.89"/><rect x="8.1" y="75.1" width="4.3" height="0.9" fill="#b2b2aa" opacity="0.62"/><rect x="106.7" y="75.4" width="4.6" height="1" fill="#b2b2aa" opacity="0.42"/><rect x="46.2" y="76.7" width="1.5" height="1.1" fill="#b2b2aa" opacity="0.47"/><rect x="83.4" y="71.3" width="3.3" height="0.8" fill="#b2b2aa" opacity="0.77"/><rect x="91.1" y="75.6" width="2.1" height="0.7" fill="#b2b2aa" opacity="0.67"/><rect x="59.7" y="74.9" width="4.9" height="1.1" fill="#b2b2aa" opacity="0.74"/><rect x="54" y="75.3" width="4.9" height="1" fill="#b2b2aa" opacity="0.54"/><rect x="23" y="76" width="3.3" height="1.1" fill="#b2b2aa" opacity="0.57"/><rect x="19.9" y="76.3" width="3.1" height="0.6" fill="#b2b2aa" opacity="0.77"/><rect x="24.2" y="71.4" width="2.2" height="0.7" fill="#b2b2aa" opacity="0.59"/><rect x="137.3" y="72.2" width="4.8" height="0.7" fill="#b2b2aa" opacity="0.87"/><rect x="28" y="73.7" width="2.3" height="0.6" fill="#b2b2aa" opacity="0.53"/><rect x="55.9" y="76.8" width="2.5" height="0.7" fill="#b2b2aa" opacity="0.5"/><rect x="129" y="76" width="2.8" height="0.9" fill="#b2b2aa" opacity="0.79"/><rect x="0" y="68.5" width="142" height="0.6" fill="#b2b2aa" opacity="0.4"/><rect x="0" y="92.6" width="142" height="17" fill="#d9d9d2"/><rect x="44.7" y="104.8" width="1.6" height="0.8" fill="#b2b2aa" opacity="0.68"/><rect x="95.2" y="101.9" width="4" height="0.8" fill="#b2b2aa" opacity="0.86"/><rect x="75.2" y="104" width="2.2" height="0.7" fill="#b2b2aa" opacity="0.79"/><rect x="5.9" y="103.6" width="4.3" height="0.7" fill="#b2b2aa" opacity="0.87"/><rect x="37.7" y="100.7" width="2" height="0.9" fill="#b2b2aa" opacity="0.78"/><rect x="96.3" y="105.1" width="2.7" height="0.6" fill="#b2b2aa" opacity="0.55"/><rect x="91.6" y="104" width="4.9" height="1" fill="#b2b2aa" opacity="0.79"/><rect x="56" y="104.7" width="4.8" height="0.7" fill="#b2b2aa" opacity="0.6"/><rect x="114.4" y="101.4" width="2.4" height="1.1" fill="#b2b2aa" opacity="0.67"/><rect x="74" y="105.6" width="3.7" height="0.6" fill="#b2b2aa" opacity="0.57"/><rect x="9.4" y="103.2" width="2.7" height="1.1" fill="#b2b2aa" opacity="0.73"/><rect x="82.1" y="103.7" width="2.6" height="0.7" fill="#b2b2aa" opacity="0.82"/><rect x="112" y="101.1" width="4.4" height="1" fill="#b2b2aa" opacity="0.78"/><rect x="71.1" y="105.6" width="4.6" height="1" fill="#b2b2aa" opacity="0.81"/><rect x="92.1" y="101" width="4.5" height="1" fill="#b2b2aa" opacity="0.75"/><rect x="87" y="100.7" width="2.1" height="0.9" fill="#b2b2aa" opacity="0.81"/><rect x="38.8" y="101.6" width="1.9" height="0.6" fill="#b2b2aa" opacity="0.74"/><rect x="138.4" y="102.4" width="4.2" height="1" fill="#b2b2aa" opacity="0.44"/><rect x="119.1" y="100.3" width="2.3" height="0.9" fill="#b2b2aa" opacity="0.47"/><rect x="39.1" y="102.9" width="1.2" height="0.9" fill="#b2b2aa" opacity="0.8"/><rect x="5.6" y="100.9" width="4.3" height="0.7" fill="#b2b2aa" opacity="0.71"/><rect x="48.3" y="103.6" width="2.3" height="0.7" fill="#b2b2aa" opacity="0.8"/><rect x="29.7" y="105.1" width="4.4" height="0.9" fill="#b2b2aa" opacity="0.42"/><rect x="110.5" y="103.3" width="1.1" height="0.8" fill="#b2b2aa" opacity="0.43"/><rect x="89.5" y="103.7" width="3.9" height="0.8" fill="#b2b2aa" opacity="0.66"/><rect x="83.6" y="105.4" width="1.9" height="1.2" fill="#b2b2aa" opacity="0.8"/><rect x="136.5" y="106.1" width="2.3" height="0.5" fill="#b2b2aa" opacity="0.64"/><rect x="19" y="104.3" width="2.8" height="1" fill="#b2b2aa" opacity="0.63"/><rect x="48.5" y="102.6" width="1.8" height="0.7" fill="#b2b2aa" opacity="0.5"/><rect x="104.5" y="102.9" width="3.1" height="0.6" fill="#b2b2aa" opacity="0.75"/><rect x="27.9" y="103.6" width="2.1" height="1" fill="#b2b2aa" opacity="0.89"/><rect x="106.2" y="105.7" width="4.8" height="1" fill="#b2b2aa" opacity="0.76"/><rect x="8.9" y="100.3" width="1.8" height="1.1" fill="#b2b2aa" opacity="0.76"/><rect x="89.5" y="102.4" width="2.1" height="0.6" fill="#b2b2aa" opacity="0.72"/><rect x="140.8" y="100.5" width="2.2" height="0.6" fill="#b2b2aa" opacity="0.58"/><rect x="127.7" y="103" width="4.2" height="0.6" fill="#b2b2aa" opacity="0.45"/><rect x="21.9" y="103.1" width="4.1" height="1.2" fill="#b2b2aa" opacity="0.86"/><rect x="112.9" y="105.1" width="2.9" height="0.6" fill="#b2b2aa" opacity="0.45"/><rect x="80" y="101.5" width="3" height="0.7" fill="#b2b2aa" opacity="0.41"/><rect x="129.1" y="105.9" width="3.8" height="1.2" fill="#b2b2aa" opacity="0.62"/><rect x="104" y="105.1" width="2.5" height="1.1" fill="#b2b2aa" opacity="0.47"/><rect x="1.8" y="103.7" width="1.9" height="0.8" fill="#b2b2aa" opacity="0.4"/><rect x="117.9" y="103" width="4.1" height="0.5" fill="#b2b2aa" opacity="0.84"/><rect x="75.9" y="102.2" width="1.3" height="0.9" fill="#b2b2aa" opacity="0.84"/><rect x="68.8" y="101.5" width="3.6" height="0.7" fill="#b2b2aa" opacity="0.85"/><rect x="54.3" y="103.8" width="1.4" height="0.6" fill="#b2b2aa" opacity="0.5"/><rect x="64.8" y="104" width="3.3" height="1" fill="#b2b2aa" opacity="0.62"/><rect x="9.6" y="100.6" width="3.9" height="0.8" fill="#b2b2aa" opacity="0.6"/><rect x="95.6" y="101.7" width="3.9" height="1" fill="#b2b2aa" opacity="0.75"/><rect x="67" y="105.7" width="1.6" height="0.9" fill="#b2b2aa" opacity="0.43"/><rect x="33.9" y="101.6" width="4.9" height="0.8" fill="#b2b2aa" opacity="0.79"/><rect x="117" y="104.7" width="3.5" height="0.5" fill="#b2b2aa" opacity="0.45"/><rect x="138.6" y="100.5" width="4.2" height="0.5" fill="#b2b2aa" opacity="0.52"/><rect x="132.2" y="104.2" width="1.9" height="1.2" fill="#b2b2aa" opacity="0.72"/><rect x="130.5" y="101.2" width="2.1" height="0.5" fill="#b2b2aa" opacity="0.78"/><rect x="14.7" y="104.5" width="4.9" height="0.6" fill="#b2b2aa" opacity="0.8"/><rect x="23.1" y="100.9" width="3" height="1.1" fill="#b2b2aa" opacity="0.84"/><rect x="130.1" y="105.3" width="1" height="0.9" fill="#b2b2aa" opacity="0.81"/><rect x="71.4" y="103.8" width="3.5" height="1.1" fill="#b2b2aa" opacity="0.44"/><rect x="7.7" y="102" width="3.2" height="0.8" fill="#b2b2aa" opacity="0.4"/><rect x="105.8" y="105.2" width="1.1" height="1.1" fill="#b2b2aa" opacity="0.63"/><rect x="17.3" y="101.5" width="3.6" height="0.8" fill="#b2b2aa" opacity="0.46"/><rect x="138.7" y="102.3" width="3.2" height="0.6" fill="#b2b2aa" opacity="0.77"/><rect x="120.7" y="100.9" width="4.4" height="0.8" fill="#b2b2aa" opacity="0.55"/><rect x="108.3" y="103.9" width="1.6" height="1.2" fill="#b2b2aa" opacity="0.78"/><rect x="1" y="100.9" width="1.3" height="1" fill="#b2b2aa" opacity="0.7"/><rect x="73.9" y="102.7" width="2.8" height="0.9" fill="#b2b2aa" opacity="0.72"/><rect x="130.1" y="105" width="3.9" height="1.1" fill="#b2b2aa" opacity="0.82"/><rect x="101.8" y="104.3" width="1.1" height="1.1" fill="#b2b2aa" opacity="0.62"/><rect x="124.7" y="105.9" width="1.7" height="0.8" fill="#b2b2aa" opacity="0.75"/><rect x="35.9" y="102.3" width="2.2" height="0.7" fill="#b2b2aa" opacity="0.45"/><rect x="62.9" y="104.1" width="4.9" height="1.2" fill="#b2b2aa" opacity="0.78"/><rect x="118.8" y="104.7" width="5" height="0.7" fill="#b2b2aa" opacity="0.52"/><rect x="58.6" y="101.6" width="1.1" height="1.1" fill="#b2b2aa" opacity="0.86"/><rect x="46.7" y="104.9" width="4.1" height="1.1" fill="#b2b2aa" opacity="0.8"/><rect x="75.5" y="105.2" width="1.4" height="0.7" fill="#b2b2aa" opacity="0.71"/><rect x="52.1" y="106" width="3.1" height="0.6" fill="#b2b2aa" opacity="0.67"/><rect x="92.3" y="105.8" width="3.2" height="0.8" fill="#b2b2aa" opacity="0.86"/><rect x="98" y="100.8" width="4.9" height="0.6" fill="#b2b2aa" opacity="0.54"/><rect x="128.7" y="101.8" width="1.1" height="1" fill="#b2b2aa" opacity="0.89"/><rect x="25" y="104.3" width="2.8" height="1" fill="#b2b2aa" opacity="0.77"/><rect x="106.9" y="101.8" width="2" height="0.5" fill="#b2b2aa" opacity="0.75"/><rect x="29.7" y="106" width="2" height="1" fill="#b2b2aa" opacity="0.7"/><rect x="93.2" y="104.4" width="3.4" height="0.7" fill="#b2b2aa" opacity="0.43"/><rect x="9.5" y="102.4" width="1.1" height="0.6" fill="#b2b2aa" opacity="0.46"/><rect x="70.1" y="104.3" width="4.9" height="0.7" fill="#b2b2aa" opacity="0.78"/><rect x="25.3" y="102.1" width="1.4" height="0.8" fill="#b2b2aa" opacity="0.74"/><rect x="63.2" y="100.8" width="3.9" height="1.2" fill="#b2b2aa" opacity="0.57"/><rect x="118.2" y="105.2" width="1.1" height="0.7" fill="#b2b2aa" opacity="0.83"/><rect x="114" y="101.9" width="3.7" height="0.5" fill="#b2b2aa" opacity="0.49"/><rect x="0" y="97.7" width="142" height="0.6" fill="#b2b2aa" opacity="0.4"/><rect x="0" y="123.3" width="142" height="17.4" fill="#d9d9d2"/><rect x="128.5" y="135.1" width="1.6" height="0.9" fill="#b2b2aa" opacity="0.73"/><rect x="25.6" y="131.7" width="1.6" height="1.2" fill="#b2b2aa" opacity="0.59"/><rect x="92.6" y="132.5" width="3.3" height="0.5" fill="#b2b2aa" opacity="0.41"/><rect x="121.1" y="137" width="1.5" height="0.8" fill="#b2b2aa" opacity="0.76"/><rect x="19.6" y="132.7" width="4.2" height="0.8" fill="#b2b2aa" opacity="0.66"/><rect x="15.8" y="136" width="2" height="0.7" fill="#b2b2aa" opacity="0.59"/><rect x="108.6" y="132.3" width="1.9" height="0.7" fill="#b2b2aa" opacity="0.59"/><rect x="51.9" y="134" width="3.6" height="1.1" fill="#b2b2aa" opacity="0.43"/><rect x="94.2" y="132.6" width="4.3" height="0.5" fill="#b2b2aa" opacity="0.62"/><rect x="16.4" y="135.5" width="2.8" height="0.6" fill="#b2b2aa" opacity="0.46"/><rect x="68.1" y="132.5" width="1.7" height="0.8" fill="#b2b2aa" opacity="0.46"/><rect x="9.6" y="134" width="2.4" height="1.2" fill="#b2b2aa" opacity="0.68"/><rect x="10.2" y="135.7" width="1.9" height="0.9" fill="#b2b2aa" opacity="0.84"/><rect x="136.7" y="131.8" width="4.4" height="1.2" fill="#b2b2aa" opacity="0.66"/><rect x="34" y="136.4" width="1.7" height="0.6" fill="#b2b2aa" opacity="0.44"/><rect x="37.7" y="133.9" width="4.7" height="1" fill="#b2b2aa" opacity="0.44"/><rect x="64.3" y="132.4" width="2.3" height="1" fill="#b2b2aa" opacity="0.58"/><rect x="17" y="134.1" width="4.9" height="0.6" fill="#b2b2aa" opacity="0.41"/><rect x="92.7" y="131.3" width="3.1" height="0.8" fill="#b2b2aa" opacity="0.77"/><rect x="76.3" y="134.2" width="1.9" height="0.9" fill="#b2b2aa" opacity="0.73"/><rect x="20.6" y="136.9" width="4.2" height="1" fill="#b2b2aa" opacity="0.83"/><rect x="52.2" y="132.2" width="4.6" height="0.7" fill="#b2b2aa" opacity="0.7"/><rect x="128" y="132.5" width="1.3" height="0.5" fill="#b2b2aa" opacity="0.62"/><rect x="19.9" y="135.7" width="1.8" height="0.9" fill="#b2b2aa" opacity="0.87"/><rect x="57.1" y="131.2" width="3.7" height="1.2" fill="#b2b2aa" opacity="0.52"/><rect x="67.7" y="136.9" width="3" height="0.8" fill="#b2b2aa" opacity="0.9"/><rect x="88.2" y="136.2" width="1.9" height="0.6" fill="#b2b2aa" opacity="0.9"/><rect x="64.8" y="137" width="1.9" height="0.7" fill="#b2b2aa" opacity="0.6"/><rect x="48.7" y="131.3" width="3.7" height="0.8" fill="#b2b2aa" opacity="0.48"/><rect x="117.6" y="134.8" width="1" height="0.7" fill="#b2b2aa" opacity="0.63"/><rect x="79.8" y="132" width="3.8" height="0.7" fill="#b2b2aa" opacity="0.46"/><rect x="136.4" y="132" width="1.6" height="0.9" fill="#b2b2aa" opacity="0.69"/><rect x="125.9" y="132.6" width="1.2" height="0.6" fill="#b2b2aa" opacity="0.69"/><rect x="64.2" y="136.5" width="2.6" height="1" fill="#b2b2aa" opacity="0.83"/><rect x="135.9" y="136.9" width="2.1" height="0.8" fill="#b2b2aa" opacity="0.43"/><rect x="129.9" y="131.2" width="1.4" height="0.7" fill="#b2b2aa" opacity="0.54"/><rect x="137.3" y="133.7" width="4.5" height="0.9" fill="#b2b2aa" opacity="0.82"/><rect x="114.6" y="134.3" width="3.6" height="0.6" fill="#b2b2aa" opacity="0.52"/><rect x="93.5" y="136" width="3.3" height="1.1" fill="#b2b2aa" opacity="0.88"/><rect x="27.4" y="136.6" width="1.3" height="0.9" fill="#b2b2aa" opacity="0.49"/><rect x="98.3" y="132.6" width="2" height="0.8" fill="#b2b2aa" opacity="0.66"/><rect x="96.2" y="135.6" width="1.3" height="0.9" fill="#b2b2aa" opacity="0.64"/><rect x="95.4" y="131.2" width="4.2" height="0.8" fill="#b2b2aa" opacity="0.74"/><rect x="100.7" y="132.2" width="3.6" height="1.2" fill="#b2b2aa" opacity="0.79"/><rect x="33.1" y="137" width="2.7" height="0.6" fill="#b2b2aa" opacity="0.6"/><rect x="136.5" y="132.5" width="4.6" height="1" fill="#b2b2aa" opacity="0.58"/><rect x="94.2" y="131.9" width="4.1" height="0.7" fill="#b2b2aa" opacity="0.51"/><rect x="37.8" y="132" width="1.1" height="0.8" fill="#b2b2aa" opacity="0.61"/><rect x="11" y="136.9" width="3.3" height="0.9" fill="#b2b2aa" opacity="0.58"/><rect x="100" y="132.2" width="2.7" height="0.8" fill="#b2b2aa" opacity="0.41"/><rect x="96" y="133.4" width="1.6" height="1.2" fill="#b2b2aa" opacity="0.78"/><rect x="118.6" y="135" width="3.6" height="1" fill="#b2b2aa" opacity="0.88"/><rect x="27.9" y="133" width="4.1" height="0.7" fill="#b2b2aa" opacity="0.81"/><rect x="85.4" y="136.5" width="4.4" height="0.9" fill="#b2b2aa" opacity="0.5"/><rect x="2.1" y="135.5" width="3.1" height="0.7" fill="#b2b2aa" opacity="0.44"/><rect x="0.7" y="135.4" width="1.7" height="0.5" fill="#b2b2aa" opacity="0.51"/><rect x="37.6" y="137.1" width="3.8" height="0.5" fill="#b2b2aa" opacity="0.46"/><rect x="132.7" y="132" width="4.9" height="0.7" fill="#b2b2aa" opacity="0.66"/><rect x="45.5" y="134" width="2.7" height="0.7" fill="#b2b2aa" opacity="0.43"/><rect x="11.9" y="131.7" width="1.6" height="0.9" fill="#b2b2aa" opacity="0.75"/><rect x="37.3" y="135.6" width="4.2" height="0.7" fill="#b2b2aa" opacity="0.65"/><rect x="26.8" y="134.5" width="4.7" height="0.5" fill="#b2b2aa" opacity="0.48"/><rect x="98.4" y="135.5" width="2.5" height="0.7" fill="#b2b2aa" opacity="0.8"/><rect x="113.9" y="134.7" width="1.4" height="0.6" fill="#b2b2aa" opacity="0.75"/><rect x="114.2" y="132.5" width="4.2" height="0.6" fill="#b2b2aa" opacity="0.73"/><rect x="80.2" y="132.3" width="1.6" height="0.9" fill="#b2b2aa" opacity="0.45"/><rect x="90" y="132.7" width="2" height="0.8" fill="#b2b2aa" opacity="0.67"/><rect x="102.9" y="135.5" width="1.1" height="0.7" fill="#b2b2aa" opacity="0.55"/><rect x="90.9" y="134.9" width="3.8" height="1.1" fill="#b2b2aa" opacity="0.5"/><rect x="44.2" y="132.7" width="3.7" height="0.6" fill="#b2b2aa" opacity="0.51"/><rect x="109.5" y="135.5" width="4.3" height="1.2" fill="#b2b2aa" opacity="0.8"/><rect x="44" y="135.5" width="2.3" height="0.5" fill="#b2b2aa" opacity="0.7"/><rect x="12.7" y="134.3" width="1.2" height="0.6" fill="#b2b2aa" opacity="0.87"/><rect x="124.6" y="132.3" width="2.8" height="0.6" fill="#b2b2aa" opacity="0.65"/><rect x="74" y="135.5" width="2.5" height="0.9" fill="#b2b2aa" opacity="0.79"/><rect x="15.1" y="133.5" width="1.3" height="0.8" fill="#b2b2aa" opacity="0.53"/><rect x="94.9" y="133.1" width="1.9" height="0.8" fill="#b2b2aa" opacity="0.76"/><rect x="109.4" y="133.9" width="2.5" height="1.1" fill="#b2b2aa" opacity="0.87"/><rect x="87.9" y="133.9" width="1.4" height="0.9" fill="#b2b2aa" opacity="0.54"/><rect x="5.3" y="136.7" width="4.9" height="0.6" fill="#b2b2aa" opacity="0.63"/><rect x="87.9" y="131.5" width="2.2" height="1" fill="#b2b2aa" opacity="0.79"/><rect x="62.1" y="133.5" width="1.3" height="0.6" fill="#b2b2aa" opacity="0.88"/><rect x="7.3" y="135.8" width="2.2" height="0.6" fill="#b2b2aa" opacity="0.45"/><rect x="10" y="134.4" width="1.7" height="1.1" fill="#b2b2aa" opacity="0.48"/><rect x="24.7" y="133.7" width="4.1" height="0.7" fill="#b2b2aa" opacity="0.46"/><rect x="34.5" y="131.8" width="4.9" height="0.7" fill="#b2b2aa" opacity="0.77"/><rect x="126.6" y="134" width="4.6" height="1.2" fill="#b2b2aa" opacity="0.7"/><rect x="41" y="135.5" width="2.9" height="1" fill="#b2b2aa" opacity="0.46"/><rect x="27.5" y="131.8" width="4.8" height="1.1" fill="#b2b2aa" opacity="0.57"/><rect x="35.2" y="134" width="2" height="1.2" fill="#b2b2aa" opacity="0.47"/><rect x="0" y="128.5" width="142" height="0.6" fill="#b2b2aa" opacity="0.4"/><rect x="0" y="-0.5" width="142" height="1" fill="#7a7a74"/><rect x="0" y="2" width="142" height="1.5" fill="#7a7a74"/><rect x="0" y="19.6" width="142" height="1.5" fill="#7a7a74"/><rect x="0" y="26.7" width="142" height="1" fill="#a9a9a3"/><rect x="0" y="32.5" width="142" height="1.5" fill="#7a7a74"/><rect x="0" y="49" width="142" height="1.5" fill="#7a7a74"/><rect x="0" y="56.3" width="142" height="1" fill="#a9a9a3"/><rect x="0" y="62.6" width="142" height="1.5" fill="#7a7a74"/><rect x="0" y="79.7" width="142" height="1.5" fill="#7a7a74"/><rect x="0" y="86.4" width="142" height="1" fill="#a9a9a3"/><rect x="0" y="91.8" width="142" height="1.5" fill="#7a7a74"/><rect x="0" y="108.8" width="142" height="1.5" fill="#7a7a74"/><rect x="0" y="116.7" width="142" height="1" fill="#a9a9a3"/><rect x="0" y="122.5" width="142" height="1.5" fill="#7a7a74"/><rect x="0" y="139.9" width="142" height="1.5" fill="#7a7a74"/><rect x="38.4" y="2.7" width="1.4" height="17.7" fill="#6a6a64"/><rect x="58" y="20.4" width="1.4" height="6.8" fill="#9a9a94"/><rect x="13" y="49.7" width="1.4" height="7.1" fill="#9a9a94"/><rect x="73" y="49.7" width="1.4" height="7.1" fill="#9a9a94"/><rect x="108" y="49.7" width="1.4" height="7.1" fill="#9a9a94"/><rect x="57" y="63.4" width="1.4" height="17" fill="#6a6a64"/><rect x="27" y="80.4" width="1.4" height="6.5" fill="#9a9a94"/><rect x="121" y="92.6" width="1.4" height="17" fill="#6a6a64"/><rect x="13" y="109.6" width="1.4" height="7.6" fill="#9a9a94"/><rect x="58" y="109.6" width="1.4" height="7.6" fill="#9a9a94"/><rect x="38.4" y="123.3" width="1.4" height="17.4" fill="#6a6a64"/></svg></div>
<div class="a im" id="i13" style="left:362px;top:90px;width:141px;height:142px;background:#4a4446"><svg width="141" height="142" viewBox="0 0 141 142" shape-rendering="auto"><rect x="0" y="0" width="141" height="142" fill="#1b1b1d"/><rect x="1" y="-0.3" width="33.4" height="8.1" fill="#595458"/><rect x="7.1" y="1.9" width="17.9" height="3.7" fill="#6e5654" opacity="0.5"/><rect x="1" y="9" width="33.4" height="5.6" fill="#4e4a4d"/><rect x="1" y="15.8" width="33.4" height="8.7" fill="#58535a"/><rect x="7.7" y="18.2" width="13.1" height="3.9" fill="#6e5654" opacity="0.5"/><rect x="1" y="25.7" width="33.4" height="5.7" fill="#595458"/><rect x="1" y="32.6" width="33.4" height="8.1" fill="#595458"/><rect x="7.9" y="34.8" width="13.2" height="3.7" fill="#656066" opacity="0.5"/><rect x="1" y="41.9" width="33.4" height="5.1" fill="#595458"/><rect x="1" y="48.2" width="33.4" height="8.4" fill="#5f5052"/><rect x="3.7" y="50.5" width="12.7" height="3.8" fill="#5e4848" opacity="0.5"/><rect x="1" y="57.8" width="33.4" height="5.2" fill="#4e4a4d"/><rect x="1" y="64.2" width="33.4" height="9" fill="#58535a"/><rect x="8.9" y="66.7" width="18.7" height="4.1" fill="#6e5654" opacity="0.5"/><rect x="1" y="74.4" width="33.4" height="5.6" fill="#5f5052"/><rect x="1" y="81.3" width="33.4" height="8.6" fill="#595458"/><rect x="5.3" y="83.6" width="20.1" height="3.9" fill="#6e5654" opacity="0.5"/><rect x="1" y="91" width="33.4" height="5" fill="#595458"/><rect x="1" y="97.3" width="33.4" height="8.8" fill="#58535a"/><rect x="5.1" y="99.7" width="20.1" height="4" fill="#656066" opacity="0.5"/><rect x="1" y="107.3" width="33.4" height="5.7" fill="#56575d"/><rect x="1" y="114.1" width="33.4" height="9.1" fill="#5b565c"/><rect x="6.9" y="116.6" width="10.6" height="4.1" fill="#5e4848" opacity="0.5"/><rect x="1" y="124.4" width="33.4" height="5.8" fill="#595458"/><rect x="1" y="131.4" width="33.4" height="8.5" fill="#655453"/><rect x="7.7" y="133.7" width="20.4" height="3.9" fill="#6e5654" opacity="0.5"/><rect x="1" y="141.1" width="33.4" height="5.5" fill="#595458"/><rect x="36" y="-3.9" width="34.4" height="8.3" fill="#58535a"/><rect x="43.4" y="-1.7" width="10.3" height="3.8" fill="#656066" opacity="0.5"/><rect x="36" y="5.6" width="34.4" height="4.9" fill="#644f50"/><rect x="36" y="11.7" width="34.4" height="8.5" fill="#58535a"/><rect x="39.2" y="14" width="15.5" height="3.9" fill="#656066" opacity="0.5"/><rect x="36" y="21.4" width="34.4" height="5.1" fill="#655453"/><rect x="36" y="27.7" width="34.4" height="9.2" fill="#5f5052"/><rect x="41.8" y="30.2" width="20.6" height="4.2" fill="#5e4848" opacity="0.5"/><rect x="36" y="38.1" width="34.4" height="5.3" fill="#595458"/><rect x="36" y="44.6" width="34.4" height="8.9" fill="#5f5052"/><rect x="42.4" y="47" width="14.2" height="4" fill="#6e5654" opacity="0.5"/><rect x="36" y="54.7" width="34.4" height="5.4" fill="#5b565c"/><rect x="36" y="61.3" width="34.4" height="7.9" fill="#655453"/><rect x="40.5" y="63.4" width="20.6" height="3.6" fill="#5e4848" opacity="0.5"/><rect x="36" y="70.4" width="34.4" height="5" fill="#4e4a4d"/><rect x="36" y="76.6" width="34.4" height="8.3" fill="#595458"/><rect x="43.6" y="78.9" width="17.9" height="3.8" fill="#6e5654" opacity="0.5"/><rect x="36" y="86.2" width="34.4" height="5.5" fill="#58535a"/><rect x="36" y="92.8" width="34.4" height="8.5" fill="#4f5057"/><rect x="38.1" y="95.2" width="11.6" height="3.9" fill="#6e5654" opacity="0.5"/><rect x="36" y="102.5" width="34.4" height="5" fill="#5f5052"/><rect x="36" y="108.7" width="34.4" height="9" fill="#595458"/><rect x="38.6" y="111.2" width="19.5" height="4.1" fill="#5e4848" opacity="0.5"/><rect x="36" y="119" width="34.4" height="5.6" fill="#4e4a4d"/><rect x="36" y="125.8" width="34.4" height="8.4" fill="#4f5057"/><rect x="38.9" y="128" width="17.6" height="3.8" fill="#6e5654" opacity="0.5"/><rect x="36" y="135.3" width="34.4" height="5.7" fill="#4e4a4d"/><rect x="36" y="142.2" width="34.4" height="8.3" fill="#595458"/><rect x="41.1" y="144.5" width="21.7" height="3.8" fill="#656066" opacity="0.5"/><rect x="72" y="-2.1" width="31.7" height="5.5" fill="#56575d"/><rect x="72" y="4.5" width="31.7" height="8.7" fill="#4f5057"/><rect x="80" y="6.9" width="16.7" height="4" fill="#6e5654" opacity="0.5"/><rect x="72" y="14.5" width="31.7" height="5" fill="#5b565c"/><rect x="72" y="20.6" width="31.7" height="9.1" fill="#644f50"/><rect x="79.2" y="23.1" width="14.3" height="4.1" fill="#6e5654" opacity="0.5"/><rect x="72" y="31" width="31.7" height="5" fill="#58535a"/><rect x="72" y="37.2" width="31.7" height="9.2" fill="#4e4a4d"/><rect x="77.1" y="39.7" width="21.2" height="4.1" fill="#5e4848" opacity="0.5"/><rect x="72" y="47.5" width="31.7" height="5" fill="#56575d"/><rect x="72" y="53.7" width="31.7" height="8.7" fill="#58535a"/><rect x="76.5" y="56.1" width="17.2" height="4" fill="#656066" opacity="0.5"/><rect x="72" y="63.7" width="31.7" height="5.4" fill="#4e4a4d"/><rect x="72" y="70.3" width="31.7" height="8.4" fill="#5b565c"/><rect x="77.8" y="72.6" width="10.6" height="3.9" fill="#6e5654" opacity="0.5"/><rect x="72" y="79.9" width="31.7" height="5.6" fill="#56575d"/><rect x="72" y="86.7" width="31.7" height="8.9" fill="#4e4a4d"/><rect x="77.2" y="89.2" width="12.8" height="4" fill="#6e5654" opacity="0.5"/><rect x="72" y="96.8" width="31.7" height="5" fill="#56575d"/><rect x="72" y="103.1" width="31.7" height="9.2" fill="#4e4a4d"/><rect x="79.9" y="105.6" width="18.7" height="4.1" fill="#6e5654" opacity="0.5"/><rect x="72" y="113.4" width="31.7" height="5.5" fill="#4e4a4d"/><rect x="72" y="120.2" width="31.7" height="8.2" fill="#4f5057"/><rect x="79.6" y="122.4" width="10.6" height="3.8" fill="#6e5654" opacity="0.5"/><rect x="72" y="129.6" width="31.7" height="5.2" fill="#644f50"/><rect x="72" y="136" width="31.7" height="9.1" fill="#5b565c"/><rect x="78.1" y="138.5" width="11.7" height="4.1" fill="#656066" opacity="0.5"/><rect x="105.3" y="-4.4" width="35.1" height="8.6" fill="#4f5057"/><rect x="111.9" y="-2" width="12.9" height="3.9" fill="#6e5654" opacity="0.5"/><rect x="105.3" y="5.4" width="35.1" height="5" fill="#4f5057"/><rect x="105.3" y="11.7" width="35.1" height="8.3" fill="#4f5057"/><rect x="109.1" y="13.9" width="11.9" height="3.8" fill="#6e5654" opacity="0.5"/><rect x="105.3" y="21.2" width="35.1" height="5.2" fill="#56575d"/><rect x="105.3" y="27.7" width="35.1" height="8.1" fill="#595458"/><rect x="108" y="29.8" width="13.6" height="3.7" fill="#656066" opacity="0.5"/><rect x="105.3" y="36.9" width="35.1" height="5.3" fill="#655453"/><rect x="105.3" y="43.4" width="35.1" height="9" fill="#655453"/><rect x="110.1" y="45.9" width="13.3" height="4.1" fill="#5e4848" opacity="0.5"/><rect x="105.3" y="53.6" width="35.1" height="5" fill="#5b565c"/><rect x="105.3" y="59.8" width="35.1" height="8" fill="#56575d"/><rect x="108.7" y="61.9" width="14.2" height="3.7" fill="#656066" opacity="0.5"/><rect x="105.3" y="69" width="35.1" height="5.8" fill="#4f5057"/><rect x="105.3" y="76" width="35.1" height="8" fill="#4f5057"/><rect x="109.3" y="78.1" width="18.5" height="3.7" fill="#656066" opacity="0.5"/><rect x="105.3" y="85.1" width="35.1" height="5.4" fill="#655453"/><rect x="105.3" y="91.8" width="35.1" height="9.1" fill="#5b565c"/><rect x="107.3" y="94.2" width="20.2" height="4.1" fill="#5e4848" opacity="0.5"/><rect x="105.3" y="102" width="35.1" height="5.3" fill="#5b565c"/><rect x="105.3" y="108.5" width="35.1" height="8.7" fill="#4f5057"/><rect x="113" y="110.9" width="17.4" height="4" fill="#6e5654" opacity="0.5"/><rect x="105.3" y="118.5" width="35.1" height="5.4" fill="#58535a"/><rect x="105.3" y="125" width="35.1" height="9.2" fill="#56575d"/><rect x="111.1" y="127.6" width="18.1" height="4.2" fill="#656066" opacity="0.5"/><rect x="105.3" y="135.4" width="35.1" height="5.6" fill="#4e4a4d"/><rect x="105.3" y="142.2" width="35.1" height="8.3" fill="#56575d"/><rect x="110.6" y="144.5" width="14.8" height="3.8" fill="#6e5654" opacity="0.5"/></svg></div>
<div class="a im" id="i14" style="left:517px;top:90px;width:142px;height:142px;background:#6b5446"><svg width="142" height="142" viewBox="0 0 142 142" shape-rendering="auto"><rect x="0" y="0" width="142" height="142" fill="#62503f"/><rect x="0" y="0" width="1.1" height="142" fill="#6c5848" opacity="0.66"/><rect x="2.3" y="0" width="0.6" height="142" fill="#5c4a3c" opacity="0.62"/><rect x="3.5" y="0" width="1" height="142" fill="#544335" opacity="0.66"/><rect x="5.1" y="0" width="1.6" height="142" fill="#5c4a3c" opacity="0.56"/><rect x="7.3" y="0" width="1.2" height="142" fill="#70604f" opacity="0.54"/><rect x="9.4" y="0" width="2.2" height="142" fill="#574537" opacity="0.45"/><rect x="12.1" y="0" width="1.2" height="142" fill="#665242" opacity="0.52"/><rect x="13.8" y="0" width="1.2" height="142" fill="#70604f" opacity="0.36"/><rect x="16" y="0" width="0.5" height="142" fill="#6c5848" opacity="0.38"/><rect x="17.6" y="0" width="0.8" height="142" fill="#5c4a3c" opacity="0.39"/><rect x="18.5" y="0" width="1" height="142" fill="#665242" opacity="0.69"/><rect x="20.9" y="0" width="0.7" height="142" fill="#6c5848" opacity="0.52"/><rect x="23" y="0" width="0.7" height="142" fill="#6c5848" opacity="0.47"/><rect x="24" y="0" width="2" height="142" fill="#665242" opacity="0.45"/><rect x="26.1" y="0" width="2.2" height="142" fill="#6c5848" opacity="0.54"/><rect x="29.8" y="0" width="0.6" height="142" fill="#574537" opacity="0.36"/><rect x="30.4" y="0" width="1.2" height="142" fill="#665242" opacity="0.55"/><rect x="31.8" y="0" width="0.8" height="142" fill="#6c5848" opacity="0.38"/><rect x="33.1" y="0" width="2.4" height="142" fill="#6c5848" opacity="0.44"/><rect x="37" y="0" width="1.4" height="142" fill="#70604f" opacity="0.46"/><rect x="39" y="0" width="1.5" height="142" fill="#574537" opacity="0.7"/><rect x="41.5" y="0" width="0.9" height="142" fill="#6c5848" opacity="0.66"/><rect x="43.6" y="0" width="1.8" height="142" fill="#665242" opacity="0.32"/><rect x="46.1" y="0" width="1.9" height="142" fill="#574537" opacity="0.61"/><rect x="48.8" y="0" width="2.3" height="142" fill="#574537" opacity="0.48"/><rect x="52.4" y="0" width="1.7" height="142" fill="#5c4a3c" opacity="0.56"/><rect x="54.9" y="0" width="0.8" height="142" fill="#574537" opacity="0.67"/><rect x="56.5" y="0" width="0.8" height="142" fill="#6c5848" opacity="0.58"/><rect x="57.5" y="0" width="1.8" height="142" fill="#544335" opacity="0.62"/><rect x="60.5" y="0" width="1.5" height="142" fill="#574537" opacity="0.64"/><rect x="62.6" y="0" width="1.9" height="142" fill="#6c5848" opacity="0.53"/><rect x="65.6" y="0" width="1.3" height="142" fill="#70604f" opacity="0.68"/><rect x="68.3" y="0" width="1.7" height="142" fill="#5c4a3c" opacity="0.66"/><rect x="70.3" y="0" width="2.5" height="142" fill="#6c5848" opacity="0.62"/><rect x="74" y="0" width="2.1" height="142" fill="#544335" opacity="0.58"/><rect x="76.6" y="0" width="2" height="142" fill="#5c4a3c" opacity="0.62"/><rect x="79.1" y="0" width="1.6" height="142" fill="#544335" opacity="0.5"/><rect x="81.2" y="0" width="2.3" height="142" fill="#574537" opacity="0.5"/><rect x="84.8" y="0" width="0.6" height="142" fill="#70604f" opacity="0.6"/><rect x="86.2" y="0" width="2.3" height="142" fill="#544335" opacity="0.5"/><rect x="89.6" y="0" width="0.5" height="142" fill="#544335" opacity="0.61"/><rect x="90.2" y="0" width="1.1" height="142" fill="#574537" opacity="0.54"/><rect x="92" y="0" width="2.3" height="142" fill="#5c4a3c" opacity="0.33"/><rect x="94.9" y="0" width="1.2" height="142" fill="#574537" opacity="0.5"/><rect x="97.2" y="0" width="0.9" height="142" fill="#665242" opacity="0.4"/><rect x="99.3" y="0" width="0.9" height="142" fill="#544335" opacity="0.68"/><rect x="101.7" y="0" width="1.4" height="142" fill="#544335" opacity="0.58"/><rect x="104" y="0" width="1.1" height="142" fill="#665242" opacity="0.65"/><rect x="105.7" y="0" width="2.4" height="142" fill="#70604f" opacity="0.68"/><rect x="108.2" y="0" width="2.2" height="142" fill="#665242" opacity="0.42"/><rect x="111.2" y="0" width="2.2" height="142" fill="#665242" opacity="0.6"/><rect x="113.7" y="0" width="1.8" height="142" fill="#70604f" opacity="0.64"/><rect x="115.8" y="0" width="1.5" height="142" fill="#70604f" opacity="0.49"/><rect x="117.5" y="0" width="2.2" height="142" fill="#574537" opacity="0.39"/><rect x="120.6" y="0" width="2.3" height="142" fill="#574537" opacity="0.59"/><rect x="123.4" y="0" width="2.4" height="142" fill="#6c5848" opacity="0.68"/><rect x="126.7" y="0" width="2" height="142" fill="#665242" opacity="0.37"/><rect x="129.5" y="0" width="1.2" height="142" fill="#6c5848" opacity="0.66"/><rect x="131" y="0" width="2.2" height="142" fill="#6c5848" opacity="0.4"/><rect x="134.5" y="0" width="0.9" height="142" fill="#544335" opacity="0.42"/><rect x="137" y="0" width="0.6" height="142" fill="#70604f" opacity="0.51"/><rect x="138.9" y="0" width="1.4" height="142" fill="#574537" opacity="0.47"/><rect x="141" y="0" width="1.1" height="142" fill="#574537" opacity="0.6"/><rect x="65.8" y="116.9" width="0.8" height="48.5" fill="#76604f" opacity="0.5"/><rect x="22.8" y="97.1" width="0.8" height="32.2" fill="#76604f" opacity="0.5"/><rect x="126.3" y="129.9" width="0.8" height="46" fill="#76604f" opacity="0.5"/><rect x="70" y="38" width="0.8" height="24.7" fill="#76604f" opacity="0.5"/><rect x="108.2" y="83.7" width="0.8" height="16.5" fill="#4c3d32" opacity="0.5"/><rect x="52.2" y="136.3" width="0.8" height="49.3" fill="#4c3d32" opacity="0.5"/><rect x="70.8" y="40.1" width="0.8" height="23.2" fill="#4c3d32" opacity="0.5"/><rect x="44.6" y="4.1" width="0.8" height="18.2" fill="#4c3d32" opacity="0.5"/><rect x="135.9" y="64.6" width="0.8" height="24.8" fill="#76604f" opacity="0.5"/><rect x="68.3" y="132" width="0.8" height="17.9" fill="#4c3d32" opacity="0.5"/><rect x="51.2" y="85.9" width="0.8" height="22" fill="#4c3d32" opacity="0.5"/><rect x="100.7" y="83.3" width="0.8" height="26.8" fill="#4c3d32" opacity="0.5"/><rect x="78.5" y="29.2" width="0.8" height="30.3" fill="#4c3d32" opacity="0.5"/><rect x="107" y="33.7" width="0.8" height="14.4" fill="#76604f" opacity="0.5"/><rect x="131.6" y="140.9" width="0.8" height="37.1" fill="#4c3d32" opacity="0.5"/><rect x="37.9" y="138.4" width="0.8" height="13.5" fill="#76604f" opacity="0.5"/><rect x="44.4" y="80.7" width="0.8" height="10.4" fill="#76604f" opacity="0.5"/><rect x="49.7" y="100.8" width="0.8" height="31.3" fill="#4c3d32" opacity="0.5"/><rect x="1.9" y="28.8" width="0.8" height="17.2" fill="#4c3d32" opacity="0.5"/><rect x="14.4" y="132.4" width="0.8" height="20.7" fill="#76604f" opacity="0.5"/><rect x="95.8" y="54.5" width="0.8" height="49.7" fill="#4c3d32" opacity="0.5"/><rect x="9.6" y="117.9" width="0.8" height="49.2" fill="#4c3d32" opacity="0.5"/><rect x="117.8" y="126.7" width="0.8" height="30.6" fill="#76604f" opacity="0.5"/><rect x="51.7" y="94" width="0.8" height="48.1" fill="#4c3d32" opacity="0.5"/><rect x="141.1" y="88.5" width="0.8" height="36.1" fill="#4c3d32" opacity="0.5"/><rect x="52.8" y="51.9" width="0.8" height="15.3" fill="#76604f" opacity="0.5"/><rect x="36.2" y="20.1" width="0.8" height="16.3" fill="#4c3d32" opacity="0.5"/><rect x="15.7" y="113.2" width="0.8" height="15" fill="#76604f" opacity="0.5"/><rect x="71.4" y="81.6" width="0.8" height="32.4" fill="#76604f" opacity="0.5"/><rect x="65.8" y="106.5" width="0.8" height="39.1" fill="#4c3d32" opacity="0.5"/><rect x="60" y="33.6" width="0.8" height="40.3" fill="#4c3d32" opacity="0.5"/><rect x="127.1" y="50.8" width="0.8" height="40.9" fill="#76604f" opacity="0.5"/><rect x="83.6" y="61" width="0.8" height="29.1" fill="#4c3d32" opacity="0.5"/><rect x="31.6" y="95.1" width="0.8" height="43.4" fill="#76604f" opacity="0.5"/><rect x="140.3" y="33.9" width="0.8" height="11.5" fill="#4c3d32" opacity="0.5"/><rect x="28.1" y="36.9" width="0.8" height="41" fill="#4c3d32" opacity="0.5"/><rect x="48.1" y="11.2" width="0.8" height="40.2" fill="#4c3d32" opacity="0.5"/><rect x="72.7" y="133" width="0.8" height="19.8" fill="#4c3d32" opacity="0.5"/><rect x="24.4" y="61.3" width="0.8" height="47.3" fill="#4c3d32" opacity="0.5"/><rect x="100.3" y="60.9" width="0.8" height="16.6" fill="#4c3d32" opacity="0.5"/><rect x="70.7" y="140.6" width="0.8" height="39.4" fill="#4c3d32" opacity="0.5"/><rect x="116.3" y="112.2" width="0.8" height="21.4" fill="#4c3d32" opacity="0.5"/><rect x="47.6" y="14.5" width="0.8" height="39.7" fill="#4c3d32" opacity="0.5"/><rect x="72.5" y="23.9" width="0.8" height="36.8" fill="#76604f" opacity="0.5"/><rect x="36.8" y="64.4" width="0.8" height="19.6" fill="#76604f" opacity="0.5"/><rect x="0.5" y="31.6" width="0.8" height="25.9" fill="#4c3d32" opacity="0.5"/><rect x="57.9" y="76.1" width="0.8" height="21.5" fill="#76604f" opacity="0.5"/><rect x="47.6" y="37.8" width="0.8" height="36.8" fill="#4c3d32" opacity="0.5"/><rect x="5.4" y="59.2" width="0.8" height="43.8" fill="#4c3d32" opacity="0.5"/><rect x="22.1" y="10" width="0.8" height="31.7" fill="#76604f" opacity="0.5"/><rect x="130.6" y="14.2" width="0.8" height="30.1" fill="#76604f" opacity="0.5"/><rect x="35.9" y="14.1" width="0.8" height="47" fill="#76604f" opacity="0.5"/><rect x="41.5" y="132.6" width="0.8" height="42.6" fill="#76604f" opacity="0.5"/><rect x="18" y="9.5" width="0.8" height="27.5" fill="#4c3d32" opacity="0.5"/><rect x="99" y="82.1" width="0.8" height="49.1" fill="#4c3d32" opacity="0.5"/><rect x="112.1" y="112.2" width="0.8" height="13" fill="#76604f" opacity="0.5"/><rect x="34.1" y="31.4" width="0.8" height="47.9" fill="#76604f" opacity="0.5"/><rect x="49.4" y="98.8" width="0.8" height="24.7" fill="#76604f" opacity="0.5"/><rect x="23" y="62.2" width="0.8" height="17.2" fill="#4c3d32" opacity="0.5"/><rect x="13" y="103.1" width="0.8" height="44.6" fill="#4c3d32" opacity="0.5"/></svg></div>
<div class="a im" id="i15" style="left:674px;top:90px;width:142px;height:142px;background:#d8d8d4"><svg width="142" height="142" viewBox="0 0 142 142" shape-rendering="auto"><rect x="0" y="0" width="66" height="142" fill="#d6d6d0"/><rect x="0" y="0" width="66" height="6" fill="#a8a8a2"/><rect x="0" y="6" width="66" height="2" fill="#c4c4be"/><rect x="0" y="12" width="66" height="1.6" fill="#9c9c96"/><rect x="0" y="13.6" width="66" height="2.5" fill="#e4e4de"/><rect x="12" y="-3" width="1" height="15" fill="#b8b8b2"/><rect x="0" y="29" width="66" height="1.6" fill="#9c9c96"/><rect x="0" y="30.6" width="66" height="2.5" fill="#e4e4de"/><rect x="35" y="14" width="1" height="15" fill="#b8b8b2"/><rect x="0" y="46" width="66" height="1.6" fill="#9c9c96"/><rect x="0" y="47.6" width="66" height="2.5" fill="#e4e4de"/><rect x="18" y="31" width="1" height="15" fill="#b8b8b2"/><rect x="0" y="63" width="66" height="1.6" fill="#9c9c96"/><rect x="0" y="64.6" width="66" height="2.5" fill="#e4e4de"/><rect x="41" y="48" width="1" height="15" fill="#b8b8b2"/><rect x="0" y="80" width="66" height="1.6" fill="#9c9c96"/><rect x="0" y="81.6" width="66" height="2.5" fill="#e4e4de"/><rect x="24" y="65" width="1" height="15" fill="#b8b8b2"/><rect x="0" y="97" width="66" height="1.6" fill="#9c9c96"/><rect x="0" y="98.6" width="66" height="2.5" fill="#e4e4de"/><rect x="47" y="82" width="1" height="15" fill="#b8b8b2"/><rect x="0" y="114" width="66" height="1.6" fill="#9c9c96"/><rect x="0" y="115.6" width="66" height="2.5" fill="#e4e4de"/><rect x="30" y="99" width="1" height="15" fill="#b8b8b2"/><rect x="0" y="131" width="66" height="1.6" fill="#9c9c96"/><rect x="0" y="132.6" width="66" height="2.5" fill="#e4e4de"/><rect x="13" y="116" width="1" height="15" fill="#b8b8b2"/><rect x="43.5" y="42.9" width="1.4" height="0.8" fill="#e8e8e2" opacity="0.7"/><rect x="6.1" y="37.6" width="1.5" height="0.8" fill="#e8e8e2" opacity="0.7"/><rect x="5.6" y="49" width="2.8" height="0.8" fill="#e8e8e2" opacity="0.7"/><rect x="64" y="94.3" width="3.8" height="0.8" fill="#c2c2bc" opacity="0.7"/><rect x="20.5" y="35.4" width="3.2" height="0.8" fill="#c2c2bc" opacity="0.7"/><rect x="24.7" y="76.4" width="2.8" height="0.8" fill="#c2c2bc" opacity="0.7"/><rect x="40.9" y="96.4" width="1.4" height="0.8" fill="#c2c2bc" opacity="0.7"/><rect x="27.6" y="97" width="1.6" height="0.8" fill="#e8e8e2" opacity="0.7"/><rect x="18.2" y="111.2" width="3.1" height="0.8" fill="#e8e8e2" opacity="0.7"/><rect x="34.1" y="41.4" width="3.8" height="0.8" fill="#e8e8e2" opacity="0.7"/><rect x="35.9" y="47.3" width="3.5" height="0.8" fill="#c2c2bc" opacity="0.7"/><rect x="54" y="72.7" width="3.2" height="0.8" fill="#c2c2bc" opacity="0.7"/><rect x="48.1" y="123.5" width="3.1" height="0.8" fill="#e8e8e2" opacity="0.7"/><rect x="23.7" y="109.1" width="3.2" height="0.8" fill="#c2c2bc" opacity="0.7"/><rect x="54.5" y="139.8" width="2.3" height="0.8" fill="#e8e8e2" opacity="0.7"/><rect x="41.9" y="100.9" width="1.8" height="0.8" fill="#c2c2bc" opacity="0.7"/><rect x="22.6" y="62.9" width="2.3" height="0.8" fill="#e8e8e2" opacity="0.7"/><rect x="53.1" y="38.7" width="2" height="0.8" fill="#c2c2bc" opacity="0.7"/><rect x="47.5" y="106.8" width="1.6" height="0.8" fill="#c2c2bc" opacity="0.7"/><rect x="24.4" y="44.2" width="2.5" height="0.8" fill="#c2c2bc" opacity="0.7"/><rect x="59.1" y="121.7" width="3.6" height="0.8" fill="#e8e8e2" opacity="0.7"/><rect x="19" y="28.8" width="1.5" height="0.8" fill="#c2c2bc" opacity="0.7"/><rect x="47" y="55.2" width="1.2" height="0.8" fill="#c2c2bc" opacity="0.7"/><rect x="21.9" y="122.1" width="3.7" height="0.8" fill="#e8e8e2" opacity="0.7"/><rect x="28" y="28.4" width="3.4" height="0.8" fill="#c2c2bc" opacity="0.7"/><rect x="7.4" y="44.4" width="2.5" height="0.8" fill="#e8e8e2" opacity="0.7"/><rect x="65.1" y="60.5" width="1.6" height="0.8" fill="#c2c2bc" opacity="0.7"/><rect x="48.6" y="23.3" width="2" height="0.8" fill="#c2c2bc" opacity="0.7"/><rect x="44.9" y="91.7" width="1.6" height="0.8" fill="#c2c2bc" opacity="0.7"/><rect x="38.2" y="84.7" width="1.7" height="0.8" fill="#c2c2bc" opacity="0.7"/><rect x="13.2" y="122.6" width="3.7" height="0.8" fill="#c2c2bc" opacity="0.7"/><rect x="31.1" y="111.5" width="3.6" height="0.8" fill="#c2c2bc" opacity="0.7"/><rect x="2.4" y="51.6" width="2.9" height="0.8" fill="#c2c2bc" opacity="0.7"/><rect x="33.7" y="24.4" width="1.6" height="0.8" fill="#e8e8e2" opacity="0.7"/><rect x="65.5" y="130.6" width="1" height="0.8" fill="#c2c2bc" opacity="0.7"/><rect x="7.7" y="140.2" width="1.7" height="0.8" fill="#e8e8e2" opacity="0.7"/><rect x="16.1" y="86.7" width="2.1" height="0.8" fill="#c2c2bc" opacity="0.7"/><rect x="34.3" y="81.7" width="1.9" height="0.8" fill="#e8e8e2" opacity="0.7"/><rect x="51.2" y="72.2" width="4" height="0.8" fill="#c2c2bc" opacity="0.7"/><rect x="43.8" y="69.9" width="2.8" height="0.8" fill="#c2c2bc" opacity="0.7"/><rect x="51.3" y="120.8" width="2.6" height="0.8" fill="#e8e8e2" opacity="0.7"/><rect x="10.5" y="136.1" width="3.9" height="0.8" fill="#e8e8e2" opacity="0.7"/><rect x="62" y="125.6" width="1.9" height="0.8" fill="#c2c2bc" opacity="0.7"/><rect x="45.7" y="17" width="3.7" height="0.8" fill="#c2c2bc" opacity="0.7"/><rect x="24.3" y="66" width="2.5" height="0.8" fill="#e8e8e2" opacity="0.7"/><rect x="60.7" y="54.6" width="2.1" height="0.8" fill="#c2c2bc" opacity="0.7"/><rect x="6.6" y="78.7" width="1.3" height="0.8" fill="#e8e8e2" opacity="0.7"/><rect x="56.8" y="36.1" width="3.6" height="0.8" fill="#e8e8e2" opacity="0.7"/><rect x="56" y="88.7" width="2.7" height="0.8" fill="#e8e8e2" opacity="0.7"/><rect x="18.7" y="19.3" width="3.9" height="0.8" fill="#e8e8e2" opacity="0.7"/><rect x="55.7" y="57" width="4" height="0.8" fill="#e8e8e2" opacity="0.7"/><rect x="9.1" y="98.3" width="1.3" height="0.8" fill="#c2c2bc" opacity="0.7"/><rect x="27.5" y="136.2" width="2.1" height="0.8" fill="#e8e8e2" opacity="0.7"/><rect x="0.2" y="141.8" width="1.6" height="0.8" fill="#e8e8e2" opacity="0.7"/><rect x="23.8" y="42.6" width="1.5" height="0.8" fill="#e8e8e2" opacity="0.7"/><rect x="10.9" y="130.9" width="3.4" height="0.8" fill="#c2c2bc" opacity="0.7"/><rect x="1.9" y="37.4" width="3.9" height="0.8" fill="#e8e8e2" opacity="0.7"/><rect x="44.6" y="74.6" width="2.4" height="0.8" fill="#c2c2bc" opacity="0.7"/><rect x="35.7" y="17" width="1.5" height="0.8" fill="#c2c2bc" opacity="0.7"/><rect x="17.1" y="94.4" width="1.4" height="0.8" fill="#c2c2bc" opacity="0.7"/><rect x="43.5" y="124.5" width="1.9" height="0.8" fill="#c2c2bc" opacity="0.7"/><rect x="47.3" y="106.2" width="1.3" height="0.8" fill="#e8e8e2" opacity="0.7"/><rect x="20.4" y="98.9" width="2.6" height="0.8" fill="#c2c2bc" opacity="0.7"/><rect x="44.3" y="107.6" width="2" height="0.8" fill="#c2c2bc" opacity="0.7"/><rect x="49.7" y="56.8" width="2.3" height="0.8" fill="#c2c2bc" opacity="0.7"/><rect x="54.3" y="95.5" width="1.3" height="0.8" fill="#c2c2bc" opacity="0.7"/><rect x="39.1" y="100.3" width="2.5" height="0.8" fill="#c2c2bc" opacity="0.7"/><rect x="17.7" y="121.3" width="1.5" height="0.8" fill="#c2c2bc" opacity="0.7"/><rect x="1" y="127.3" width="2.3" height="0.8" fill="#e8e8e2" opacity="0.7"/><rect x="35.2" y="123.6" width="1.6" height="0.8" fill="#e8e8e2" opacity="0.7"/><rect x="39.8" y="25.6" width="2.1" height="0.8" fill="#c2c2bc" opacity="0.7"/><rect x="1.5" y="104.4" width="1.2" height="0.8" fill="#e8e8e2" opacity="0.7"/><rect x="44.3" y="48.3" width="3.2" height="0.8" fill="#c2c2bc" opacity="0.7"/><rect x="57.4" y="140.6" width="2.3" height="0.8" fill="#e8e8e2" opacity="0.7"/><rect x="36.5" y="8.7" width="1.2" height="0.8" fill="#e8e8e2" opacity="0.7"/><rect x="15" y="20.3" width="3.8" height="0.8" fill="#e8e8e2" opacity="0.7"/><rect x="40.4" y="123.5" width="1.4" height="0.8" fill="#e8e8e2" opacity="0.7"/><rect x="24.9" y="116.1" width="3.5" height="0.8" fill="#c2c2bc" opacity="0.7"/><rect x="18.6" y="107.8" width="3.5" height="0.8" fill="#c2c2bc" opacity="0.7"/><rect x="8.8" y="49" width="1.1" height="0.8" fill="#c2c2bc" opacity="0.7"/><rect x="14.3" y="135.8" width="2.1" height="0.8" fill="#e8e8e2" opacity="0.7"/><rect x="33.1" y="11.6" width="3.3" height="0.8" fill="#e8e8e2" opacity="0.7"/><rect x="26.5" y="29.4" width="2.5" height="0.8" fill="#e8e8e2" opacity="0.7"/><rect x="10.3" y="110.4" width="2.3" height="0.8" fill="#c2c2bc" opacity="0.7"/><rect x="31.1" y="75.9" width="3.4" height="0.8" fill="#c2c2bc" opacity="0.7"/><rect x="43.1" y="41.3" width="2.7" height="0.8" fill="#c2c2bc" opacity="0.7"/><rect x="17.4" y="54.7" width="1.4" height="0.8" fill="#e8e8e2" opacity="0.7"/><rect x="24.9" y="85.5" width="1.7" height="0.8" fill="#e8e8e2" opacity="0.7"/><rect x="53.3" y="124.9" width="1.9" height="0.8" fill="#c2c2bc" opacity="0.7"/><rect x="36.4" y="88.6" width="2.9" height="0.8" fill="#c2c2bc" opacity="0.7"/><rect x="46.2" y="30.8" width="3" height="0.8" fill="#c2c2bc" opacity="0.7"/><rect x="51.9" y="98.9" width="3.4" height="0.8" fill="#e8e8e2" opacity="0.7"/><rect x="55.1" y="103.6" width="2.3" height="0.8" fill="#c2c2bc" opacity="0.7"/><rect x="10.3" y="31.1" width="3.7" height="0.8" fill="#e8e8e2" opacity="0.7"/><rect x="14.6" y="124.1" width="2.2" height="0.8" fill="#c2c2bc" opacity="0.7"/><rect x="6.6" y="104.7" width="3.5" height="0.8" fill="#c2c2bc" opacity="0.7"/><rect x="31.4" y="80.1" width="2.3" height="0.8" fill="#e8e8e2" opacity="0.7"/><rect x="55.2" y="10.2" width="3.8" height="0.8" fill="#c2c2bc" opacity="0.7"/><rect x="29.3" y="127.2" width="2.9" height="0.8" fill="#c2c2bc" opacity="0.7"/><rect x="35.5" y="37.2" width="3.3" height="0.8" fill="#e8e8e2" opacity="0.7"/><rect x="41.6" y="87.7" width="3.8" height="0.8" fill="#c2c2bc" opacity="0.7"/><rect x="42.8" y="57.8" width="2.4" height="0.8" fill="#c2c2bc" opacity="0.7"/><rect x="64.7" y="29.1" width="1.9" height="0.8" fill="#e8e8e2" opacity="0.7"/><rect x="36.3" y="106.2" width="1.3" height="0.8" fill="#c2c2bc" opacity="0.7"/><rect x="13" y="35.6" width="1.8" height="0.8" fill="#c2c2bc" opacity="0.7"/><rect x="17.4" y="32.4" width="1" height="0.8" fill="#e8e8e2" opacity="0.7"/><rect x="14.7" y="40.5" width="3.6" height="0.8" fill="#e8e8e2" opacity="0.7"/><rect x="7.5" y="37.9" width="1" height="0.8" fill="#e8e8e2" opacity="0.7"/><rect x="49.5" y="68.6" width="2.5" height="0.8" fill="#c2c2bc" opacity="0.7"/><rect x="65.7" y="36" width="1.1" height="0.8" fill="#e8e8e2" opacity="0.7"/><rect x="27.2" y="132.8" width="2.2" height="0.8" fill="#e8e8e2" opacity="0.7"/><rect x="27.6" y="90.9" width="3.4" height="0.8" fill="#e8e8e2" opacity="0.7"/><rect x="44.7" y="86.4" width="2.6" height="0.8" fill="#e8e8e2" opacity="0.7"/><rect x="18.1" y="118.9" width="3.7" height="0.8" fill="#e8e8e2" opacity="0.7"/><rect x="13.9" y="14.6" width="1.6" height="0.8" fill="#c2c2bc" opacity="0.7"/><rect x="65.7" y="76.2" width="1.4" height="0.8" fill="#e8e8e2" opacity="0.7"/><rect x="59.3" y="65.7" width="1" height="0.8" fill="#e8e8e2" opacity="0.7"/><rect x="41.4" y="92.7" width="3.5" height="0.8" fill="#e8e8e2" opacity="0.7"/><rect x="54" y="125.2" width="2.3" height="0.8" fill="#c2c2bc" opacity="0.7"/><rect x="9.4" y="60.7" width="1" height="0.8" fill="#e8e8e2" opacity="0.7"/><defs><linearGradient id="pp" x1="0" x2="1"><stop offset="0" stop-color="#a8a8a4"/><stop offset="0.45" stop-color="#c4c4c0"/><stop offset="1" stop-color="#9a9a96"/></linearGradient><linearGradient id="sk" x1="0" y1="0" x2="0" y2="1"><stop offset="0" stop-color="#93b8e4"/><stop offset="1" stop-color="#a9c6ea"/></linearGradient><linearGradient id="wl" x1="0" x2="0" y1="0" y2="1"><stop offset="0" stop-color="#c4c6c8"/><stop offset="0.3" stop-color="#e2e2e4"/><stop offset="1" stop-color="#e6e6e8"/></linearGradient><linearGradient id="sf" x1="0" y1="0" x2="0" y2="1"><stop offset="0" stop-color="#c8ccce"/><stop offset="1" stop-color="#b4b8ba"/></linearGradient></defs><rect x="25" y="14" width="13" height="128" fill="url(#pp)"/><rect x="25" y="14" width="13" height="2" fill="#8a8a86"/><polygon points="20,30 25,27 25,42 22,38" fill="#a2a29e"/><rect x="66" y="0" width="76" height="142" fill="url(#sk)"/><polygon points="66,17 142,8 142,15 66,24" fill="#f2f4f4"/><polygon points="66,24 142,15 142,19 66,27" fill="#d8dadc"/><polygon points="66,27 142,19 142,60 84,62 66,48" fill="url(#sf)"/><rect x="84" y="50" width="58" height="92" fill="url(#wl)"/><rect x="84" y="50" width="10" height="92" fill="#c8c8ca" opacity="0.5"/><rect x="66" y="48" width="18" height="94" fill="#a6c4e8"/><rect x="106.5" y="28" width="3.5" height="114" fill="#b0b2b2"/><rect x="106.5" y="28" width="1" height="114" fill="#9a9c9c"/><rect x="101" y="24" width="4" height="9" fill="#b8baba"/><polygon points="104,30 108,36 109,40 105,33" fill="#a8aaaa"/></svg></div>
<div class="a im" id="i16" style="left:832px;top:90px;width:141px;height:142px;background:#6f93c4"><svg width="141" height="142" viewBox="0 0 141 142" shape-rendering="auto"><defs><linearGradient id="sky" x1="0" y1="0" x2="0" y2="1"><stop offset="0" stop-color="#4f86cf"/><stop offset="0.5" stop-color="#78a6dc"/><stop offset="1" stop-color="#b2cde8"/></linearGradient><radialGradient id="cl"><stop offset="0" stop-color="#ffffff" stop-opacity="0.9"/><stop offset="1" stop-color="#ffffff" stop-opacity="0"/></radialGradient><linearGradient id="roof" x1="0" y1="0" x2="1" y2="1"><stop offset="0" stop-color="#8e949a"/><stop offset="1" stop-color="#767878"/></linearGradient></defs><rect x="0" y="0" width="141" height="62" fill="url(#sky)"/><ellipse cx="40" cy="25" rx="18" ry="8" fill="url(#cl)"/><ellipse cx="58" cy="18" rx="12" ry="7" fill="url(#cl)"/><ellipse cx="84" cy="12" rx="12" ry="7" fill="url(#cl)"/><ellipse cx="66" cy="29" rx="24" ry="7" fill="url(#cl)"/><ellipse cx="120" cy="34" rx="18" ry="7" fill="url(#cl)"/><ellipse cx="22" cy="30" rx="12" ry="6" fill="url(#cl)"/><ellipse cx="100" cy="28" rx="14" ry="5" fill="url(#cl)"/><ellipse cx="130" cy="12" rx="8" ry="4" fill="url(#cl)"/><polygon points="0,62 0,52 1.5,51.9 4.2,52.1 7.1,52.1 9.2,51.4 10.9,44.2 12.5,50.9 14.3,51.7 16.7,52.3 18.8,50.2 21.1,52 23.3,50.9 25.6,50.6 27.3,52.3 30.5,51.8 33.6,51.6 36.1,51.2 39.4,51.6 41.7,52 45.1,51.3 48,51.8 49.7,51.2 51.2,51 53.7,51.8 55.6,47.8 58.2,51.4 60.5,51.1 63.7,51.5 65.4,49.2 68.1,46.1 70.9,50 73,50.2 75.4,50.7 77.5,50.7 79.1,49.3 81.1,51 83.6,49.4 85.9,48.9 89.4,48.9 92.8,50.4 95.5,50.5 98.3,48.9 100,48.7 102,49.3 104.4,43.4 106.1,49.6 109,50.6 112.4,49.6 114.7,48.8 117.5,49.5 120,50 123.4,48.4 125.9,48.2 128.8,48.5 132,48 135.1,48.9 137.3,48.1 140.5,48.3 141,48.6 141,62" fill="#222a22"/><rect x="0" y="59" width="141" height="13" fill="#7f8660"/><polygon points="0,59 66,59.5 66,68 0,68" fill="#d2cab8"/><rect x="24" y="60" width="10" height="8" fill="#a89a88"/><polygon points="66,60 110,62 141,63 141,73 66,70" fill="#88884e"/><polygon points="95,63 115,64 118,70 96,70" fill="#3e4430"/><rect x="0" y="58.5" width="141" height="1" fill="#e2dccc"/><rect x="0" y="68" width="141" height="74" fill="url(#roof)"/><polygon points="0,65 141,71.5 141,78 0,77.5" fill="#1a2134"/><line x1="0" y1="65" x2="0" y2="77.5" stroke="#2c3650" stroke-width="0.35"/><line x1="11.1" y1="65.5" x2="11.1" y2="77.5" stroke="#2c3650" stroke-width="0.35"/><line x1="19.3" y1="65.9" x2="19.3" y2="77.6" stroke="#2c3650" stroke-width="0.35"/><line x1="26.7" y1="66.2" x2="26.7" y2="77.6" stroke="#2c3650" stroke-width="0.35"/><line x1="33.6" y1="66.6" x2="33.6" y2="77.6" stroke="#2c3650" stroke-width="0.35"/><line x1="40.2" y1="66.9" x2="40.2" y2="77.6" stroke="#2c3650" stroke-width="0.35"/><line x1="46.5" y1="67.1" x2="46.5" y2="77.7" stroke="#2c3650" stroke-width="0.35"/><line x1="52.6" y1="67.4" x2="52.6" y2="77.7" stroke="#2c3650" stroke-width="0.35"/><line x1="58.5" y1="67.7" x2="58.5" y2="77.7" stroke="#2c3650" stroke-width="0.35"/><line x1="64.3" y1="68" x2="64.3" y2="77.7" stroke="#2c3650" stroke-width="0.35"/><line x1="70" y1="68.2" x2="70" y2="77.7" stroke="#2c3650" stroke-width="0.35"/><line x1="75.5" y1="68.5" x2="75.5" y2="77.8" stroke="#2c3650" stroke-width="0.35"/><line x1="81" y1="68.7" x2="81" y2="77.8" stroke="#2c3650" stroke-width="0.35"/><line x1="86.3" y1="69" x2="86.3" y2="77.8" stroke="#2c3650" stroke-width="0.35"/><line x1="91.6" y1="69.2" x2="91.6" y2="77.8" stroke="#2c3650" stroke-width="0.35"/><line x1="96.8" y1="69.5" x2="96.8" y2="77.8" stroke="#2c3650" stroke-width="0.35"/><line x1="101.9" y1="69.7" x2="101.9" y2="77.9" stroke="#2c3650" stroke-width="0.35"/><line x1="107" y1="69.9" x2="107" y2="77.9" stroke="#2c3650" stroke-width="0.35"/><line x1="112" y1="70.2" x2="112" y2="77.9" stroke="#2c3650" stroke-width="0.35"/><line x1="117" y1="70.4" x2="117" y2="77.9" stroke="#2c3650" stroke-width="0.35"/><line x1="121.9" y1="70.6" x2="121.9" y2="77.9" stroke="#2c3650" stroke-width="0.35"/><line x1="126.7" y1="70.8" x2="126.7" y2="77.9" stroke="#2c3650" stroke-width="0.35"/><line x1="131.5" y1="71.1" x2="131.5" y2="78" stroke="#2c3650" stroke-width="0.35"/><line x1="136.3" y1="71.3" x2="136.3" y2="78" stroke="#2c3650" stroke-width="0.35"/><line x1="141" y1="71.5" x2="141" y2="78" stroke="#2c3650" stroke-width="0.35"/><line x1="0" y1="65" x2="141" y2="71.5" stroke="#2c3650" stroke-width="0.35"/><line x1="0" y1="69.2" x2="141" y2="73.7" stroke="#2c3650" stroke-width="0.35"/><line x1="0" y1="73.3" x2="141" y2="75.8" stroke="#2c3650" stroke-width="0.35"/><line x1="0" y1="77.5" x2="141" y2="78" stroke="#2c3650" stroke-width="0.35"/><circle cx="0" cy="65" r="0.2" fill="#7a8498"/><circle cx="0" cy="69.2" r="0.2" fill="#7a8498"/><circle cx="0" cy="73.3" r="0.3" fill="#7a8498"/><circle cx="0" cy="77.5" r="0.3" fill="#7a8498"/><circle cx="11.1" cy="65.5" r="0.2" fill="#7a8498"/><circle cx="11.1" cy="69.5" r="0.2" fill="#7a8498"/><circle cx="11.1" cy="73.5" r="0.3" fill="#7a8498"/><circle cx="11.1" cy="77.5" r="0.3" fill="#7a8498"/><circle cx="19.3" cy="65.9" r="0.2" fill="#7a8498"/><circle cx="19.3" cy="69.8" r="0.2" fill="#7a8498"/><circle cx="19.3" cy="73.7" r="0.3" fill="#7a8498"/><circle cx="19.3" cy="77.6" r="0.3" fill="#7a8498"/><circle cx="26.7" cy="66.2" r="0.2" fill="#7a8498"/><circle cx="26.7" cy="70" r="0.2" fill="#7a8498"/><circle cx="26.7" cy="73.8" r="0.3" fill="#7a8498"/><circle cx="26.7" cy="77.6" r="0.3" fill="#7a8498"/><circle cx="33.6" cy="66.6" r="0.2" fill="#7a8498"/><circle cx="33.6" cy="70.2" r="0.2" fill="#7a8498"/><circle cx="33.6" cy="73.9" r="0.3" fill="#7a8498"/><circle cx="33.6" cy="77.6" r="0.3" fill="#7a8498"/><circle cx="40.2" cy="66.9" r="0.2" fill="#7a8498"/><circle cx="40.2" cy="70.4" r="0.2" fill="#7a8498"/><circle cx="40.2" cy="74" r="0.3" fill="#7a8498"/><circle cx="40.2" cy="77.6" r="0.3" fill="#7a8498"/><circle cx="46.5" cy="67.1" r="0.2" fill="#7a8498"/><circle cx="46.5" cy="70.7" r="0.2" fill="#7a8498"/><circle cx="46.5" cy="74.2" r="0.3" fill="#7a8498"/><circle cx="46.5" cy="77.7" r="0.3" fill="#7a8498"/><circle cx="52.6" cy="67.4" r="0.2" fill="#7a8498"/><circle cx="52.6" cy="70.8" r="0.2" fill="#7a8498"/><circle cx="52.6" cy="74.3" r="0.3" fill="#7a8498"/><circle cx="52.6" cy="77.7" r="0.3" fill="#7a8498"/><circle cx="58.5" cy="67.7" r="0.2" fill="#7a8498"/><circle cx="58.5" cy="71" r="0.2" fill="#7a8498"/><circle cx="58.5" cy="74.4" r="0.3" fill="#7a8498"/><circle cx="58.5" cy="77.7" r="0.3" fill="#7a8498"/><circle cx="64.3" cy="68" r="0.2" fill="#7a8498"/><circle cx="64.3" cy="71.2" r="0.2" fill="#7a8498"/><circle cx="64.3" cy="74.5" r="0.3" fill="#7a8498"/><circle cx="64.3" cy="77.7" r="0.3" fill="#7a8498"/><circle cx="70" cy="68.2" r="0.2" fill="#7a8498"/><circle cx="70" cy="71.4" r="0.2" fill="#7a8498"/><circle cx="70" cy="74.6" r="0.3" fill="#7a8498"/><circle cx="70" cy="77.7" r="0.3" fill="#7a8498"/><circle cx="75.5" cy="68.5" r="0.2" fill="#7a8498"/><circle cx="75.5" cy="71.6" r="0.2" fill="#7a8498"/><circle cx="75.5" cy="74.7" r="0.3" fill="#7a8498"/><circle cx="75.5" cy="77.8" r="0.3" fill="#7a8498"/><circle cx="81" cy="68.7" r="0.2" fill="#7a8498"/><circle cx="81" cy="71.8" r="0.2" fill="#7a8498"/><circle cx="81" cy="74.8" r="0.3" fill="#7a8498"/><circle cx="81" cy="77.8" r="0.3" fill="#7a8498"/><circle cx="86.3" cy="69" r="0.2" fill="#7a8498"/><circle cx="86.3" cy="71.9" r="0.2" fill="#7a8498"/><circle cx="86.3" cy="74.9" r="0.3" fill="#7a8498"/><circle cx="86.3" cy="77.8" r="0.3" fill="#7a8498"/><circle cx="91.6" cy="69.2" r="0.2" fill="#7a8498"/><circle cx="91.6" cy="72.1" r="0.2" fill="#7a8498"/><circle cx="91.6" cy="75" r="0.3" fill="#7a8498"/><circle cx="91.6" cy="77.8" r="0.3" fill="#7a8498"/><circle cx="96.8" cy="69.5" r="0.2" fill="#7a8498"/><circle cx="96.8" cy="72.3" r="0.2" fill="#7a8498"/><circle cx="96.8" cy="75" r="0.3" fill="#7a8498"/><circle cx="96.8" cy="77.8" r="0.3" fill="#7a8498"/><circle cx="101.9" cy="69.7" r="0.2" fill="#7a8498"/><circle cx="101.9" cy="72.4" r="0.2" fill="#7a8498"/><circle cx="101.9" cy="75.1" r="0.3" fill="#7a8498"/><circle cx="101.9" cy="77.9" r="0.3" fill="#7a8498"/><circle cx="107" cy="69.9" r="0.2" fill="#7a8498"/><circle cx="107" cy="72.6" r="0.2" fill="#7a8498"/><circle cx="107" cy="75.2" r="0.3" fill="#7a8498"/><circle cx="107" cy="77.9" r="0.3" fill="#7a8498"/><circle cx="112" cy="70.2" r="0.2" fill="#7a8498"/><circle cx="112" cy="72.7" r="0.2" fill="#7a8498"/><circle cx="112" cy="75.3" r="0.3" fill="#7a8498"/><circle cx="112" cy="77.9" r="0.3" fill="#7a8498"/><circle cx="117" cy="70.4" r="0.2" fill="#7a8498"/><circle cx="117" cy="72.9" r="0.2" fill="#7a8498"/><circle cx="117" cy="75.4" r="0.3" fill="#7a8498"/><circle cx="117" cy="77.9" r="0.3" fill="#7a8498"/><circle cx="121.9" cy="70.6" r="0.2" fill="#7a8498"/><circle cx="121.9" cy="73.1" r="0.2" fill="#7a8498"/><circle cx="121.9" cy="75.5" r="0.3" fill="#7a8498"/><circle cx="121.9" cy="77.9" r="0.3" fill="#7a8498"/><circle cx="126.7" cy="70.8" r="0.2" fill="#7a8498"/><circle cx="126.7" cy="73.2" r="0.2" fill="#7a8498"/><circle cx="126.7" cy="75.6" r="0.3" fill="#7a8498"/><circle cx="126.7" cy="77.9" r="0.3" fill="#7a8498"/><circle cx="131.5" cy="71.1" r="0.2" fill="#7a8498"/><circle cx="131.5" cy="73.4" r="0.2" fill="#7a8498"/><circle cx="131.5" cy="75.7" r="0.3" fill="#7a8498"/><circle cx="131.5" cy="78" r="0.3" fill="#7a8498"/><circle cx="136.3" cy="71.3" r="0.2" fill="#7a8498"/><circle cx="136.3" cy="73.5" r="0.2" fill="#7a8498"/><circle cx="136.3" cy="75.7" r="0.3" fill="#7a8498"/><circle cx="136.3" cy="78" r="0.3" fill="#7a8498"/><circle cx="141" cy="71.5" r="0.2" fill="#7a8498"/><circle cx="141" cy="73.7" r="0.2" fill="#7a8498"/><circle cx="141" cy="75.8" r="0.3" fill="#7a8498"/><circle cx="141" cy="78" r="0.3" fill="#7a8498"/><polygon points="0,77.5 66,90 141,78 0,78" fill="#1a2030"/><polygon points="0,78 66,90 66,96 40,92 0,92" fill="#2c3034"/><polygon points="8,84 14,83 14,92 8,92" fill="#15181a"/><polygon points="28,86 34,86 34,95 28,95" fill="#15181a"/><polygon points="0,92 42,92 60,96 0,116" fill="#8a9098"/><polygon points="-4,116.5 146,72 100,158 -60,200" fill="#111626"/><line x1="-4" y1="116.5" x2="-60" y2="200" stroke="#2e3852" stroke-width="0.5"/><line x1="11.6" y1="111.9" x2="-43.4" y2="195.6" stroke="#2e3852" stroke-width="0.5"/><line x1="23.1" y1="108.5" x2="-31.1" y2="192.4" stroke="#2e3852" stroke-width="0.5"/><line x1="33.4" y1="105.4" x2="-20.1" y2="189.5" stroke="#2e3852" stroke-width="0.5"/><line x1="43.1" y1="102.5" x2="-9.7" y2="186.8" stroke="#2e3852" stroke-width="0.5"/><line x1="52.4" y1="99.8" x2="0.1" y2="184.2" stroke="#2e3852" stroke-width="0.5"/><line x1="61.2" y1="97.2" x2="9.5" y2="181.7" stroke="#2e3852" stroke-width="0.5"/><line x1="69.8" y1="94.6" x2="18.7" y2="179.3" stroke="#2e3852" stroke-width="0.5"/><line x1="78.1" y1="92.2" x2="27.5" y2="177" stroke="#2e3852" stroke-width="0.5"/><line x1="86.2" y1="89.7" x2="36.2" y2="174.7" stroke="#2e3852" stroke-width="0.5"/><line x1="94.1" y1="87.4" x2="44.7" y2="172.5" stroke="#2e3852" stroke-width="0.5"/><line x1="101.9" y1="85.1" x2="52.9" y2="170.4" stroke="#2e3852" stroke-width="0.5"/><line x1="109.5" y1="82.8" x2="61.1" y2="168.2" stroke="#2e3852" stroke-width="0.5"/><line x1="117" y1="80.6" x2="69.1" y2="166.1" stroke="#2e3852" stroke-width="0.5"/><line x1="124.4" y1="78.4" x2="77" y2="164" stroke="#2e3852" stroke-width="0.5"/><line x1="131.7" y1="76.2" x2="84.8" y2="162" stroke="#2e3852" stroke-width="0.5"/><line x1="138.9" y1="74.1" x2="92.4" y2="160" stroke="#2e3852" stroke-width="0.5"/><line x1="146" y1="72" x2="100" y2="158" stroke="#2e3852" stroke-width="0.5"/><line x1="-4" y1="116.5" x2="146" y2="72" stroke="#2e3852" stroke-width="0.5"/><line x1="-7.1" y1="121.2" x2="143.4" y2="76.8" stroke="#2e3852" stroke-width="0.5"/><line x1="-11.5" y1="127.7" x2="139.8" y2="83.5" stroke="#2e3852" stroke-width="0.5"/><line x1="-16.4" y1="135" x2="135.8" y2="91.1" stroke="#2e3852" stroke-width="0.5"/><line x1="-21.8" y1="143.1" x2="131.4" y2="99.4" stroke="#2e3852" stroke-width="0.5"/><line x1="-27.5" y1="151.6" x2="126.7" y2="108.2" stroke="#2e3852" stroke-width="0.5"/><line x1="-33.6" y1="160.6" x2="121.7" y2="117.4" stroke="#2e3852" stroke-width="0.5"/><line x1="-39.9" y1="170" x2="116.5" y2="127.1" stroke="#2e3852" stroke-width="0.5"/><line x1="-46.4" y1="179.7" x2="111.2" y2="137.1" stroke="#2e3852" stroke-width="0.5"/><line x1="-53.1" y1="189.7" x2="105.7" y2="147.4" stroke="#2e3852" stroke-width="0.5"/><line x1="-60" y1="200" x2="100" y2="158" stroke="#2e3852" stroke-width="0.5"/><circle cx="-4" cy="116.5" r="0.4" fill="#e6eaf0"/><circle cx="-7.1" cy="121.2" r="0.4" fill="#e6eaf0"/><circle cx="-11.5" cy="127.7" r="0.5" fill="#e6eaf0"/><circle cx="-16.4" cy="135" r="0.5" fill="#e6eaf0"/><circle cx="-21.8" cy="143.1" r="0.6" fill="#e6eaf0"/><circle cx="-27.5" cy="151.6" r="0.6" fill="#e6eaf0"/><circle cx="-33.6" cy="160.6" r="0.6" fill="#e6eaf0"/><circle cx="-39.9" cy="170" r="0.7" fill="#e6eaf0"/><circle cx="-46.4" cy="179.7" r="0.7" fill="#e6eaf0"/><circle cx="-53.1" cy="189.7" r="0.8" fill="#e6eaf0"/><circle cx="-60" cy="200" r="0.8" fill="#e6eaf0"/><circle cx="11.6" cy="111.9" r="0.4" fill="#e6eaf0"/><circle cx="8.5" cy="116.6" r="0.4" fill="#e6eaf0"/><circle cx="4.2" cy="123.1" r="0.5" fill="#e6eaf0"/><circle cx="-0.7" cy="130.5" r="0.5" fill="#e6eaf0"/><circle cx="-5.9" cy="138.5" r="0.6" fill="#e6eaf0"/><circle cx="-11.6" cy="147.1" r="0.6" fill="#e6eaf0"/><circle cx="-17.5" cy="156.1" r="0.6" fill="#e6eaf0"/><circle cx="-23.6" cy="165.5" r="0.7" fill="#e6eaf0"/><circle cx="-30" cy="175.3" r="0.7" fill="#e6eaf0"/><circle cx="-36.6" cy="185.3" r="0.8" fill="#e6eaf0"/><circle cx="-43.4" cy="195.6" r="0.8" fill="#e6eaf0"/><circle cx="23.1" cy="108.5" r="0.4" fill="#e6eaf0"/><circle cx="20" cy="113.2" r="0.4" fill="#e6eaf0"/><circle cx="15.8" cy="119.7" r="0.5" fill="#e6eaf0"/><circle cx="11" cy="127.1" r="0.5" fill="#e6eaf0"/><circle cx="5.8" cy="135.2" r="0.6" fill="#e6eaf0"/><circle cx="0.3" cy="143.8" r="0.6" fill="#e6eaf0"/><circle cx="-5.5" cy="152.8" r="0.6" fill="#e6eaf0"/><circle cx="-11.6" cy="162.2" r="0.7" fill="#e6eaf0"/><circle cx="-17.9" cy="172" r="0.7" fill="#e6eaf0"/><circle cx="-24.4" cy="182.1" r="0.8" fill="#e6eaf0"/><circle cx="-31.1" cy="192.4" r="0.8" fill="#e6eaf0"/><circle cx="33.4" cy="105.4" r="0.4" fill="#e6eaf0"/><circle cx="30.4" cy="110.1" r="0.4" fill="#e6eaf0"/><circle cx="26.3" cy="116.6" r="0.5" fill="#e6eaf0"/><circle cx="21.6" cy="124.1" r="0.5" fill="#e6eaf0"/><circle cx="16.4" cy="132.2" r="0.6" fill="#e6eaf0"/><circle cx="11" cy="140.8" r="0.6" fill="#e6eaf0"/><circle cx="5.2" cy="149.8" r="0.6" fill="#e6eaf0"/><circle cx="-0.8" cy="159.3" r="0.7" fill="#e6eaf0"/><circle cx="-7" cy="169" r="0.7" fill="#e6eaf0"/><circle cx="-13.5" cy="179.1" r="0.8" fill="#e6eaf0"/><circle cx="-20.1" cy="189.5" r="0.8" fill="#e6eaf0"/><circle cx="43.1" cy="102.5" r="0.4" fill="#e6eaf0"/><circle cx="40.2" cy="107.3" r="0.4" fill="#e6eaf0"/><circle cx="36.1" cy="113.8" r="0.5" fill="#e6eaf0"/><circle cx="31.4" cy="121.2" r="0.5" fill="#e6eaf0"/><circle cx="26.3" cy="129.3" r="0.6" fill="#e6eaf0"/><circle cx="20.9" cy="138" r="0.6" fill="#e6eaf0"/><circle cx="15.2" cy="147" r="0.6" fill="#e6eaf0"/><circle cx="9.3" cy="156.5" r="0.7" fill="#e6eaf0"/><circle cx="3.1" cy="166.3" r="0.7" fill="#e6eaf0"/><circle cx="-3.2" cy="176.4" r="0.8" fill="#e6eaf0"/><circle cx="-9.7" cy="186.8" r="0.8" fill="#e6eaf0"/><circle cx="52.4" cy="99.8" r="0.4" fill="#e6eaf0"/><circle cx="49.4" cy="104.5" r="0.4" fill="#e6eaf0"/><circle cx="45.4" cy="111.1" r="0.5" fill="#e6eaf0"/><circle cx="40.8" cy="118.5" r="0.5" fill="#e6eaf0"/><circle cx="35.7" cy="126.6" r="0.6" fill="#e6eaf0"/><circle cx="30.4" cy="135.3" r="0.6" fill="#e6eaf0"/><circle cx="24.8" cy="144.4" r="0.6" fill="#e6eaf0"/><circle cx="18.9" cy="153.8" r="0.7" fill="#e6eaf0"/><circle cx="12.8" cy="163.7" r="0.7" fill="#e6eaf0"/><circle cx="6.6" cy="173.8" r="0.8" fill="#e6eaf0"/><circle cx="0.1" cy="184.2" r="0.8" fill="#e6eaf0"/><circle cx="61.2" cy="97.2" r="0.4" fill="#e6eaf0"/><circle cx="58.3" cy="101.9" r="0.4" fill="#e6eaf0"/><circle cx="54.3" cy="108.5" r="0.5" fill="#e6eaf0"/><circle cx="49.7" cy="115.9" r="0.5" fill="#e6eaf0"/><circle cx="44.8" cy="124.1" r="0.6" fill="#e6eaf0"/><circle cx="39.5" cy="132.7" r="0.6" fill="#e6eaf0"/><circle cx="33.9" cy="141.8" r="0.6" fill="#e6eaf0"/><circle cx="28.1" cy="151.3" r="0.7" fill="#e6eaf0"/><circle cx="22.1" cy="161.2" r="0.7" fill="#e6eaf0"/><circle cx="15.9" cy="171.3" r="0.8" fill="#e6eaf0"/><circle cx="9.5" cy="181.7" r="0.8" fill="#e6eaf0"/><circle cx="69.8" cy="94.6" r="0.4" fill="#e6eaf0"/><circle cx="66.9" cy="99.4" r="0.4" fill="#e6eaf0"/><circle cx="62.9" cy="106" r="0.5" fill="#e6eaf0"/><circle cx="58.4" cy="113.4" r="0.5" fill="#e6eaf0"/><circle cx="53.5" cy="121.6" r="0.6" fill="#e6eaf0"/><circle cx="48.3" cy="130.2" r="0.6" fill="#e6eaf0"/><circle cx="42.8" cy="139.4" r="0.6" fill="#e6eaf0"/><circle cx="37.1" cy="148.9" r="0.7" fill="#e6eaf0"/><circle cx="31.1" cy="158.7" r="0.7" fill="#e6eaf0"/><circle cx="25" cy="168.9" r="0.8" fill="#e6eaf0"/><circle cx="18.7" cy="179.3" r="0.8" fill="#e6eaf0"/><circle cx="78.1" cy="92.2" r="0.4" fill="#e6eaf0"/><circle cx="75.2" cy="96.9" r="0.4" fill="#e6eaf0"/><circle cx="71.3" cy="103.5" r="0.5" fill="#e6eaf0"/><circle cx="66.9" cy="111" r="0.5" fill="#e6eaf0"/><circle cx="62" cy="119.1" r="0.6" fill="#e6eaf0"/><circle cx="56.8" cy="127.8" r="0.6" fill="#e6eaf0"/><circle cx="51.4" cy="137" r="0.6" fill="#e6eaf0"/><circle cx="45.7" cy="146.5" r="0.7" fill="#e6eaf0"/><circle cx="39.8" cy="156.4" r="0.7" fill="#e6eaf0"/><circle cx="33.8" cy="166.5" r="0.8" fill="#e6eaf0"/><circle cx="27.5" cy="177" r="0.8" fill="#e6eaf0"/><circle cx="86.2" cy="89.7" r="0.4" fill="#e6eaf0"/><circle cx="83.4" cy="94.5" r="0.4" fill="#e6eaf0"/><circle cx="79.5" cy="101.1" r="0.5" fill="#e6eaf0"/><circle cx="75.1" cy="108.6" r="0.5" fill="#e6eaf0"/><circle cx="70.3" cy="116.8" r="0.6" fill="#e6eaf0"/><circle cx="65.2" cy="125.5" r="0.6" fill="#e6eaf0"/><circle cx="59.8" cy="134.6" r="0.6" fill="#e6eaf0"/><circle cx="54.2" cy="144.2" r="0.7" fill="#e6eaf0"/><circle cx="48.4" cy="154.1" r="0.7" fill="#e6eaf0"/><circle cx="42.4" cy="164.3" r="0.8" fill="#e6eaf0"/><circle cx="36.2" cy="174.7" r="0.8" fill="#e6eaf0"/><circle cx="94.1" cy="87.4" r="0.4" fill="#e6eaf0"/><circle cx="91.3" cy="92.2" r="0.4" fill="#e6eaf0"/><circle cx="87.5" cy="98.8" r="0.5" fill="#e6eaf0"/><circle cx="83.1" cy="106.3" r="0.5" fill="#e6eaf0"/><circle cx="78.4" cy="114.5" r="0.6" fill="#e6eaf0"/><circle cx="73.3" cy="123.2" r="0.6" fill="#e6eaf0"/><circle cx="68" cy="132.3" r="0.6" fill="#e6eaf0"/><circle cx="62.4" cy="141.9" r="0.7" fill="#e6eaf0"/><circle cx="56.7" cy="151.8" r="0.7" fill="#e6eaf0"/><circle cx="50.8" cy="162" r="0.8" fill="#e6eaf0"/><circle cx="44.7" cy="172.5" r="0.8" fill="#e6eaf0"/><circle cx="101.9" cy="85.1" r="0.4" fill="#e6eaf0"/><circle cx="99.1" cy="89.9" r="0.4" fill="#e6eaf0"/><circle cx="95.3" cy="96.5" r="0.5" fill="#e6eaf0"/><circle cx="91" cy="104" r="0.5" fill="#e6eaf0"/><circle cx="86.3" cy="112.2" r="0.6" fill="#e6eaf0"/><circle cx="81.3" cy="120.9" r="0.6" fill="#e6eaf0"/><circle cx="76" cy="130.1" r="0.6" fill="#e6eaf0"/><circle cx="70.6" cy="139.7" r="0.7" fill="#e6eaf0"/><circle cx="64.9" cy="149.6" r="0.7" fill="#e6eaf0"/><circle cx="59" cy="159.8" r="0.8" fill="#e6eaf0"/><circle cx="52.9" cy="170.4" r="0.8" fill="#e6eaf0"/><circle cx="109.5" cy="82.8" r="0.4" fill="#e6eaf0"/><circle cx="106.8" cy="87.6" r="0.4" fill="#e6eaf0"/><circle cx="103" cy="94.2" r="0.5" fill="#e6eaf0"/><circle cx="98.8" cy="101.8" r="0.5" fill="#e6eaf0"/><circle cx="94.1" cy="110" r="0.6" fill="#e6eaf0"/><circle cx="89.2" cy="118.7" r="0.6" fill="#e6eaf0"/><circle cx="83.9" cy="127.9" r="0.6" fill="#e6eaf0"/><circle cx="78.5" cy="137.5" r="0.7" fill="#e6eaf0"/><circle cx="72.9" cy="147.4" r="0.7" fill="#e6eaf0"/><circle cx="67.1" cy="157.7" r="0.8" fill="#e6eaf0"/><circle cx="61.1" cy="168.2" r="0.8" fill="#e6eaf0"/><circle cx="117" cy="80.6" r="0.4" fill="#e6eaf0"/><circle cx="114.3" cy="85.4" r="0.4" fill="#e6eaf0"/><circle cx="110.6" cy="92" r="0.5" fill="#e6eaf0"/><circle cx="106.4" cy="99.6" r="0.5" fill="#e6eaf0"/><circle cx="101.8" cy="107.8" r="0.6" fill="#e6eaf0"/><circle cx="96.9" cy="116.6" r="0.6" fill="#e6eaf0"/><circle cx="91.7" cy="125.8" r="0.6" fill="#e6eaf0"/><circle cx="86.3" cy="135.4" r="0.7" fill="#e6eaf0"/><circle cx="80.8" cy="145.3" r="0.7" fill="#e6eaf0"/><circle cx="75" cy="155.6" r="0.8" fill="#e6eaf0"/><circle cx="69.1" cy="166.1" r="0.8" fill="#e6eaf0"/><circle cx="124.4" cy="78.4" r="0.4" fill="#e6eaf0"/><circle cx="121.8" cy="83.2" r="0.4" fill="#e6eaf0"/><circle cx="118.1" cy="89.9" r="0.5" fill="#e6eaf0"/><circle cx="113.9" cy="97.4" r="0.5" fill="#e6eaf0"/><circle cx="109.3" cy="105.6" r="0.6" fill="#e6eaf0"/><circle cx="104.5" cy="114.4" r="0.6" fill="#e6eaf0"/><circle cx="99.4" cy="123.6" r="0.6" fill="#e6eaf0"/><circle cx="94" cy="133.2" r="0.7" fill="#e6eaf0"/><circle cx="88.5" cy="143.2" r="0.7" fill="#e6eaf0"/><circle cx="82.8" cy="153.5" r="0.8" fill="#e6eaf0"/><circle cx="77" cy="164" r="0.8" fill="#e6eaf0"/><circle cx="131.7" cy="76.2" r="0.4" fill="#e6eaf0"/><circle cx="129.1" cy="81.1" r="0.4" fill="#e6eaf0"/><circle cx="125.4" cy="87.7" r="0.5" fill="#e6eaf0"/><circle cx="121.3" cy="95.3" r="0.5" fill="#e6eaf0"/><circle cx="116.8" cy="103.5" r="0.6" fill="#e6eaf0"/><circle cx="112" cy="112.3" r="0.6" fill="#e6eaf0"/><circle cx="106.9" cy="121.5" r="0.6" fill="#e6eaf0"/><circle cx="101.6" cy="131.2" r="0.7" fill="#e6eaf0"/><circle cx="96.2" cy="141.1" r="0.7" fill="#e6eaf0"/><circle cx="90.5" cy="151.4" r="0.8" fill="#e6eaf0"/><circle cx="84.8" cy="162" r="0.8" fill="#e6eaf0"/><circle cx="138.9" cy="74.1" r="0.4" fill="#e6eaf0"/><circle cx="136.3" cy="78.9" r="0.4" fill="#e6eaf0"/><circle cx="132.7" cy="85.6" r="0.5" fill="#e6eaf0"/><circle cx="128.6" cy="93.2" r="0.5" fill="#e6eaf0"/><circle cx="124.1" cy="101.4" r="0.6" fill="#e6eaf0"/><circle cx="119.4" cy="110.2" r="0.6" fill="#e6eaf0"/><circle cx="114.4" cy="119.5" r="0.6" fill="#e6eaf0"/><circle cx="109.1" cy="129.1" r="0.7" fill="#e6eaf0"/><circle cx="103.7" cy="139.1" r="0.7" fill="#e6eaf0"/><circle cx="98.2" cy="149.4" r="0.8" fill="#e6eaf0"/><circle cx="92.4" cy="160" r="0.8" fill="#e6eaf0"/><circle cx="146" cy="72" r="0.4" fill="#e6eaf0"/><circle cx="143.4" cy="76.8" r="0.4" fill="#e6eaf0"/><circle cx="139.8" cy="83.5" r="0.5" fill="#e6eaf0"/><circle cx="135.8" cy="91.1" r="0.5" fill="#e6eaf0"/><circle cx="131.4" cy="99.4" r="0.6" fill="#e6eaf0"/><circle cx="126.7" cy="108.2" r="0.6" fill="#e6eaf0"/><circle cx="121.7" cy="117.4" r="0.6" fill="#e6eaf0"/><circle cx="116.5" cy="127.1" r="0.7" fill="#e6eaf0"/><circle cx="111.2" cy="137.1" r="0.7" fill="#e6eaf0"/><circle cx="105.7" cy="147.4" r="0.8" fill="#e6eaf0"/><circle cx="100" cy="158" r="0.8" fill="#e6eaf0"/><polygon points="141,84 141,142 108,142" fill="#7c7c7a"/><line x1="108" y1="142" x2="141" y2="83" stroke="#dfe3e8" stroke-width="0.9"/></svg></div>

<!-- ROW 1 captions -->
<div class="a c" style="transform:scaleX(1.254);transform-origin:0 0;width:105.5px;overflow:hidden;left:51px;top:233px">フッ素ジュエル30Td塗装:<b class="sp"></b>ケシズミブラック</div>
<div class="a c" style="transform:scaleX(1.286);transform-origin:0 0;width:95.5px;overflow:hidden;left:207px;top:233px">フッ素ジュエル30Td塗装:<b class="sp"></b>セージグレー</div>
<div class="a c" style="transform:scaleX(1.142);transform-origin:0 0;width:68.0px;overflow:hidden;left:362px;top:233px">FC-SHMIX/7　※空目地</div>
<div class="a c" style="transform:scaleX(1.355);transform-origin:0 0;width:54.5px;overflow:hidden;left:518px;top:233px">木目柄:<b class="sp"></b>ダークグレイン</div>
<div class="a c" style="transform:scaleX(1.131);transform-origin:0 0;width:77.5px;overflow:hidden;left:674.5px;top:233px">URT60BL　色:<b class="sp"></b>ダークグレー</div>
<div class="a c" style="transform:scaleX(1.307);transform-origin:0 0;width:84.0px;overflow:hidden;left:832px;top:233px">陸屋根（単結晶30SⅡ）架台受梁Ⅲ</div>

<!-- ROW 2 titles -->
<div class="a t" style="transform:scaleX(1.229);transform-origin:0 0;width:55.5px;overflow:hidden;left:52px;top:274px"><i class="sq"></i>アルミ樹脂サッシ</div>
<div class="a t" style="transform:scaleX(1.220);transform-origin:0 0;width:55.5px;overflow:hidden;left:207.5px;top:274px"><i class="sq"></i>アルミ樹脂サッシ</div>
<div class="a t" style="transform:scaleX(1.239);transform-origin:0 0;width:55.5px;overflow:hidden;left:362.5px;top:274px"><i class="sq"></i>アルミ樹脂サッシ</div>
<div class="a t" style="transform:scaleX(1.227);transform-origin:0 0;width:60.5px;overflow:hidden;left:518px;top:274px"><i class="sq"></i>KGアルミ物干金物</div>
<div class="a t" style="transform:scaleX(1.193);transform-origin:0 0;width:99.5px;overflow:hidden;left:674.5px;top:274px"><i class="sq"></i>ルーフバルコニー　ガラスタイプ</div>

<!-- ROW 2 images -->
<div class="a im" id="i21" style="left:51px;top:283px;width:141px;height:142px;background:#111"><svg width="141" height="142" viewBox="0 0 141 142" shape-rendering="auto"><defs><linearGradient id="gl" x1="0" y1="0" x2="1" y2="1"><stop offset="0" stop-color="#fafbfc"/><stop offset="1" stop-color="#eceeef"/></linearGradient></defs><rect x="0" y="0" width="141" height="142" fill="#0f1717"/><rect x="34.4" y="0" width="107" height="71.6" fill="#f3f4f5"/><rect x="34.4" y="0" width="107" height="71.6" fill="url(#gl)"/><rect x="34.4" y="71.6" width="107" height="1" fill="#2a3030"/><rect x="0" y="0" width="3" height="142" fill="#1a2222"/><rect x="0" y="112" width="141" height="1" fill="#1e2626"/><rect x="30" y="112" width="111" height="4" fill="#0a1010"/><rect x="7" y="130" width="24" height="0.6" fill="#3a4242"/><rect x="15" y="100" width="0.6" height="42" fill="#1c2424"/><rect x="20" y="118" width="12" height="0.5" fill="#263030"/><rect x="20" y="122" width="12" height="0.5" fill="#263030"/><rect x="34.4" y="72.6" width="107" height="40" fill="#121a1a" opacity="0.6"/></svg></div>
<div class="a im" id="i22" style="left:206px;top:283px;width:142px;height:142px;background:#ddd4c8"><svg width="142" height="142" viewBox="0 0 142 142" shape-rendering="auto"><rect x="0" y="0" width="142" height="142" fill="#d8cfc3"/><rect x="28.6" y="0" width="113.4" height="75.7" fill="#f6f6f5"/><rect x="27.8" y="0" width="1.2" height="76.5" fill="#8c8277"/><rect x="27.8" y="75.7" width="114.2" height="1.4" fill="#8c8277"/><rect x="29" y="77.1" width="113" height="3" fill="#e6ded3"/><rect x="10" y="0" width="0.8" height="142" fill="#c4bbaf"/><rect x="12.2" y="0" width="0.8" height="142" fill="#e6ded2"/><rect x="25.5" y="0" width="0.8" height="142" fill="#c2b9ad"/><rect x="12" y="113.5" width="130" height="0.9" fill="#a69d91"/><rect x="12" y="114.5" width="130" height="1.2" fill="#e8e0d5"/><rect x="12" y="117.6" width="130" height="0.8" fill="#b3aa9e"/><rect x="12" y="127.8" width="130" height="1" fill="#a09789"/><rect x="12" y="129.8" width="130" height="1" fill="#e4dcd1"/><rect x="12" y="118" width="15" height="9" fill="#e2dace"/><rect x="12" y="121.5" width="15" height="0.8" fill="#a69d91"/><rect x="0" y="132" width="142" height="10" fill="#dcd4c8"/><rect x="3" y="132" width="0.8" height="10" fill="#b8afa3"/></svg></div>
<div class="a im" id="i23" style="left:362px;top:283px;width:141px;height:142px;background:#d8d2cc"><svg width="141" height="142" viewBox="0 0 141 142" shape-rendering="auto"><defs><linearGradient id="sw" x1="0" y1="0" x2="1" y2="0.3"><stop offset="0" stop-color="#d2ccc6"/><stop offset="0.6" stop-color="#dad5d0"/><stop offset="1" stop-color="#d6d1cc"/></linearGradient></defs><rect x="0" y="0" width="141" height="142" fill="url(#sw)"/><polygon points="0,117.5 141,131 141,139 0,126" fill="#c6c0ba"/><polygon points="0,126 141,139 141,142 0,142" fill="#dcd8d4"/><polygon points="34.5,35 100,29 100,128 34.5,119" fill="#e4ddd7"/><line x1="35" y1="35" x2="99.5" y2="29" stroke="#cec6c0" stroke-width="0.6"/><line x1="35" y1="36.9" x2="99.5" y2="31.2" stroke="#d4ccc6" stroke-width="0.6"/><line x1="35" y1="38.8" x2="99.5" y2="33.5" stroke="#ece6e0" stroke-width="0.6"/><line x1="35" y1="40.7" x2="99.5" y2="35.8" stroke="#d4ccc6" stroke-width="0.6"/><line x1="35" y1="42.6" x2="99.5" y2="38" stroke="#d4ccc6" stroke-width="0.6"/><line x1="35" y1="44.5" x2="99.5" y2="40.2" stroke="#ece6e0" stroke-width="0.6"/><line x1="35" y1="46.5" x2="99.5" y2="42.5" stroke="#ece6e0" stroke-width="0.6"/><line x1="35" y1="48.4" x2="99.5" y2="44.8" stroke="#d4ccc6" stroke-width="0.6"/><line x1="35" y1="50.3" x2="99.5" y2="47" stroke="#cec6c0" stroke-width="0.6"/><line x1="35" y1="52.2" x2="99.5" y2="49.2" stroke="#cec6c0" stroke-width="0.6"/><line x1="35" y1="54.1" x2="99.5" y2="51.5" stroke="#cec6c0" stroke-width="0.6"/><line x1="35" y1="56" x2="99.5" y2="53.8" stroke="#d4ccc6" stroke-width="0.6"/><line x1="35" y1="57.9" x2="99.5" y2="56" stroke="#cec6c0" stroke-width="0.6"/><line x1="35" y1="59.8" x2="99.5" y2="58.2" stroke="#d4ccc6" stroke-width="0.6"/><line x1="35" y1="61.7" x2="99.5" y2="60.5" stroke="#cec6c0" stroke-width="0.6"/><line x1="35" y1="63.6" x2="99.5" y2="62.8" stroke="#d4ccc6" stroke-width="0.6"/><line x1="35" y1="65.5" x2="99.5" y2="65" stroke="#cec6c0" stroke-width="0.6"/><line x1="35" y1="67.5" x2="99.5" y2="67.2" stroke="#d4ccc6" stroke-width="0.6"/><line x1="35" y1="69.4" x2="99.5" y2="69.5" stroke="#cec6c0" stroke-width="0.6"/><line x1="35" y1="71.3" x2="99.5" y2="71.8" stroke="#cec6c0" stroke-width="0.6"/><line x1="35" y1="73.2" x2="99.5" y2="74" stroke="#d4ccc6" stroke-width="0.6"/><line x1="35" y1="75.1" x2="99.5" y2="76.2" stroke="#cec6c0" stroke-width="0.6"/><line x1="35" y1="77" x2="99.5" y2="78.5" stroke="#ece6e0" stroke-width="0.6"/><line x1="35" y1="78.9" x2="99.5" y2="80.8" stroke="#cec6c0" stroke-width="0.6"/><line x1="35" y1="80.8" x2="99.5" y2="83" stroke="#d4ccc6" stroke-width="0.6"/><line x1="35" y1="82.7" x2="99.5" y2="85.2" stroke="#d4ccc6" stroke-width="0.6"/><line x1="35" y1="84.6" x2="99.5" y2="87.5" stroke="#d4ccc6" stroke-width="0.6"/><line x1="35" y1="86.5" x2="99.5" y2="89.8" stroke="#cec6c0" stroke-width="0.6"/><line x1="35" y1="88.5" x2="99.5" y2="92" stroke="#cec6c0" stroke-width="0.6"/><line x1="35" y1="90.4" x2="99.5" y2="94.2" stroke="#d4ccc6" stroke-width="0.6"/><line x1="35" y1="92.3" x2="99.5" y2="96.5" stroke="#d4ccc6" stroke-width="0.6"/><line x1="35" y1="94.2" x2="99.5" y2="98.8" stroke="#ece6e0" stroke-width="0.6"/><line x1="35" y1="96.1" x2="99.5" y2="101" stroke="#d4ccc6" stroke-width="0.6"/><line x1="35" y1="98" x2="99.5" y2="103.2" stroke="#cec6c0" stroke-width="0.6"/><line x1="35" y1="99.9" x2="99.5" y2="105.5" stroke="#ece6e0" stroke-width="0.6"/><line x1="35" y1="101.8" x2="99.5" y2="107.8" stroke="#cec6c0" stroke-width="0.6"/><line x1="35" y1="103.7" x2="99.5" y2="110" stroke="#ece6e0" stroke-width="0.6"/><line x1="35" y1="105.6" x2="99.5" y2="112.2" stroke="#ece6e0" stroke-width="0.6"/><line x1="35" y1="107.5" x2="99.5" y2="114.5" stroke="#ece6e0" stroke-width="0.6"/><line x1="35" y1="109.5" x2="99.5" y2="116.8" stroke="#d4ccc6" stroke-width="0.6"/><line x1="35" y1="111.4" x2="99.5" y2="119" stroke="#d4ccc6" stroke-width="0.6"/><line x1="35" y1="113.3" x2="99.5" y2="121.2" stroke="#cec6c0" stroke-width="0.6"/><line x1="35" y1="115.2" x2="99.5" y2="123.5" stroke="#cec6c0" stroke-width="0.6"/><line x1="35" y1="117.1" x2="99.5" y2="125.8" stroke="#d4ccc6" stroke-width="0.6"/><polygon points="33,35 35.5,34.8 35.5,119.5 33,119" fill="#c4bdb4"/><polygon points="99,29 102,28.5 102,129 99,128.5" fill="#aaa398"/><polygon points="34,118.5 100,127.5 100,130 34,121" fill="#b8b1a8"/><polygon points="31.5,27 100,19.5 102,20 102,30 31.5,37" fill="#a39b8f"/><polygon points="31.5,24.5 98,17.5 102,20 31.5,27.5" fill="#c2bbb0"/><polygon points="31.5,35.5 102,28.5 102,30 31.5,37" fill="#8a8378"/></svg></div>
<div class="a im" id="i24" style="left:517px;top:283px;width:142px;height:142px;background:#eaeaea"><svg width="142" height="142" viewBox="0 0 142 142" shape-rendering="auto"><defs><linearGradient id="hg" x1="0" y1="0" x2="0.5" y2="1"><stop offset="0" stop-color="#ececec"/><stop offset="0.55" stop-color="#e4e4e4"/><stop offset="1" stop-color="#d6d6d6"/></linearGradient><filter id="hb" x="-50%" y="-50%" width="200%" height="200%"><feGaussianBlur stdDeviation="5"/></filter><filter id="hb2" x="-50%" y="-50%" width="200%" height="200%"><feGaussianBlur stdDeviation="1.2"/></filter><linearGradient id="arm" x1="0" y1="0" x2="0" y2="1"><stop offset="0" stop-color="#e8e8e8"/><stop offset="0.6" stop-color="#d4d4d4"/><stop offset="1" stop-color="#a8a8a8"/></linearGradient></defs><rect x="0" y="0" width="142" height="142" fill="url(#hg)"/><polygon points="86,80 106,76 112,104 98,118 82,104" fill="#a4a4a4" opacity="0.55" filter="url(#hb)"/><polygon points="101,74 112,75 112,82 101,80" fill="#767676" filter="url(#hb2)"/><polygon points="103.5,39 112.5,38 112.5,79 103.5,80" fill="#d2d2d2"/><polygon points="103.5,39 112.5,38 112.5,41 103.5,42" fill="#ececec"/><polygon points="101,41 103.5,39 103.5,80 101,80" fill="#b4b4b4"/><polygon points="90,52 102,46 108,49 108,71 98,77 90,76" fill="#d8d8d8"/><g transform="translate(64 79) rotate(-25)"><rect x="-42" y="-11" width="82" height="21" rx="9" fill="#a2a2a2"/><rect x="-41.5" y="-11" width="81" height="18.5" rx="8.5" fill="url(#arm)"/><ellipse cx="-31.5" cy="-2" rx="4.2" ry="6.6" fill="#ededed" stroke="#9a9a9a" stroke-width="0.9" transform="rotate(22 -31.5 -2)"/><ellipse cx="-19" cy="-2" rx="4.2" ry="6.6" fill="#ededed" stroke="#9a9a9a" stroke-width="0.9" transform="rotate(22 -19 -2)"/><ellipse cx="-6.5" cy="-2" rx="4.2" ry="6.6" fill="#ededed" stroke="#9a9a9a" stroke-width="0.9" transform="rotate(22 -6.5 -2)"/><ellipse cx="6" cy="-2" rx="4.2" ry="6.6" fill="#ededed" stroke="#9a9a9a" stroke-width="0.9" transform="rotate(22 6 -2)"/><ellipse cx="18.5" cy="-2" rx="4.2" ry="6.6" fill="#ededed" stroke="#9a9a9a" stroke-width="0.9" transform="rotate(22 18.5 -2)"/><ellipse cx="31" cy="-1" rx="4.5" ry="8.5" fill="#d8d8d8" stroke="#a0a0a0" stroke-width="0.8" transform="rotate(20 31 -1)"/></g></svg></div>
<div class="a im" id="i25" style="left:673px;top:283px;width:158px;height:142px;background:#eee"><svg width="158" height="142" viewBox="0 0 158 142" shape-rendering="auto"><defs><linearGradient id="bga" x1="0" y1="0" x2="0" y2="1"><stop offset="0" stop-color="#f0f0f0"/><stop offset="1" stop-color="#e2e2e2"/></linearGradient><filter id="bba" x="-50%" y="-50%" width="200%" height="200%"><feGaussianBlur stdDeviation="4"/></filter></defs><rect x="0" y="0" width="158" height="142" fill="url(#bga)"/><polygon points="32,100 135,114 148,106 140,130 40,124" fill="#b8b8b8" opacity="0.8" filter="url(#bba)"/><polygon points="12.7,64.4 133,75.7 135,111.5 32,97 12.7,91.2" fill="#f4f4f4"/><polygon points="133,75.7 148.7,67.5 148.7,103.3 135,111.5" fill="#e2e2e2"/><polygon points="32,96.5 135,111 135,112.2 32,97.7" fill="#a8a8a8"/><polygon points="135,111 148.7,102.8 148.7,104 135,112.2" fill="#a8a8a8"/><polygon points="12.7,21.5 133,27.6 133,75.7 12.7,64.4" fill="#7c7b89"/><polygon points="133,27.6 148.7,25.6 148.7,67.5 133,75.7" fill="#858490"/><polygon points="12.7,63.3 133,74.6 133,76.8 12.7,65.5" fill="#9a9488"/><polygon points="133,74.6 148.7,66.4 148.7,68.6 133,76.8" fill="#9a9488"/><rect x="32.1" y="22.5" width="1.8" height="43.8" fill="#8e887c"/><rect x="69.1" y="24.4" width="1.8" height="45.4" fill="#8e887c"/><rect x="107.1" y="26.3" width="1.8" height="47" fill="#8e887c"/><rect x="12.1" y="21.5" width="1.6" height="42.9" fill="#8e887c"/><polygon points="132,27.6 134,27.6 134,75.7 132,75.7" fill="#8e887c"/><rect x="147.5" y="25.6" width="1.6" height="41.9" fill="#8e887c"/><polygon points="12.7,20.7 133,26.8 133,28.4 12.7,22.3" fill="#a29c92"/><polygon points="133,26.8 148.7,24.8 148.7,26.4 133,28.4" fill="#a29c92"/><polygon points="12.1,20.7 29.7,17.3 34.7,17 34.7,21 29.7,22.3 12.1,22.3" fill="#a29c92"/></svg></div>
<div class="a im" id="i26" style="left:831px;top:283px;width:142px;height:142px;background:#fff"><svg width="142" height="142" viewBox="0 0 142 142" shape-rendering="auto"><defs><filter id="tb"><feGaussianBlur stdDeviation="0.3"/></filter></defs><rect x="0" y="0" width="142" height="142" fill="#ffffff"/><circle cx="137" cy="68.5" r="1.9" fill="#7e7e7e"/><circle cx="137.3" cy="68.8" r="0.8" fill="#c8c8c8"/><circle cx="76" cy="27.1" r="1.3" fill="#8e8e8e"/><circle cx="129.7" cy="74.2" r="1.9" fill="#7e7e7e"/><circle cx="130" cy="74.5" r="0.8" fill="#c8c8c8"/><circle cx="82.7" cy="31" r="1.3" fill="#8e8e8e"/><circle cx="122.5" cy="79.9" r="1.9" fill="#7e7e7e"/><circle cx="122.8" cy="80.2" r="0.8" fill="#c8c8c8"/><circle cx="89.4" cy="34.9" r="1.3" fill="#8e8e8e"/><circle cx="115.2" cy="85.7" r="1.9" fill="#7e7e7e"/><circle cx="115.5" cy="86" r="0.8" fill="#c8c8c8"/><circle cx="96.2" cy="38.8" r="1.3" fill="#8e8e8e"/><circle cx="108" cy="91.4" r="1.9" fill="#7e7e7e"/><circle cx="108.3" cy="91.7" r="0.8" fill="#c8c8c8"/><circle cx="102.9" cy="42.7" r="1.3" fill="#8e8e8e"/><circle cx="100.7" cy="97.1" r="1.9" fill="#7e7e7e"/><circle cx="101" cy="97.4" r="0.8" fill="#c8c8c8"/><circle cx="109.7" cy="46.5" r="1.3" fill="#8e8e8e"/><circle cx="93.5" cy="102.8" r="1.9" fill="#7e7e7e"/><circle cx="93.8" cy="103.1" r="0.8" fill="#c8c8c8"/><circle cx="116.4" cy="50.4" r="1.3" fill="#8e8e8e"/><circle cx="86.2" cy="108.6" r="1.9" fill="#7e7e7e"/><circle cx="86.5" cy="108.9" r="0.8" fill="#c8c8c8"/><circle cx="123.2" cy="54.3" r="1.3" fill="#8e8e8e"/><circle cx="79" cy="114.3" r="1.9" fill="#7e7e7e"/><circle cx="79.3" cy="114.6" r="0.8" fill="#c8c8c8"/><circle cx="129.9" cy="58.2" r="1.3" fill="#8e8e8e"/><circle cx="71.7" cy="120" r="1.9" fill="#7e7e7e"/><circle cx="72" cy="120.3" r="0.8" fill="#c8c8c8"/><circle cx="136.6" cy="62.1" r="1.3" fill="#8e8e8e"/><polygon points="71.6,25.6 139,64.4 66.5,121.7 2,63.4" fill="#5c5c5c" stroke="#707070" stroke-width="0.8"/><polygon points="71.6,26 84.4,33.4 71.1,41.3 58.4,33.2" fill="#aeaeae"/><polygon points="57.7,33.6 70.4,41.7 57,49.6 44.4,40.8" fill="#ababab"/><polygon points="43.7,41.1 56.3,50 43,57.9 30.5,48.3" fill="#aeaeae"/><polygon points="29.8,48.7 42.3,58.3 29,66.2 16.6,55.9" fill="#aeaeae"/><polygon points="15.9,56.3 28.3,66.7 14.9,74.6 2.7,63.5" fill="#aeaeae"/><polygon points="85.1,33.8 97.9,41.2 84.4,49.8 71.7,41.7" fill="#b3b3b3"/><polygon points="71,42.1 83.7,50.3 70.3,58.9 57.7,50.1" fill="#b1b1b1"/><polygon points="57,50.5 69.6,59.4 56.1,68 43.7,58.4" fill="#b3b3b3"/><polygon points="42.9,58.8 55.4,68.5 42,77.1 29.6,66.8" fill="#b1b1b1"/><polygon points="28.9,67.2 41.3,77.6 27.8,86.2 15.6,75.1" fill="#b3b3b3"/><polygon points="98.5,41.5 111.3,48.9 97.8,58.3 85.1,50.2" fill="#ababab"/><polygon points="84.4,50.7 97.1,58.8 83.5,68.2 70.9,59.4" fill="#ababab"/><polygon points="70.2,59.8 82.8,68.7 69.3,78.1 56.8,68.5" fill="#b3b3b3"/><polygon points="56.1,69 68.6,78.6 55,88 42.6,77.6" fill="#b1b1b1"/><polygon points="41.9,78.1 54.3,88.5 40.7,97.8 28.5,86.8" fill="#b1b1b1"/><polygon points="112,49.3 124.8,56.7 111.2,66.8 98.5,58.7" fill="#aeaeae"/><polygon points="97.7,59.2 110.4,67.4 96.8,77.5 84.2,68.7" fill="#ababab"/><polygon points="83.5,69.2 96.1,78 82.4,88.2 69.9,78.6" fill="#b3b3b3"/><polygon points="69.2,79.1 81.7,88.7 68,98.8 55.7,88.5" fill="#b1b1b1"/><polygon points="54.9,89 67.3,99.4 53.6,109.5 41.4,98.4" fill="#ababab"/><polygon points="125.5,57.1 138.3,64.5 124.5,75.4 111.8,67.3" fill="#ababab"/><polygon points="111.1,67.8 123.8,75.9 110,86.8 97.4,78" fill="#aeaeae"/><polygon points="96.7,78.5 109.3,87.4 95.5,98.2 83.1,88.7" fill="#ababab"/><polygon points="82.3,89.2 94.8,98.8 81,109.7 68.7,99.4" fill="#aeaeae"/><polygon points="67.9,99.9 80.3,110.3 66.5,121.1 54.3,110.1" fill="#aeaeae"/></svg></div>

<!-- ROW 2 captions -->
<div class="a c" style="transform:scaleX(1.237);transform-origin:0 0;width:49.5px;overflow:hidden;left:51px;top:426px">外部:<b class="sp"></b>ソフトブラック</div>
<div class="a c" style="transform:scaleX(1.320);transform-origin:0 0;width:49.5px;overflow:hidden;left:207px;top:426px">外部:<b class="sp"></b>マイルドステン</div>
<div class="a c" style="transform:scaleX(1.320);transform-origin:0 0;width:49.5px;overflow:hidden;left:362px;top:426px">外部:<b class="sp"></b>マイルドステン</div>
<div class="a c" style="transform:scaleX(1.225);transform-origin:0 0;width:41.0px;overflow:hidden;left:518px;top:426px">KGステンカラー</div>
<div class="a c" style="transform:scaleX(1.331);transform-origin:0 0;width:128.0px;overflow:hidden;left:674px;top:426px">合せガラス:<b class="sp"></b>グレイッシュホワイト／笠木:<b class="sp"></b>サテングレー</div>
<div class="a c" style="transform:scaleX(1.211);transform-origin:0 0;width:81.5px;overflow:hidden;left:873px;top:426px">床材:<b class="sp"></b>ライカロック　ライトグレー</div>

<!-- ROW 3 titles -->
<div class="a t" style="transform:scaleX(1.093);transform-origin:0 0;width:146.5px;overflow:hidden;left:51px;top:468px"><i class="sq"></i>KS／ASバルコニー　Gスクリーン MG（外壁）</div>
<div class="a t" style="transform:scaleX(1.085);transform-origin:0 0;width:130.5px;overflow:hidden;left:362px;top:468px"><i class="sq"></i>ASバルコニー　Gスクリーン MG（外壁）</div>
<div class="a t" style="transform:scaleX(1.302);transform-origin:0 0;width:65.5px;overflow:hidden;left:832px;top:468px"><i class="sq"></i>1階共用廊下床タイル</div>

<!-- ROW 3 images -->
<div class="a im" id="i31" style="left:51px;top:477px;width:155px;height:141px;background:#e8e8e8"><svg width="155" height="141" viewBox="0 0 155 141" shape-rendering="auto"><defs><linearGradient id="bgb" x1="0" y1="0" x2="0" y2="1"><stop offset="0" stop-color="#ececec"/><stop offset="1" stop-color="#e2e2e2"/></linearGradient><filter id="bbb" x="-50%" y="-50%" width="200%" height="200%"><feGaussianBlur stdDeviation="4"/></filter></defs><rect x="0" y="0" width="155" height="141" fill="url(#bgb)"/><polygon points="30,95 133,108 147,100 140,125 40,118" fill="#b8b8b8" opacity="0.8" filter="url(#bbb)"/><polygon points="12.9,80 133,93 133,104.5 12.9,90 12.9,90" fill="#f2f2f2"/><polygon points="133,93 147.2,85 147.2,96 133,104.5" fill="#e2e2e2"/><polygon points="12.9,89.5 133,104 133,105.2 12.9,90.7" fill="#a8a8a8"/><polygon points="133,104 147.2,95.5 147.2,96.7 133,105.2" fill="#a8a8a8"/><polygon points="12.9,30.7 133,40.9 133,93 12.9,80" fill="#7a7a93"/><polygon points="133,40.9 147.2,35.8 147.2,85 133,93" fill="#72728a"/><polygon points="12.9,78.9 133,91.9 133,94.1 12.9,81.1" fill="#6e6e6e"/><polygon points="133,91.9 147.2,83.9 147.2,86.1 133,94.1" fill="#6e6e6e"/><rect x="31.8" y="32.4" width="1.8" height="49.8" fill="#6a6a76"/><rect x="69.7" y="35.6" width="1.8" height="50.6" fill="#6a6a76"/><rect x="108.5" y="38.9" width="1.8" height="51.5" fill="#6a6a76"/><rect x="12.3" y="30.7" width="1.6" height="49.3" fill="#6a6a76"/><polygon points="132,40.9 134,40.9 134,93 132,93" fill="#6a6a76"/><rect x="146" y="35.8" width="1.6" height="49.2" fill="#6a6a76"/><polygon points="12.9,29.3 133,39.5 133,42.3 12.9,32.1" fill="#6e6e70"/><polygon points="133,39.5 147.2,34.4 147.2,37.2 133,42.3" fill="#6e6e70"/><polygon points="12.3,29.3 29.9,26.5 34.9,26.2 34.9,30.2 29.9,31.5 12.3,32.1" fill="#6e6e70"/></svg></div>
<div class="a im" id="i32" style="left:206px;top:477px;width:142px;height:141px;background:#fff"><svg width="142" height="141" viewBox="0 0 142 141" shape-rendering="auto"><rect x="0" y="0" width="142" height="141" fill="#ffffff"/><polygon points="89,15.9 134.1,83.6 37.9,120.4 37.4,118.6 132.5,83" fill="#1e1e1e"/><g transform="translate(129.1 84.3) rotate(-37)"><rect x="-1.6" y="0.5" width="3.2" height="3.4" fill="#2e2e2e"/><rect x="-0.6" y="1.3" width="1.2" height="1.8" fill="#9a9a9a"/></g><g transform="translate(122.3 86.8) rotate(-37)"><rect x="-1.6" y="0.5" width="3.2" height="3.4" fill="#2e2e2e"/><rect x="-0.6" y="1.3" width="1.2" height="1.8" fill="#9a9a9a"/></g><g transform="translate(115.5 89.4) rotate(-37)"><rect x="-1.6" y="0.5" width="3.2" height="3.4" fill="#2e2e2e"/><rect x="-0.6" y="1.3" width="1.2" height="1.8" fill="#9a9a9a"/></g><g transform="translate(108.7 91.9) rotate(-37)"><rect x="-1.6" y="0.5" width="3.2" height="3.4" fill="#2e2e2e"/><rect x="-0.6" y="1.3" width="1.2" height="1.8" fill="#9a9a9a"/></g><g transform="translate(101.9 94.4) rotate(-37)"><rect x="-1.6" y="0.5" width="3.2" height="3.4" fill="#2e2e2e"/><rect x="-0.6" y="1.3" width="1.2" height="1.8" fill="#9a9a9a"/></g><g transform="translate(95.1 97) rotate(-37)"><rect x="-1.6" y="0.5" width="3.2" height="3.4" fill="#2e2e2e"/><rect x="-0.6" y="1.3" width="1.2" height="1.8" fill="#9a9a9a"/></g><g transform="translate(74.8 104.6) rotate(-37)"><rect x="-1.6" y="0.5" width="3.2" height="3.4" fill="#2e2e2e"/><rect x="-0.6" y="1.3" width="1.2" height="1.8" fill="#9a9a9a"/></g><g transform="translate(68 107.2) rotate(-37)"><rect x="-1.6" y="0.5" width="3.2" height="3.4" fill="#2e2e2e"/><rect x="-0.6" y="1.3" width="1.2" height="1.8" fill="#9a9a9a"/></g><g transform="translate(61.2 109.7) rotate(-37)"><rect x="-1.6" y="0.5" width="3.2" height="3.4" fill="#2e2e2e"/><rect x="-0.6" y="1.3" width="1.2" height="1.8" fill="#9a9a9a"/></g><g transform="translate(54.4 112.2) rotate(-37)"><rect x="-1.6" y="0.5" width="3.2" height="3.4" fill="#2e2e2e"/><rect x="-0.6" y="1.3" width="1.2" height="1.8" fill="#9a9a9a"/></g><g transform="translate(47.6 114.8) rotate(-37)"><rect x="-1.6" y="0.5" width="3.2" height="3.4" fill="#2e2e2e"/><rect x="-0.6" y="1.3" width="1.2" height="1.8" fill="#9a9a9a"/></g><g transform="translate(40.8 117.3) rotate(-37)"><rect x="-1.6" y="0.5" width="3.2" height="3.4" fill="#2e2e2e"/><rect x="-0.6" y="1.3" width="1.2" height="1.8" fill="#9a9a9a"/></g><g transform="translate(90.5 19.4) rotate(56)"><rect x="-1.3" y="-3" width="2.6" height="3" fill="#333"/></g><g transform="translate(94.5 25.5) rotate(56)"><rect x="-1.3" y="-3" width="2.6" height="3" fill="#333"/></g><g transform="translate(98.5 31.5) rotate(56)"><rect x="-1.3" y="-3" width="2.6" height="3" fill="#333"/></g><g transform="translate(102.5 37.6) rotate(56)"><rect x="-1.3" y="-3" width="2.6" height="3" fill="#333"/></g><g transform="translate(106.5 43.6) rotate(56)"><rect x="-1.3" y="-3" width="2.6" height="3" fill="#333"/></g><g transform="translate(110.5 49.7) rotate(56)"><rect x="-1.3" y="-3" width="2.6" height="3" fill="#333"/></g><g transform="translate(114.5 55.8) rotate(56)"><rect x="-1.3" y="-3" width="2.6" height="3" fill="#333"/></g><g transform="translate(118.5 61.8) rotate(56)"><rect x="-1.3" y="-3" width="2.6" height="3" fill="#333"/></g><g transform="translate(122.5 67.9) rotate(56)"><rect x="-1.3" y="-3" width="2.6" height="3" fill="#333"/></g><g transform="translate(126.5 73.9) rotate(56)"><rect x="-1.3" y="-3" width="2.6" height="3" fill="#333"/></g><g transform="translate(130.5 80) rotate(56)"><rect x="-1.3" y="-3" width="2.6" height="3" fill="#333"/></g><polygon points="8.8,40 88.5,16.4 132.5,83 37.4,118.6" fill="#e8e4dc"/><circle cx="59.2" cy="84.8" r="1.5" fill="#cfc9bf" opacity="0.45"/><circle cx="85.8" cy="71.7" r="1.5" fill="#cfc9bf" opacity="0.45"/><circle cx="88.9" cy="52.5" r="1" fill="#cfc9bf" opacity="0.45"/><circle cx="82.1" cy="44.1" r="0.6" fill="#cfc9bf" opacity="0.45"/><circle cx="89" cy="82.9" r="0.8" fill="#cfc9bf" opacity="0.45"/><circle cx="98.2" cy="86.7" r="0.6" fill="#cfc9bf" opacity="0.45"/><circle cx="34.7" cy="74.7" r="0.9" fill="#cfc9bf" opacity="0.45"/><circle cx="127.5" cy="84.6" r="1" fill="#cfc9bf" opacity="0.45"/><circle cx="97.8" cy="64.9" r="0.7" fill="#cfc9bf" opacity="0.45"/><circle cx="93.9" cy="28.7" r="0.6" fill="#cfc9bf" opacity="0.45"/><circle cx="45.5" cy="30.6" r="1" fill="#cfc9bf" opacity="0.45"/><circle cx="75" cy="100.6" r="1" fill="#cfc9bf" opacity="0.45"/><circle cx="109" cy="73.3" r="1.1" fill="#cfc9bf" opacity="0.45"/><circle cx="37.6" cy="57.5" r="1" fill="#cfc9bf" opacity="0.45"/><circle cx="62.7" cy="78.4" r="1.1" fill="#cfc9bf" opacity="0.45"/><circle cx="54.9" cy="77.7" r="1.6" fill="#cfc9bf" opacity="0.45"/><circle cx="35.6" cy="60.8" r="0.5" fill="#cfc9bf" opacity="0.45"/><circle cx="17.9" cy="42.1" r="1" fill="#cfc9bf" opacity="0.45"/><circle cx="104.4" cy="68.1" r="1.6" fill="#cfc9bf" opacity="0.45"/><circle cx="99.8" cy="60.4" r="1.1" fill="#cfc9bf" opacity="0.45"/><circle cx="20.8" cy="69.8" r="0.8" fill="#cfc9bf" opacity="0.45"/><circle cx="60.8" cy="30" r="1.1" fill="#cfc9bf" opacity="0.45"/><circle cx="55.6" cy="67.6" r="0.9" fill="#cfc9bf" opacity="0.45"/><circle cx="39" cy="94.2" r="1.4" fill="#cfc9bf" opacity="0.45"/><circle cx="60.9" cy="34.2" r="1.2" fill="#cfc9bf" opacity="0.45"/><circle cx="119.7" cy="86.7" r="1.3" fill="#cfc9bf" opacity="0.45"/><circle cx="38.2" cy="107.5" r="1.2" fill="#cfc9bf" opacity="0.45"/><circle cx="61.1" cy="102.7" r="1.4" fill="#cfc9bf" opacity="0.45"/><circle cx="90.6" cy="35.7" r="1.1" fill="#cfc9bf" opacity="0.45"/><circle cx="49.2" cy="53" r="1.3" fill="#cfc9bf" opacity="0.45"/><circle cx="70.6" cy="49.1" r="1.1" fill="#cfc9bf" opacity="0.45"/><circle cx="107.1" cy="56.3" r="1.5" fill="#cfc9bf" opacity="0.45"/><circle cx="90.9" cy="97.9" r="0.5" fill="#cfc9bf" opacity="0.45"/><circle cx="65.2" cy="69.5" r="1.3" fill="#cfc9bf" opacity="0.45"/><circle cx="113.1" cy="58.9" r="1" fill="#cfc9bf" opacity="0.45"/><circle cx="79.8" cy="62.9" r="1.3" fill="#cfc9bf" opacity="0.45"/><circle cx="84.9" cy="18.6" r="0.9" fill="#cfc9bf" opacity="0.45"/><circle cx="81.2" cy="23.4" r="1.4" fill="#cfc9bf" opacity="0.45"/><circle cx="30.1" cy="90" r="1.4" fill="#cfc9bf" opacity="0.45"/><circle cx="40.1" cy="63.3" r="0.7" fill="#cfc9bf" opacity="0.45"/><circle cx="85.8" cy="60.5" r="1.2" fill="#cfc9bf" opacity="0.45"/><circle cx="54.5" cy="76.1" r="1.5" fill="#cfc9bf" opacity="0.45"/><circle cx="109.5" cy="87.5" r="0.8" fill="#cfc9bf" opacity="0.45"/><circle cx="64" cy="55.7" r="0.9" fill="#cfc9bf" opacity="0.45"/><circle cx="80" cy="33.1" r="1.1" fill="#cfc9bf" opacity="0.45"/><circle cx="108.4" cy="86.6" r="0.5" fill="#cfc9bf" opacity="0.45"/><circle cx="46.5" cy="70.8" r="1.5" fill="#cfc9bf" opacity="0.45"/><circle cx="48" cy="100.6" r="0.9" fill="#cfc9bf" opacity="0.45"/><circle cx="86.8" cy="93.9" r="0.6" fill="#cfc9bf" opacity="0.45"/><circle cx="40.3" cy="43.9" r="0.6" fill="#cfc9bf" opacity="0.45"/><circle cx="56.3" cy="85.4" r="1.1" fill="#cfc9bf" opacity="0.45"/><circle cx="42.9" cy="99" r="1.1" fill="#cfc9bf" opacity="0.45"/><circle cx="45.5" cy="99.7" r="1.4" fill="#cfc9bf" opacity="0.45"/><circle cx="56.1" cy="106.3" r="1.4" fill="#cfc9bf" opacity="0.45"/><circle cx="27.1" cy="34.7" r="1.5" fill="#cfc9bf" opacity="0.45"/><circle cx="78.7" cy="27.2" r="1.3" fill="#cfc9bf" opacity="0.45"/><circle cx="96.1" cy="65.7" r="1.4" fill="#cfc9bf" opacity="0.45"/><circle cx="101.6" cy="38.6" r="1.4" fill="#cfc9bf" opacity="0.45"/><circle cx="95.6" cy="39.4" r="1.3" fill="#cfc9bf" opacity="0.45"/><circle cx="96.6" cy="83.6" r="1.1" fill="#cfc9bf" opacity="0.45"/><circle cx="39" cy="52.4" r="1.1" fill="#cfc9bf" opacity="0.45"/><circle cx="46" cy="103" r="1.5" fill="#cfc9bf" opacity="0.45"/><circle cx="50.7" cy="87.1" r="1.2" fill="#cfc9bf" opacity="0.45"/><circle cx="42.2" cy="97.2" r="1.3" fill="#cfc9bf" opacity="0.45"/><circle cx="36.5" cy="40.1" r="0.8" fill="#cfc9bf" opacity="0.45"/><circle cx="89.2" cy="54.2" r="1.4" fill="#cfc9bf" opacity="0.45"/><circle cx="24.8" cy="44.4" r="0.9" fill="#cfc9bf" opacity="0.45"/><circle cx="85.7" cy="30.2" r="0.6" fill="#cfc9bf" opacity="0.45"/><circle cx="72.5" cy="28.6" r="1.2" fill="#cfc9bf" opacity="0.45"/><circle cx="22.8" cy="57.2" r="1.2" fill="#cfc9bf" opacity="0.45"/><circle cx="95.6" cy="47.3" r="1" fill="#cfc9bf" opacity="0.45"/><circle cx="21.2" cy="65.9" r="0.8" fill="#cfc9bf" opacity="0.45"/><circle cx="100.8" cy="70.8" r="1.4" fill="#cfc9bf" opacity="0.45"/><circle cx="76.9" cy="78" r="0.6" fill="#cfc9bf" opacity="0.45"/><circle cx="49.6" cy="52.6" r="0.8" fill="#cfc9bf" opacity="0.45"/><circle cx="76.3" cy="37.5" r="0.9" fill="#cfc9bf" opacity="0.45"/><circle cx="59.8" cy="98.3" r="1.2" fill="#cfc9bf" opacity="0.45"/><circle cx="60.8" cy="56.3" r="1.5" fill="#cfc9bf" opacity="0.45"/><circle cx="103" cy="48.1" r="1.1" fill="#cfc9bf" opacity="0.45"/><circle cx="88.3" cy="37.1" r="0.8" fill="#cfc9bf" opacity="0.45"/><circle cx="32.2" cy="76.4" r="1.3" fill="#cfc9bf" opacity="0.45"/><circle cx="34.7" cy="69.5" r="1.6" fill="#cfc9bf" opacity="0.45"/><circle cx="60.9" cy="56.5" r="1.4" fill="#cfc9bf" opacity="0.45"/><circle cx="95.8" cy="44.5" r="0.6" fill="#cfc9bf" opacity="0.45"/><circle cx="88" cy="77.5" r="1.5" fill="#cfc9bf" opacity="0.45"/><circle cx="73.3" cy="46.2" r="1.1" fill="#cfc9bf" opacity="0.45"/><circle cx="46.5" cy="66.7" r="1" fill="#cfc9bf" opacity="0.45"/><circle cx="120.1" cy="79.8" r="1.5" fill="#cfc9bf" opacity="0.45"/><circle cx="81.6" cy="99" r="0.7" fill="#cfc9bf" opacity="0.45"/><circle cx="109.6" cy="61.5" r="1.5" fill="#cfc9bf" opacity="0.45"/><circle cx="76.4" cy="103.2" r="0.5" fill="#cfc9bf" opacity="0.45"/><circle cx="110.5" cy="76.1" r="0.9" fill="#cfc9bf" opacity="0.45"/><circle cx="83.7" cy="35.1" r="1.3" fill="#cfc9bf" opacity="0.45"/><circle cx="60.9" cy="58.9" r="0.7" fill="#cfc9bf" opacity="0.45"/><circle cx="102.5" cy="71.6" r="0.6" fill="#cfc9bf" opacity="0.45"/><circle cx="96.4" cy="31.7" r="0.9" fill="#cfc9bf" opacity="0.45"/><circle cx="62" cy="72.7" r="1.5" fill="#cfc9bf" opacity="0.45"/><circle cx="111.5" cy="60.3" r="0.9" fill="#cfc9bf" opacity="0.45"/><circle cx="19.4" cy="42.8" r="1.1" fill="#cfc9bf" opacity="0.45"/><circle cx="72.1" cy="58.3" r="1.6" fill="#cfc9bf" opacity="0.45"/><circle cx="54" cy="56.1" r="1" fill="#cfc9bf" opacity="0.45"/><circle cx="51.8" cy="107.8" r="1.2" fill="#cfc9bf" opacity="0.45"/><circle cx="67.8" cy="57.9" r="0.8" fill="#cfc9bf" opacity="0.45"/><circle cx="50.5" cy="69.5" r="1" fill="#cfc9bf" opacity="0.45"/><circle cx="111.4" cy="54.5" r="0.7" fill="#cfc9bf" opacity="0.45"/><circle cx="17.8" cy="51.1" r="0.9" fill="#cfc9bf" opacity="0.45"/><circle cx="107.3" cy="83.1" r="0.8" fill="#cfc9bf" opacity="0.45"/><circle cx="88.9" cy="52.2" r="1.1" fill="#cfc9bf" opacity="0.45"/><circle cx="52.8" cy="30.5" r="0.6" fill="#cfc9bf" opacity="0.45"/><circle cx="88.8" cy="72.9" r="0.9" fill="#cfc9bf" opacity="0.45"/><circle cx="117.1" cy="73.7" r="0.8" fill="#cfc9bf" opacity="0.45"/><circle cx="30.5" cy="81.5" r="1.2" fill="#cfc9bf" opacity="0.45"/><circle cx="28.1" cy="38" r="1" fill="#cfc9bf" opacity="0.45"/><circle cx="33" cy="96.8" r="1.2" fill="#cfc9bf" opacity="0.45"/><circle cx="45.7" cy="66.9" r="0.8" fill="#cfc9bf" opacity="0.45"/><circle cx="29.3" cy="49.5" r="1.4" fill="#cfc9bf" opacity="0.45"/><circle cx="70.4" cy="81.6" r="0.9" fill="#cfc9bf" opacity="0.45"/><circle cx="97.5" cy="62" r="1.2" fill="#cfc9bf" opacity="0.45"/><circle cx="59.6" cy="72.2" r="0.7" fill="#cfc9bf" opacity="0.45"/><circle cx="115.7" cy="62" r="1.1" fill="#cfc9bf" opacity="0.45"/><circle cx="63.6" cy="32" r="0.9" fill="#cfc9bf" opacity="0.45"/><circle cx="54.3" cy="98.5" r="0.5" fill="#cfc9bf" opacity="0.45"/><circle cx="75" cy="93.1" r="1.4" fill="#cfc9bf" opacity="0.45"/><circle cx="78.1" cy="44.1" r="0.8" fill="#cfc9bf" opacity="0.45"/><circle cx="76.7" cy="44.3" r="1.3" fill="#cfc9bf" opacity="0.45"/><circle cx="62.5" cy="88.3" r="1.1" fill="#cfc9bf" opacity="0.45"/><circle cx="114.4" cy="88.6" r="0.9" fill="#cfc9bf" opacity="0.45"/><circle cx="87.9" cy="17.4" r="1.5" fill="#cfc9bf" opacity="0.45"/><circle cx="27" cy="82" r="0.9" fill="#cfc9bf" opacity="0.45"/><circle cx="82.9" cy="43.7" r="0.7" fill="#cfc9bf" opacity="0.45"/><circle cx="93.7" cy="59.6" r="1.3" fill="#cfc9bf" opacity="0.45"/><circle cx="49.1" cy="31.1" r="1.3" fill="#cfc9bf" opacity="0.45"/><circle cx="41.3" cy="70.7" r="0.5" fill="#cfc9bf" opacity="0.45"/><circle cx="51.1" cy="84.1" r="1.3" fill="#cfc9bf" opacity="0.45"/><circle cx="76.5" cy="56.4" r="1.3" fill="#cfc9bf" opacity="0.45"/><circle cx="70.1" cy="38.8" r="1.1" fill="#cfc9bf" opacity="0.45"/><circle cx="84" cy="77.9" r="0.7" fill="#cfc9bf" opacity="0.45"/><circle cx="45" cy="58.3" r="0.6" fill="#cfc9bf" opacity="0.45"/><circle cx="61.4" cy="86.1" r="1.1" fill="#cfc9bf" opacity="0.45"/><circle cx="45.5" cy="91.9" r="0.6" fill="#cfc9bf" opacity="0.45"/><circle cx="74.6" cy="32.6" r="0.6" fill="#cfc9bf" opacity="0.45"/><circle cx="45.6" cy="73" r="0.8" fill="#cfc9bf" opacity="0.45"/><circle cx="118.9" cy="82.9" r="0.8" fill="#cfc9bf" opacity="0.45"/><circle cx="96.5" cy="70.7" r="1.1" fill="#cfc9bf" opacity="0.45"/><circle cx="60" cy="105.7" r="1.6" fill="#cfc9bf" opacity="0.45"/><circle cx="19.4" cy="65.6" r="0.9" fill="#cfc9bf" opacity="0.45"/><circle cx="38.2" cy="68.1" r="1.5" fill="#cfc9bf" opacity="0.45"/><circle cx="34.9" cy="104.9" r="0.8" fill="#cfc9bf" opacity="0.45"/><circle cx="35.8" cy="110.2" r="0.8" fill="#cfc9bf" opacity="0.45"/><circle cx="29.4" cy="43.9" r="0.9" fill="#cfc9bf" opacity="0.45"/><line x1="48.6" y1="28.2" x2="85" y2="100.8" stroke="#4a4a4a" stroke-width="0.9"/><line x1="23.1" y1="79.3" x2="110.5" y2="49.7" stroke="#4a4a4a" stroke-width="0.9"/></svg></div>
<div class="a im" id="i33" style="left:362px;top:477px;width:156px;height:141px;background:#e8e8e8"><svg width="156" height="141" viewBox="0 0 156 141" shape-rendering="auto"><defs><linearGradient id="bgc" x1="0" y1="0" x2="0" y2="1"><stop offset="0" stop-color="#ececec"/><stop offset="1" stop-color="#e2e2e2"/></linearGradient><filter id="bbc" x="-50%" y="-50%" width="200%" height="200%"><feGaussianBlur stdDeviation="4"/></filter></defs><rect x="0" y="0" width="156" height="141" fill="url(#bgc)"/><polygon points="30,94 131,107 145,100 138,125 40,118" fill="#b8b8b8" opacity="0.8" filter="url(#bbc)"/><polygon points="11,79 131,92.5 131,104 11,89 11,89" fill="#f2f2f2"/><polygon points="131,92.5 145.5,85 145.5,96 131,104" fill="#e2e2e2"/><polygon points="11,88.5 131,103.5 131,104.7 11,89.7" fill="#a8a8a8"/><polygon points="131,103.5 145.5,95.5 145.5,96.7 131,104.7" fill="#a8a8a8"/><polygon points="11,31.5 131,41.5 131,92.5 11,79" fill="#c4d4dc"/><polygon points="131,41.5 145.5,35.8 145.5,85 131,92.5" fill="#bccbd3"/><polygon points="11,77.9 131,91.4 131,93.6 11,80.1" fill="#8a8a88"/><polygon points="131,91.4 145.5,83.9 145.5,86.1 131,93.6" fill="#8a8a88"/><rect x="30.1" y="33.2" width="1.8" height="48.1" fill="#8a8a88"/><rect x="67.1" y="36.2" width="1.8" height="49.2" fill="#8a8a88"/><rect x="106.6" y="39.5" width="1.8" height="50.3" fill="#8a8a88"/><rect x="10.4" y="31.5" width="1.6" height="47.5" fill="#8a8a88"/><polygon points="130,41.5 132,41.5 132,92.5 130,92.5" fill="#8a8a88"/><rect x="144.3" y="35.8" width="1.6" height="49.2" fill="#8a8a88"/><polygon points="11,30.4 131,40.4 131,42.6 11,32.6" fill="#8a8a88"/><polygon points="131,40.4 145.5,34.7 145.5,36.9 131,42.6" fill="#8a8a88"/><polygon points="10.4,30.4 28,27.3 33,27 33,31 28,32.3 10.4,32.6" fill="#8a8a88"/></svg></div>
<div class="a im" id="i34" style="left:518px;top:477px;width:141px;height:141px;background:#fff"><svg width="141" height="141" viewBox="0 0 141 141" shape-rendering="auto"><rect x="0" y="0" width="141" height="141" fill="#ffffff"/><polygon points="89,15.9 134.1,83.6 37.9,120.4 37.4,118.6 132.5,83" fill="#1e1e1e"/><g transform="translate(129.1 84.3) rotate(-37)"><rect x="-1.6" y="0.5" width="3.2" height="3.4" fill="#2e2e2e"/><rect x="-0.6" y="1.3" width="1.2" height="1.8" fill="#9a9a9a"/></g><g transform="translate(122.3 86.8) rotate(-37)"><rect x="-1.6" y="0.5" width="3.2" height="3.4" fill="#2e2e2e"/><rect x="-0.6" y="1.3" width="1.2" height="1.8" fill="#9a9a9a"/></g><g transform="translate(115.5 89.4) rotate(-37)"><rect x="-1.6" y="0.5" width="3.2" height="3.4" fill="#2e2e2e"/><rect x="-0.6" y="1.3" width="1.2" height="1.8" fill="#9a9a9a"/></g><g transform="translate(108.7 91.9) rotate(-37)"><rect x="-1.6" y="0.5" width="3.2" height="3.4" fill="#2e2e2e"/><rect x="-0.6" y="1.3" width="1.2" height="1.8" fill="#9a9a9a"/></g><g transform="translate(101.9 94.4) rotate(-37)"><rect x="-1.6" y="0.5" width="3.2" height="3.4" fill="#2e2e2e"/><rect x="-0.6" y="1.3" width="1.2" height="1.8" fill="#9a9a9a"/></g><g transform="translate(95.1 97) rotate(-37)"><rect x="-1.6" y="0.5" width="3.2" height="3.4" fill="#2e2e2e"/><rect x="-0.6" y="1.3" width="1.2" height="1.8" fill="#9a9a9a"/></g><g transform="translate(74.8 104.6) rotate(-37)"><rect x="-1.6" y="0.5" width="3.2" height="3.4" fill="#2e2e2e"/><rect x="-0.6" y="1.3" width="1.2" height="1.8" fill="#9a9a9a"/></g><g transform="translate(68 107.2) rotate(-37)"><rect x="-1.6" y="0.5" width="3.2" height="3.4" fill="#2e2e2e"/><rect x="-0.6" y="1.3" width="1.2" height="1.8" fill="#9a9a9a"/></g><g transform="translate(61.2 109.7) rotate(-37)"><rect x="-1.6" y="0.5" width="3.2" height="3.4" fill="#2e2e2e"/><rect x="-0.6" y="1.3" width="1.2" height="1.8" fill="#9a9a9a"/></g><g transform="translate(54.4 112.2) rotate(-37)"><rect x="-1.6" y="0.5" width="3.2" height="3.4" fill="#2e2e2e"/><rect x="-0.6" y="1.3" width="1.2" height="1.8" fill="#9a9a9a"/></g><g transform="translate(47.6 114.8) rotate(-37)"><rect x="-1.6" y="0.5" width="3.2" height="3.4" fill="#2e2e2e"/><rect x="-0.6" y="1.3" width="1.2" height="1.8" fill="#9a9a9a"/></g><g transform="translate(40.8 117.3) rotate(-37)"><rect x="-1.6" y="0.5" width="3.2" height="3.4" fill="#2e2e2e"/><rect x="-0.6" y="1.3" width="1.2" height="1.8" fill="#9a9a9a"/></g><g transform="translate(90.5 19.4) rotate(56)"><rect x="-1.3" y="-3" width="2.6" height="3" fill="#333"/></g><g transform="translate(94.5 25.5) rotate(56)"><rect x="-1.3" y="-3" width="2.6" height="3" fill="#333"/></g><g transform="translate(98.5 31.5) rotate(56)"><rect x="-1.3" y="-3" width="2.6" height="3" fill="#333"/></g><g transform="translate(102.5 37.6) rotate(56)"><rect x="-1.3" y="-3" width="2.6" height="3" fill="#333"/></g><g transform="translate(106.5 43.6) rotate(56)"><rect x="-1.3" y="-3" width="2.6" height="3" fill="#333"/></g><g transform="translate(110.5 49.7) rotate(56)"><rect x="-1.3" y="-3" width="2.6" height="3" fill="#333"/></g><g transform="translate(114.5 55.8) rotate(56)"><rect x="-1.3" y="-3" width="2.6" height="3" fill="#333"/></g><g transform="translate(118.5 61.8) rotate(56)"><rect x="-1.3" y="-3" width="2.6" height="3" fill="#333"/></g><g transform="translate(122.5 67.9) rotate(56)"><rect x="-1.3" y="-3" width="2.6" height="3" fill="#333"/></g><g transform="translate(126.5 73.9) rotate(56)"><rect x="-1.3" y="-3" width="2.6" height="3" fill="#333"/></g><g transform="translate(130.5 80) rotate(56)"><rect x="-1.3" y="-3" width="2.6" height="3" fill="#333"/></g><polygon points="8.8,40 88.5,16.4 132.5,83 37.4,118.6" fill="#e8e4dc"/><circle cx="23.8" cy="51" r="0.8" fill="#cfc9bf" opacity="0.45"/><circle cx="71.6" cy="58.3" r="0.8" fill="#cfc9bf" opacity="0.45"/><circle cx="79.1" cy="83.5" r="1.3" fill="#cfc9bf" opacity="0.45"/><circle cx="67.3" cy="100.3" r="1.4" fill="#cfc9bf" opacity="0.45"/><circle cx="71.3" cy="60.9" r="0.9" fill="#cfc9bf" opacity="0.45"/><circle cx="46.6" cy="105" r="1.2" fill="#cfc9bf" opacity="0.45"/><circle cx="44.5" cy="109.3" r="1.5" fill="#cfc9bf" opacity="0.45"/><circle cx="31.9" cy="94" r="0.8" fill="#cfc9bf" opacity="0.45"/><circle cx="82.2" cy="87.6" r="0.9" fill="#cfc9bf" opacity="0.45"/><circle cx="72.6" cy="76.6" r="0.7" fill="#cfc9bf" opacity="0.45"/><circle cx="75" cy="55.4" r="1.6" fill="#cfc9bf" opacity="0.45"/><circle cx="46.1" cy="89.9" r="0.5" fill="#cfc9bf" opacity="0.45"/><circle cx="34.5" cy="42.4" r="0.7" fill="#cfc9bf" opacity="0.45"/><circle cx="57.3" cy="40.1" r="1.4" fill="#cfc9bf" opacity="0.45"/><circle cx="35.2" cy="86" r="1.4" fill="#cfc9bf" opacity="0.45"/><circle cx="25.5" cy="53.8" r="1.3" fill="#cfc9bf" opacity="0.45"/><circle cx="79.7" cy="96.9" r="0.9" fill="#cfc9bf" opacity="0.45"/><circle cx="73.8" cy="101.3" r="0.9" fill="#cfc9bf" opacity="0.45"/><circle cx="124.6" cy="76.9" r="0.7" fill="#cfc9bf" opacity="0.45"/><circle cx="87.1" cy="94.9" r="0.6" fill="#cfc9bf" opacity="0.45"/><circle cx="108.7" cy="72.9" r="1.3" fill="#cfc9bf" opacity="0.45"/><circle cx="60.5" cy="33" r="1.6" fill="#cfc9bf" opacity="0.45"/><circle cx="40.6" cy="98.2" r="1.3" fill="#cfc9bf" opacity="0.45"/><circle cx="57" cy="83.7" r="1" fill="#cfc9bf" opacity="0.45"/><circle cx="70.4" cy="25.3" r="1.5" fill="#cfc9bf" opacity="0.45"/><circle cx="67.2" cy="90.4" r="1" fill="#cfc9bf" opacity="0.45"/><circle cx="85.9" cy="41.6" r="1.1" fill="#cfc9bf" opacity="0.45"/><circle cx="25" cy="77.7" r="0.6" fill="#cfc9bf" opacity="0.45"/><circle cx="105.6" cy="66" r="1" fill="#cfc9bf" opacity="0.45"/><circle cx="127.7" cy="80.4" r="1.6" fill="#cfc9bf" opacity="0.45"/><circle cx="36.4" cy="92.7" r="1.3" fill="#cfc9bf" opacity="0.45"/><circle cx="57.7" cy="26.8" r="1.5" fill="#cfc9bf" opacity="0.45"/><circle cx="64.8" cy="73.3" r="1.4" fill="#cfc9bf" opacity="0.45"/><circle cx="31.7" cy="35.7" r="1.5" fill="#cfc9bf" opacity="0.45"/><circle cx="31.7" cy="36.7" r="0.7" fill="#cfc9bf" opacity="0.45"/><circle cx="120.6" cy="65.8" r="0.7" fill="#cfc9bf" opacity="0.45"/><circle cx="48.2" cy="105.5" r="1.2" fill="#cfc9bf" opacity="0.45"/><circle cx="60.2" cy="35.6" r="1" fill="#cfc9bf" opacity="0.45"/><circle cx="84.4" cy="17.9" r="1" fill="#cfc9bf" opacity="0.45"/><circle cx="42.8" cy="116.4" r="0.6" fill="#cfc9bf" opacity="0.45"/><circle cx="121.2" cy="74" r="1.3" fill="#cfc9bf" opacity="0.45"/><circle cx="32.5" cy="93.3" r="1" fill="#cfc9bf" opacity="0.45"/><circle cx="53.2" cy="39" r="1.1" fill="#cfc9bf" opacity="0.45"/><circle cx="78.1" cy="30.1" r="1.5" fill="#cfc9bf" opacity="0.45"/><circle cx="51.6" cy="49.7" r="0.8" fill="#cfc9bf" opacity="0.45"/><circle cx="68.5" cy="76.5" r="1.1" fill="#cfc9bf" opacity="0.45"/><circle cx="101.4" cy="53.7" r="1.1" fill="#cfc9bf" opacity="0.45"/><circle cx="97" cy="31" r="0.5" fill="#cfc9bf" opacity="0.45"/><circle cx="45.5" cy="55.6" r="0.6" fill="#cfc9bf" opacity="0.45"/><circle cx="43.3" cy="32.7" r="1.5" fill="#cfc9bf" opacity="0.45"/><circle cx="79.1" cy="92.5" r="1.3" fill="#cfc9bf" opacity="0.45"/><circle cx="97.2" cy="75.8" r="0.8" fill="#cfc9bf" opacity="0.45"/><circle cx="75.1" cy="37.2" r="1.1" fill="#cfc9bf" opacity="0.45"/><circle cx="85.5" cy="81.4" r="0.7" fill="#cfc9bf" opacity="0.45"/><circle cx="64.2" cy="93.3" r="1.4" fill="#cfc9bf" opacity="0.45"/><circle cx="91.9" cy="24.8" r="0.7" fill="#cfc9bf" opacity="0.45"/><circle cx="39.2" cy="93.4" r="1.3" fill="#cfc9bf" opacity="0.45"/><circle cx="90.5" cy="79.9" r="1.1" fill="#cfc9bf" opacity="0.45"/><circle cx="87.9" cy="92.9" r="1.2" fill="#cfc9bf" opacity="0.45"/><circle cx="83.9" cy="66.2" r="1" fill="#cfc9bf" opacity="0.45"/><circle cx="92.2" cy="61.9" r="0.6" fill="#cfc9bf" opacity="0.45"/><circle cx="57.6" cy="60.9" r="1" fill="#cfc9bf" opacity="0.45"/><circle cx="67" cy="52.8" r="0.9" fill="#cfc9bf" opacity="0.45"/><circle cx="55.9" cy="57.2" r="1.6" fill="#cfc9bf" opacity="0.45"/><circle cx="16.5" cy="39.2" r="1.3" fill="#cfc9bf" opacity="0.45"/><circle cx="55.9" cy="63.8" r="1.2" fill="#cfc9bf" opacity="0.45"/><circle cx="46.2" cy="49.1" r="0.5" fill="#cfc9bf" opacity="0.45"/><circle cx="117.9" cy="83.3" r="0.8" fill="#cfc9bf" opacity="0.45"/><circle cx="57.5" cy="52.7" r="0.6" fill="#cfc9bf" opacity="0.45"/><circle cx="115.4" cy="75.7" r="0.8" fill="#cfc9bf" opacity="0.45"/><circle cx="51.8" cy="86.7" r="1.4" fill="#cfc9bf" opacity="0.45"/><circle cx="60.1" cy="57.2" r="0.8" fill="#cfc9bf" opacity="0.45"/><circle cx="107.7" cy="80.8" r="1.4" fill="#cfc9bf" opacity="0.45"/><circle cx="35.9" cy="83.2" r="1.6" fill="#cfc9bf" opacity="0.45"/><circle cx="84" cy="55.3" r="0.7" fill="#cfc9bf" opacity="0.45"/><circle cx="35.2" cy="95.6" r="0.6" fill="#cfc9bf" opacity="0.45"/><circle cx="100.6" cy="66.8" r="1" fill="#cfc9bf" opacity="0.45"/><circle cx="119.3" cy="82.3" r="1.2" fill="#cfc9bf" opacity="0.45"/><circle cx="34.5" cy="83.2" r="1" fill="#cfc9bf" opacity="0.45"/><circle cx="58.8" cy="104.3" r="1.3" fill="#cfc9bf" opacity="0.45"/><circle cx="25.5" cy="54.8" r="0.9" fill="#cfc9bf" opacity="0.45"/><circle cx="66.6" cy="49.8" r="1" fill="#cfc9bf" opacity="0.45"/><circle cx="81.1" cy="33.3" r="1.3" fill="#cfc9bf" opacity="0.45"/><circle cx="67" cy="102.7" r="1.5" fill="#cfc9bf" opacity="0.45"/><circle cx="55.3" cy="77.5" r="0.6" fill="#cfc9bf" opacity="0.45"/><circle cx="63.3" cy="76.2" r="1.2" fill="#cfc9bf" opacity="0.45"/><circle cx="37.3" cy="34.4" r="0.6" fill="#cfc9bf" opacity="0.45"/><circle cx="59.8" cy="39.1" r="0.8" fill="#cfc9bf" opacity="0.45"/><circle cx="92.4" cy="89.5" r="1.1" fill="#cfc9bf" opacity="0.45"/><circle cx="48.2" cy="78.3" r="0.8" fill="#cfc9bf" opacity="0.45"/><circle cx="77.5" cy="32.3" r="0.8" fill="#cfc9bf" opacity="0.45"/><circle cx="75.9" cy="96.2" r="0.7" fill="#cfc9bf" opacity="0.45"/><circle cx="28.3" cy="45.5" r="0.7" fill="#cfc9bf" opacity="0.45"/><circle cx="48.6" cy="61.6" r="1.3" fill="#cfc9bf" opacity="0.45"/><circle cx="57.5" cy="65.5" r="0.9" fill="#cfc9bf" opacity="0.45"/><circle cx="107.1" cy="84.3" r="1" fill="#cfc9bf" opacity="0.45"/><circle cx="93" cy="35.2" r="1.6" fill="#cfc9bf" opacity="0.45"/><circle cx="75.7" cy="76.9" r="0.9" fill="#cfc9bf" opacity="0.45"/><circle cx="34.9" cy="43.8" r="1.5" fill="#cfc9bf" opacity="0.45"/><circle cx="61.3" cy="83.4" r="1" fill="#cfc9bf" opacity="0.45"/><circle cx="58.4" cy="42.5" r="0.7" fill="#cfc9bf" opacity="0.45"/><circle cx="58.6" cy="82.9" r="1.1" fill="#cfc9bf" opacity="0.45"/><circle cx="29.3" cy="95.8" r="1" fill="#cfc9bf" opacity="0.45"/><circle cx="22" cy="58.6" r="0.7" fill="#cfc9bf" opacity="0.45"/><circle cx="97.1" cy="58.4" r="0.9" fill="#cfc9bf" opacity="0.45"/><circle cx="38.1" cy="56.2" r="0.8" fill="#cfc9bf" opacity="0.45"/><circle cx="63.2" cy="90.7" r="1.4" fill="#cfc9bf" opacity="0.45"/><circle cx="99.3" cy="85.7" r="1.2" fill="#cfc9bf" opacity="0.45"/><circle cx="19.2" cy="40.8" r="0.7" fill="#cfc9bf" opacity="0.45"/><circle cx="46.6" cy="73.8" r="1.4" fill="#cfc9bf" opacity="0.45"/><circle cx="71.6" cy="56.9" r="0.8" fill="#cfc9bf" opacity="0.45"/><circle cx="120" cy="67.2" r="0.9" fill="#cfc9bf" opacity="0.45"/><circle cx="41.2" cy="115.6" r="0.8" fill="#cfc9bf" opacity="0.45"/><circle cx="81.2" cy="28" r="1.2" fill="#cfc9bf" opacity="0.45"/><circle cx="67.5" cy="97.7" r="0.8" fill="#cfc9bf" opacity="0.45"/><circle cx="22.8" cy="53" r="1.4" fill="#cfc9bf" opacity="0.45"/><circle cx="114.9" cy="59.9" r="1.2" fill="#cfc9bf" opacity="0.45"/><circle cx="40.3" cy="53.8" r="0.6" fill="#cfc9bf" opacity="0.45"/><circle cx="89.2" cy="19.7" r="1.2" fill="#cfc9bf" opacity="0.45"/><circle cx="43" cy="45.6" r="1" fill="#cfc9bf" opacity="0.45"/><circle cx="93.6" cy="34.7" r="0.7" fill="#cfc9bf" opacity="0.45"/><circle cx="84.1" cy="71.8" r="1.1" fill="#cfc9bf" opacity="0.45"/><circle cx="50.5" cy="102.6" r="0.6" fill="#cfc9bf" opacity="0.45"/><circle cx="30.2" cy="54.4" r="1.1" fill="#cfc9bf" opacity="0.45"/><circle cx="66.7" cy="69.1" r="1.3" fill="#cfc9bf" opacity="0.45"/><circle cx="99.9" cy="50.7" r="0.5" fill="#cfc9bf" opacity="0.45"/><circle cx="75.8" cy="21.7" r="0.8" fill="#cfc9bf" opacity="0.45"/><circle cx="38.8" cy="82.9" r="1.4" fill="#cfc9bf" opacity="0.45"/><circle cx="28.1" cy="59.6" r="1.4" fill="#cfc9bf" opacity="0.45"/><circle cx="68" cy="31.4" r="1.3" fill="#cfc9bf" opacity="0.45"/><circle cx="88.8" cy="49.5" r="0.7" fill="#cfc9bf" opacity="0.45"/><circle cx="73.7" cy="47" r="0.6" fill="#cfc9bf" opacity="0.45"/><circle cx="34.5" cy="67" r="0.6" fill="#cfc9bf" opacity="0.45"/><circle cx="58.5" cy="71.7" r="1.1" fill="#cfc9bf" opacity="0.45"/><circle cx="68.8" cy="89.5" r="0.6" fill="#cfc9bf" opacity="0.45"/><circle cx="66.5" cy="101.9" r="1.5" fill="#cfc9bf" opacity="0.45"/><circle cx="114.9" cy="70" r="1.1" fill="#cfc9bf" opacity="0.45"/><circle cx="94.9" cy="61" r="0.6" fill="#cfc9bf" opacity="0.45"/><circle cx="32.3" cy="41.3" r="1.5" fill="#cfc9bf" opacity="0.45"/><circle cx="48.1" cy="62.9" r="1.1" fill="#cfc9bf" opacity="0.45"/><circle cx="38.1" cy="92.2" r="1.4" fill="#cfc9bf" opacity="0.45"/><circle cx="108.2" cy="82" r="0.8" fill="#cfc9bf" opacity="0.45"/><circle cx="43.9" cy="95.1" r="1.3" fill="#cfc9bf" opacity="0.45"/><circle cx="50.2" cy="56.7" r="0.7" fill="#cfc9bf" opacity="0.45"/><circle cx="94.2" cy="52" r="1.4" fill="#cfc9bf" opacity="0.45"/><circle cx="46.7" cy="55.9" r="1.1" fill="#cfc9bf" opacity="0.45"/><circle cx="103.6" cy="83.9" r="0.9" fill="#cfc9bf" opacity="0.45"/><circle cx="79.9" cy="52" r="1.4" fill="#cfc9bf" opacity="0.45"/><circle cx="91.8" cy="60.6" r="0.9" fill="#cfc9bf" opacity="0.45"/><circle cx="59.7" cy="100.2" r="1.4" fill="#cfc9bf" opacity="0.45"/><line x1="48.6" y1="28.2" x2="85" y2="100.8" stroke="#4a4a4a" stroke-width="0.9"/><line x1="23.1" y1="79.3" x2="110.5" y2="49.7" stroke="#4a4a4a" stroke-width="0.9"/></svg></div>
<div class="a im" id="i35" style="left:832px;top:477px;width:141px;height:141px;background:#6e6d68"><svg width="141" height="141" viewBox="0 0 141 141" shape-rendering="auto"><defs><filter id="dt" x="0" y="0" width="100%" height="100%"><feTurbulence type="fractalNoise" baseFrequency="0.35" numOctaves="2" seed="3"/><feColorMatrix type="matrix" values="0 0 0 0 0.43  0 0 0 0 0.43  0 0 0 0 0.4  0 0 0 0.5 -0.1"/></filter></defs><rect x="0" y="0" width="141" height="141" fill="#6e6d68"/><circle cx="43" cy="11.9" r="0.9" fill="#7a7973" opacity="0.45"/><circle cx="5.5" cy="114.2" r="1.3" fill="#76756f" opacity="0.45"/><circle cx="57.8" cy="78.6" r="0.7" fill="#76756f" opacity="0.45"/><circle cx="14.5" cy="19.6" r="1.5" fill="#666560" opacity="0.45"/><circle cx="131.2" cy="7.3" r="0.6" fill="#76756f" opacity="0.45"/><circle cx="106.3" cy="130.9" r="1.1" fill="#76756f" opacity="0.45"/><circle cx="22" cy="74.4" r="1.9" fill="#7a7973" opacity="0.45"/><circle cx="136.5" cy="114.1" r="0.6" fill="#76756f" opacity="0.45"/><circle cx="95.9" cy="42.9" r="1.6" fill="#7a7973" opacity="0.45"/><circle cx="130.3" cy="4.9" r="1.2" fill="#76756f" opacity="0.45"/><circle cx="96.5" cy="63.5" r="1.4" fill="#63625d" opacity="0.45"/><circle cx="135.4" cy="1" r="1.9" fill="#7a7973" opacity="0.45"/><circle cx="77.8" cy="77.6" r="0.6" fill="#7a7973" opacity="0.45"/><circle cx="100.7" cy="116.1" r="1.1" fill="#666560" opacity="0.45"/><circle cx="91.5" cy="6.4" r="0.8" fill="#666560" opacity="0.45"/><circle cx="12.5" cy="56.4" r="0.9" fill="#7a7973" opacity="0.45"/><circle cx="91.3" cy="62.7" r="1.4" fill="#7a7973" opacity="0.45"/><circle cx="81.8" cy="74.8" r="1.4" fill="#7a7973" opacity="0.45"/><circle cx="137.5" cy="134.8" r="1.6" fill="#7a7973" opacity="0.45"/><circle cx="10.6" cy="17.4" r="1.1" fill="#76756f" opacity="0.45"/><circle cx="76.5" cy="129.6" r="1.5" fill="#76756f" opacity="0.45"/><circle cx="135.2" cy="31.2" r="0.9" fill="#666560" opacity="0.45"/><circle cx="56.6" cy="40.4" r="0.6" fill="#7a7973" opacity="0.45"/><circle cx="42.4" cy="95" r="1.4" fill="#63625d" opacity="0.45"/><circle cx="107.2" cy="80.9" r="1.5" fill="#76756f" opacity="0.45"/><circle cx="66.4" cy="65.4" r="1" fill="#666560" opacity="0.45"/><circle cx="13.8" cy="133.6" r="1.1" fill="#666560" opacity="0.45"/><circle cx="120.4" cy="115.1" r="1.3" fill="#76756f" opacity="0.45"/><circle cx="32.6" cy="52.1" r="1.5" fill="#666560" opacity="0.45"/><circle cx="46.4" cy="82.1" r="1.9" fill="#7a7973" opacity="0.45"/><circle cx="84.3" cy="15.8" r="1.8" fill="#63625d" opacity="0.45"/><circle cx="46.6" cy="101.2" r="1.7" fill="#76756f" opacity="0.45"/><circle cx="24.8" cy="136.2" r="1.4" fill="#666560" opacity="0.45"/><circle cx="65.1" cy="138.6" r="1" fill="#76756f" opacity="0.45"/><circle cx="132.1" cy="14.6" r="1.1" fill="#7a7973" opacity="0.45"/><circle cx="75.4" cy="134.9" r="1" fill="#666560" opacity="0.45"/><circle cx="10.6" cy="75.2" r="1.6" fill="#63625d" opacity="0.45"/><circle cx="10.3" cy="78.4" r="1.6" fill="#7a7973" opacity="0.45"/><circle cx="123.7" cy="36.2" r="1.7" fill="#666560" opacity="0.45"/><circle cx="48.8" cy="3.5" r="1" fill="#666560" opacity="0.45"/><circle cx="51.8" cy="82" r="0.9" fill="#7a7973" opacity="0.45"/><circle cx="13.4" cy="129.7" r="0.7" fill="#63625d" opacity="0.45"/><circle cx="49.1" cy="20.2" r="0.7" fill="#7a7973" opacity="0.45"/><circle cx="63.4" cy="33.3" r="0.9" fill="#63625d" opacity="0.45"/><circle cx="131.9" cy="48" r="1.7" fill="#7a7973" opacity="0.45"/><circle cx="94.4" cy="118.9" r="1.2" fill="#76756f" opacity="0.45"/><circle cx="12" cy="138.1" r="1.4" fill="#666560" opacity="0.45"/><circle cx="20.6" cy="130" r="1.2" fill="#76756f" opacity="0.45"/><circle cx="57.6" cy="119.4" r="1" fill="#76756f" opacity="0.45"/><circle cx="0.4" cy="13" r="1.6" fill="#76756f" opacity="0.45"/><circle cx="18" cy="62.4" r="1.4" fill="#76756f" opacity="0.45"/><circle cx="100.8" cy="138.8" r="0.6" fill="#63625d" opacity="0.45"/><circle cx="45.1" cy="8.5" r="1" fill="#76756f" opacity="0.45"/><circle cx="82.9" cy="138.3" r="0.9" fill="#666560" opacity="0.45"/><circle cx="90.2" cy="32.4" r="0.9" fill="#666560" opacity="0.45"/><circle cx="61.9" cy="139" r="1.1" fill="#63625d" opacity="0.45"/><circle cx="140.3" cy="131.8" r="1.7" fill="#7a7973" opacity="0.45"/><circle cx="98.7" cy="45.7" r="1.7" fill="#76756f" opacity="0.45"/><circle cx="75.5" cy="95.8" r="0.7" fill="#7a7973" opacity="0.45"/><circle cx="14.8" cy="105.2" r="1.5" fill="#63625d" opacity="0.45"/><circle cx="120.3" cy="11.8" r="1.5" fill="#7a7973" opacity="0.45"/><circle cx="66.6" cy="66.6" r="1.6" fill="#7a7973" opacity="0.45"/><circle cx="70" cy="131.1" r="1" fill="#666560" opacity="0.45"/><circle cx="126.4" cy="140.3" r="1.4" fill="#63625d" opacity="0.45"/><circle cx="52.5" cy="84" r="1.7" fill="#76756f" opacity="0.45"/><circle cx="34.9" cy="97.3" r="2" fill="#7a7973" opacity="0.45"/><circle cx="71" cy="69.7" r="1.4" fill="#76756f" opacity="0.45"/><circle cx="28.7" cy="48.7" r="2" fill="#666560" opacity="0.45"/><circle cx="10" cy="16.6" r="0.9" fill="#7a7973" opacity="0.45"/><circle cx="88.9" cy="131.1" r="1.5" fill="#666560" opacity="0.45"/><circle cx="56.9" cy="81.7" r="1.3" fill="#76756f" opacity="0.45"/><circle cx="3.8" cy="74.2" r="1.5" fill="#76756f" opacity="0.45"/><circle cx="106.6" cy="48.5" r="1.1" fill="#76756f" opacity="0.45"/><circle cx="50.5" cy="87.4" r="1.4" fill="#63625d" opacity="0.45"/><circle cx="28.5" cy="127.3" r="1.9" fill="#63625d" opacity="0.45"/><circle cx="104.9" cy="119.2" r="0.7" fill="#63625d" opacity="0.45"/><circle cx="1.9" cy="99.7" r="1.9" fill="#666560" opacity="0.45"/><circle cx="109.9" cy="55.1" r="1.3" fill="#7a7973" opacity="0.45"/><circle cx="105.2" cy="50.2" r="1.8" fill="#666560" opacity="0.45"/><circle cx="129.4" cy="103.7" r="1.6" fill="#76756f" opacity="0.45"/><circle cx="82.9" cy="22.2" r="1.8" fill="#7a7973" opacity="0.45"/><circle cx="44.1" cy="37.7" r="1.9" fill="#7a7973" opacity="0.45"/><circle cx="2.8" cy="48" r="1.1" fill="#666560" opacity="0.45"/><circle cx="108.7" cy="10.2" r="1.2" fill="#666560" opacity="0.45"/><circle cx="73.9" cy="120.8" r="1.7" fill="#7a7973" opacity="0.45"/><circle cx="114.1" cy="111.3" r="1.7" fill="#666560" opacity="0.45"/><circle cx="37.9" cy="54.9" r="1.8" fill="#76756f" opacity="0.45"/><circle cx="55.8" cy="31.2" r="1.6" fill="#666560" opacity="0.45"/><circle cx="97.1" cy="73.2" r="1.6" fill="#76756f" opacity="0.45"/><circle cx="139.2" cy="109.2" r="1.9" fill="#666560" opacity="0.45"/><circle cx="11.6" cy="105.8" r="0.9" fill="#63625d" opacity="0.45"/><circle cx="140.7" cy="55.2" r="1.8" fill="#63625d" opacity="0.45"/><circle cx="61.3" cy="18.1" r="2" fill="#7a7973" opacity="0.45"/><circle cx="28.1" cy="42.9" r="0.6" fill="#76756f" opacity="0.45"/><circle cx="47.5" cy="58.3" r="1.6" fill="#76756f" opacity="0.45"/><circle cx="43.6" cy="119.6" r="1.6" fill="#76756f" opacity="0.45"/><circle cx="57.5" cy="79.9" r="0.7" fill="#666560" opacity="0.45"/><circle cx="14.9" cy="76.3" r="1.3" fill="#666560" opacity="0.45"/><circle cx="103.1" cy="86.8" r="0.9" fill="#76756f" opacity="0.45"/><circle cx="116.4" cy="87.3" r="0.9" fill="#7a7973" opacity="0.45"/><circle cx="55.7" cy="37.9" r="0.8" fill="#63625d" opacity="0.45"/><circle cx="89.2" cy="131.5" r="0.8" fill="#63625d" opacity="0.45"/><circle cx="135.7" cy="65.8" r="1.8" fill="#76756f" opacity="0.45"/><circle cx="76.2" cy="67.9" r="1.9" fill="#63625d" opacity="0.45"/><circle cx="91.6" cy="103.5" r="1.4" fill="#76756f" opacity="0.45"/><circle cx="10.4" cy="140" r="1.6" fill="#76756f" opacity="0.45"/><circle cx="119.2" cy="22.7" r="0.8" fill="#63625d" opacity="0.45"/><circle cx="51.6" cy="115.5" r="1.3" fill="#63625d" opacity="0.45"/><circle cx="96.7" cy="120.7" r="0.8" fill="#63625d" opacity="0.45"/><circle cx="50.7" cy="45.7" r="0.6" fill="#63625d" opacity="0.45"/><circle cx="104.1" cy="69.5" r="0.6" fill="#76756f" opacity="0.45"/><circle cx="11.3" cy="66.5" r="1.5" fill="#7a7973" opacity="0.45"/><circle cx="125.7" cy="17.2" r="1.3" fill="#666560" opacity="0.45"/><circle cx="0.7" cy="26" r="1.4" fill="#76756f" opacity="0.45"/><circle cx="88.6" cy="87.5" r="1.1" fill="#666560" opacity="0.45"/><circle cx="92.8" cy="27.6" r="1.4" fill="#63625d" opacity="0.45"/><circle cx="10.7" cy="108.5" r="0.8" fill="#63625d" opacity="0.45"/><circle cx="16.4" cy="79.5" r="2" fill="#7a7973" opacity="0.45"/><circle cx="39.2" cy="27.8" r="1.2" fill="#666560" opacity="0.45"/><circle cx="94.9" cy="32.9" r="1.1" fill="#666560" opacity="0.45"/><circle cx="59.9" cy="74.8" r="0.8" fill="#63625d" opacity="0.45"/><circle cx="21.2" cy="93.3" r="0.8" fill="#76756f" opacity="0.45"/><circle cx="69.6" cy="134.3" r="0.9" fill="#76756f" opacity="0.45"/><circle cx="20.7" cy="10.9" r="1.1" fill="#63625d" opacity="0.45"/><circle cx="92.5" cy="12.4" r="0.9" fill="#666560" opacity="0.45"/><circle cx="3.8" cy="13.2" r="1.4" fill="#666560" opacity="0.45"/><circle cx="14.8" cy="52.2" r="1.9" fill="#7a7973" opacity="0.45"/><circle cx="74.7" cy="47.9" r="1.9" fill="#7a7973" opacity="0.45"/><circle cx="79.7" cy="79" r="2" fill="#76756f" opacity="0.45"/><circle cx="108.5" cy="76" r="1.6" fill="#666560" opacity="0.45"/><circle cx="136.9" cy="107.2" r="0.9" fill="#7a7973" opacity="0.45"/><circle cx="62" cy="32.6" r="1.7" fill="#76756f" opacity="0.45"/><circle cx="103.7" cy="10.2" r="1.7" fill="#7a7973" opacity="0.45"/><circle cx="99.6" cy="102.2" r="2" fill="#7a7973" opacity="0.45"/><circle cx="112.8" cy="37.2" r="1.5" fill="#7a7973" opacity="0.45"/><circle cx="98.1" cy="6.1" r="1.3" fill="#666560" opacity="0.45"/><circle cx="92.1" cy="23.1" r="1.8" fill="#63625d" opacity="0.45"/><circle cx="14.8" cy="68.2" r="0.7" fill="#76756f" opacity="0.45"/><circle cx="61.9" cy="136.8" r="1.3" fill="#63625d" opacity="0.45"/><circle cx="74.7" cy="54.8" r="0.8" fill="#666560" opacity="0.45"/><circle cx="88.3" cy="12.1" r="1.1" fill="#76756f" opacity="0.45"/><circle cx="49.6" cy="45" r="1.6" fill="#7a7973" opacity="0.45"/><circle cx="85.3" cy="115.7" r="0.8" fill="#76756f" opacity="0.45"/><circle cx="127.7" cy="31.7" r="1.1" fill="#76756f" opacity="0.45"/><circle cx="136.2" cy="61.9" r="1.4" fill="#666560" opacity="0.45"/><circle cx="90.5" cy="83.8" r="1.8" fill="#63625d" opacity="0.45"/><circle cx="97.3" cy="101.6" r="0.8" fill="#666560" opacity="0.45"/><circle cx="126.9" cy="43.5" r="1.2" fill="#7a7973" opacity="0.45"/><circle cx="40" cy="129.5" r="1.1" fill="#63625d" opacity="0.45"/><circle cx="72.8" cy="32.8" r="1.3" fill="#76756f" opacity="0.45"/><circle cx="68.7" cy="138.3" r="0.8" fill="#76756f" opacity="0.45"/><circle cx="66.1" cy="122.1" r="2" fill="#63625d" opacity="0.45"/><circle cx="111.8" cy="16.5" r="1.8" fill="#63625d" opacity="0.45"/><circle cx="69.4" cy="31.6" r="0.7" fill="#7a7973" opacity="0.45"/><circle cx="52" cy="120.1" r="1.9" fill="#76756f" opacity="0.45"/><circle cx="7" cy="23.1" r="1.8" fill="#7a7973" opacity="0.45"/><circle cx="121.7" cy="21.3" r="1.3" fill="#7a7973" opacity="0.45"/><circle cx="0.9" cy="56.1" r="1.6" fill="#76756f" opacity="0.45"/><circle cx="71.8" cy="85.9" r="1.8" fill="#63625d" opacity="0.45"/><circle cx="83.8" cy="7.1" r="1.8" fill="#76756f" opacity="0.45"/><circle cx="128.6" cy="90.9" r="1.5" fill="#7a7973" opacity="0.45"/><circle cx="18.9" cy="1.3" r="0.9" fill="#63625d" opacity="0.45"/><circle cx="43.6" cy="117.5" r="1.9" fill="#63625d" opacity="0.45"/><circle cx="138.9" cy="9.7" r="1.1" fill="#7a7973" opacity="0.45"/><circle cx="22" cy="109.9" r="1.8" fill="#666560" opacity="0.45"/><circle cx="19.5" cy="71.4" r="2" fill="#7a7973" opacity="0.45"/><circle cx="23.5" cy="44.3" r="1.1" fill="#7a7973" opacity="0.45"/><circle cx="110.8" cy="26.2" r="1" fill="#7a7973" opacity="0.45"/><circle cx="1.7" cy="86.2" r="0.7" fill="#666560" opacity="0.45"/><circle cx="59.7" cy="130.5" r="0.9" fill="#666560" opacity="0.45"/><circle cx="32.1" cy="6.7" r="0.7" fill="#666560" opacity="0.45"/><circle cx="108.9" cy="136" r="1.3" fill="#666560" opacity="0.45"/><circle cx="101.1" cy="4.8" r="1.3" fill="#666560" opacity="0.45"/><circle cx="66.8" cy="105.2" r="1.8" fill="#666560" opacity="0.45"/><circle cx="117.1" cy="97.5" r="0.8" fill="#666560" opacity="0.45"/><circle cx="47.6" cy="33.2" r="1.4" fill="#666560" opacity="0.45"/><circle cx="136.6" cy="121.9" r="0.8" fill="#7a7973" opacity="0.45"/><circle cx="134.9" cy="34.3" r="1.3" fill="#76756f" opacity="0.45"/><circle cx="30.4" cy="18.3" r="1.5" fill="#666560" opacity="0.45"/><circle cx="135.1" cy="10.9" r="0.8" fill="#63625d" opacity="0.45"/><circle cx="29.5" cy="129.3" r="0.7" fill="#63625d" opacity="0.45"/><circle cx="126.4" cy="79.3" r="1.5" fill="#666560" opacity="0.45"/><circle cx="25.6" cy="27.6" r="1.2" fill="#666560" opacity="0.45"/><circle cx="16.1" cy="31.4" r="1.5" fill="#666560" opacity="0.45"/><circle cx="104.4" cy="40.7" r="1.6" fill="#7a7973" opacity="0.45"/><circle cx="77.1" cy="50.3" r="1.9" fill="#76756f" opacity="0.45"/><circle cx="9.9" cy="63.6" r="0.7" fill="#7a7973" opacity="0.45"/><circle cx="65.4" cy="53.7" r="1.4" fill="#7a7973" opacity="0.45"/><circle cx="25.5" cy="82.1" r="1" fill="#7a7973" opacity="0.45"/><circle cx="1.8" cy="21.2" r="1.8" fill="#63625d" opacity="0.45"/><circle cx="44.3" cy="84.5" r="1.7" fill="#7a7973" opacity="0.45"/><circle cx="128.6" cy="13.1" r="0.8" fill="#76756f" opacity="0.45"/><circle cx="71.9" cy="75.1" r="0.9" fill="#7a7973" opacity="0.45"/><circle cx="33.8" cy="46.5" r="0.8" fill="#63625d" opacity="0.45"/><circle cx="127.2" cy="132.3" r="0.9" fill="#666560" opacity="0.45"/><circle cx="82.7" cy="87.8" r="0.6" fill="#63625d" opacity="0.45"/><circle cx="47.5" cy="62.2" r="1.6" fill="#76756f" opacity="0.45"/><circle cx="53.3" cy="32.4" r="0.7" fill="#7a7973" opacity="0.45"/><circle cx="82.5" cy="14.6" r="0.9" fill="#63625d" opacity="0.45"/><circle cx="121" cy="42.7" r="1.5" fill="#7a7973" opacity="0.45"/><circle cx="130.3" cy="78.2" r="1.9" fill="#7a7973" opacity="0.45"/><circle cx="2.5" cy="49.6" r="0.6" fill="#666560" opacity="0.45"/><circle cx="132.1" cy="68.8" r="0.6" fill="#63625d" opacity="0.45"/><circle cx="135.4" cy="12.2" r="0.6" fill="#7a7973" opacity="0.45"/><circle cx="50.4" cy="35.2" r="0.8" fill="#7a7973" opacity="0.45"/><circle cx="4.3" cy="98.8" r="1.4" fill="#666560" opacity="0.45"/><circle cx="5" cy="63.7" r="1.8" fill="#76756f" opacity="0.45"/><circle cx="6.2" cy="17.5" r="1.9" fill="#76756f" opacity="0.45"/><circle cx="27.1" cy="118.4" r="2" fill="#666560" opacity="0.45"/><circle cx="37.9" cy="135.4" r="1.2" fill="#76756f" opacity="0.45"/><circle cx="25.7" cy="81.8" r="1.1" fill="#666560" opacity="0.45"/><circle cx="9" cy="78.6" r="1.9" fill="#7a7973" opacity="0.45"/><circle cx="123.5" cy="14.8" r="1.4" fill="#76756f" opacity="0.45"/><circle cx="106.2" cy="128.8" r="1.9" fill="#666560" opacity="0.45"/><circle cx="126.4" cy="119.8" r="0.9" fill="#76756f" opacity="0.45"/><circle cx="108.3" cy="10.7" r="1.8" fill="#7a7973" opacity="0.45"/><circle cx="132" cy="69.4" r="0.7" fill="#76756f" opacity="0.45"/><circle cx="111.1" cy="117.6" r="1.6" fill="#76756f" opacity="0.45"/><circle cx="69.5" cy="46" r="1.5" fill="#76756f" opacity="0.45"/><circle cx="64.9" cy="38.9" r="1.2" fill="#76756f" opacity="0.45"/><path d="M22.6 41.8 q-1.1 -1 4.2 -0.1" stroke="#7e7d77" stroke-width="0.6" fill="none" opacity="0.5"/><path d="M37.7 108.8 q-1.6 -3.3 -0.2 2.2" stroke="#5e5d58" stroke-width="0.6" fill="none" opacity="0.5"/><path d="M6.8 99.2 q1 -0.1 2.6 0.1" stroke="#7e7d77" stroke-width="0.6" fill="none" opacity="0.5"/><path d="M10.4 66.4 q1.3 -1.7 -6.2 1.9" stroke="#5e5d58" stroke-width="0.6" fill="none" opacity="0.5"/><path d="M69.4 54.1 q0.4 -3.8 -2.4 -2.8" stroke="#7e7d77" stroke-width="0.6" fill="none" opacity="0.5"/><path d="M92.2 22.3 q2.8 -1.7 4.9 0.9" stroke="#5e5d58" stroke-width="0.6" fill="none" opacity="0.5"/><path d="M41.6 114.6 q2.7 2.8 -4.4 -2.9" stroke="#5e5d58" stroke-width="0.6" fill="none" opacity="0.5"/><path d="M51 10.9 q3 1.5 -0.2 0.3" stroke="#5e5d58" stroke-width="0.6" fill="none" opacity="0.5"/><path d="M9.8 50.5 q1.5 0.3 -0 -1.4" stroke="#7e7d77" stroke-width="0.6" fill="none" opacity="0.5"/><path d="M113.2 8.6 q-3.8 1 3.2 -1" stroke="#7e7d77" stroke-width="0.6" fill="none" opacity="0.5"/><path d="M14.7 50.7 q-3.4 0 7.3 1.6" stroke="#5e5d58" stroke-width="0.6" fill="none" opacity="0.5"/><path d="M134.6 120.5 q2.9 1.8 1.6 -1.5" stroke="#7e7d77" stroke-width="0.6" fill="none" opacity="0.5"/><path d="M54.8 60 q0.9 0.2 5.9 2.4" stroke="#5e5d58" stroke-width="0.6" fill="none" opacity="0.5"/><path d="M29.8 110.9 q0.5 1.8 1.3 -0" stroke="#7e7d77" stroke-width="0.6" fill="none" opacity="0.5"/><path d="M126.7 51.3 q-0.2 3.8 -4.9 0.8" stroke="#7e7d77" stroke-width="0.6" fill="none" opacity="0.5"/><path d="M44.9 72.5 q0.1 -3 5.9 -0.8" stroke="#7e7d77" stroke-width="0.6" fill="none" opacity="0.5"/><path d="M133.6 101.1 q0.4 2.6 4.9 0.8" stroke="#7e7d77" stroke-width="0.6" fill="none" opacity="0.5"/><path d="M122.3 9.7 q-0.1 1.9 -4.8 -0.1" stroke="#7e7d77" stroke-width="0.6" fill="none" opacity="0.5"/><path d="M7.4 65.3 q1.8 0.6 -5.2 3" stroke="#5e5d58" stroke-width="0.6" fill="none" opacity="0.5"/><path d="M120.5 75.1 q1 -0.5 -0.6 2.7" stroke="#5e5d58" stroke-width="0.6" fill="none" opacity="0.5"/><path d="M92.2 97.4 q4 -2.4 0.5 -2.5" stroke="#5e5d58" stroke-width="0.6" fill="none" opacity="0.5"/><path d="M60.9 8.3 q3.5 -2.9 6.1 -2.7" stroke="#7e7d77" stroke-width="0.6" fill="none" opacity="0.5"/><path d="M120.5 70.8 q-3.1 -0.3 3.4 -1" stroke="#5e5d58" stroke-width="0.6" fill="none" opacity="0.5"/><path d="M8.6 72.4 q1.6 2.2 6.8 -1.8" stroke="#5e5d58" stroke-width="0.6" fill="none" opacity="0.5"/><path d="M5.6 95.4 q-1.1 3.4 -3.2 -0.4" stroke="#5e5d58" stroke-width="0.6" fill="none" opacity="0.5"/><path d="M75.7 17 q3.2 -0.1 2.2 -1" stroke="#7e7d77" stroke-width="0.6" fill="none" opacity="0.5"/><path d="M64.4 78.5 q1.7 1.2 -1.1 -2.5" stroke="#7e7d77" stroke-width="0.6" fill="none" opacity="0.5"/><path d="M67.9 49.3 q0.9 3.1 4.1 -1.6" stroke="#7e7d77" stroke-width="0.6" fill="none" opacity="0.5"/><path d="M112.8 117.7 q-0.3 1.6 3.9 1.5" stroke="#7e7d77" stroke-width="0.6" fill="none" opacity="0.5"/><path d="M114.3 95.3 q-0.6 0.9 2.5 -0.4" stroke="#7e7d77" stroke-width="0.6" fill="none" opacity="0.5"/><path d="M119.7 67.1 q3.5 -3.1 -6.8 -0.6" stroke="#7e7d77" stroke-width="0.6" fill="none" opacity="0.5"/><path d="M121.9 52.6 q-1 0.1 -4 -1.7" stroke="#7e7d77" stroke-width="0.6" fill="none" opacity="0.5"/><path d="M9.1 124.6 q-2.1 -1 7.5 -0.3" stroke="#7e7d77" stroke-width="0.6" fill="none" opacity="0.5"/><path d="M118.2 3.5 q-3 3.8 6 0.7" stroke="#5e5d58" stroke-width="0.6" fill="none" opacity="0.5"/><path d="M61.5 59.9 q-2.8 0.4 -3.6 -2.3" stroke="#5e5d58" stroke-width="0.6" fill="none" opacity="0.5"/><path d="M81 123.5 q-1.6 0.6 -3.6 2" stroke="#7e7d77" stroke-width="0.6" fill="none" opacity="0.5"/><path d="M117.5 22 q2.2 -3.5 -5.5 2.6" stroke="#7e7d77" stroke-width="0.6" fill="none" opacity="0.5"/><path d="M53.1 72.3 q-2.4 -3.6 -4.5 -2.2" stroke="#7e7d77" stroke-width="0.6" fill="none" opacity="0.5"/><path d="M138.3 76.5 q-1.1 0.1 -2.9 2.9" stroke="#7e7d77" stroke-width="0.6" fill="none" opacity="0.5"/><path d="M59.3 71.3 q-3.7 3.1 1.3 -0.9" stroke="#5e5d58" stroke-width="0.6" fill="none" opacity="0.5"/><path d="M132.5 109 q1.3 2.1 6.9 -2.7" stroke="#7e7d77" stroke-width="0.6" fill="none" opacity="0.5"/><path d="M76.2 18.9 q2.9 3.9 0.1 -0.7" stroke="#7e7d77" stroke-width="0.6" fill="none" opacity="0.5"/><path d="M31.4 136.3 q-3.1 0.5 -1 -1.9" stroke="#5e5d58" stroke-width="0.6" fill="none" opacity="0.5"/><path d="M135.1 68.9 q2.9 -3.7 5.4 -0.1" stroke="#7e7d77" stroke-width="0.6" fill="none" opacity="0.5"/><path d="M17.2 111.8 q0.7 -0.3 -7.3 -0.3" stroke="#5e5d58" stroke-width="0.6" fill="none" opacity="0.5"/><path d="M97.3 87.1 q1.7 3.6 -3.3 1.1" stroke="#5e5d58" stroke-width="0.6" fill="none" opacity="0.5"/><path d="M52 70.6 q0.7 0.4 -4.2 -0" stroke="#7e7d77" stroke-width="0.6" fill="none" opacity="0.5"/><path d="M136.6 133.9 q-1.3 2.6 2.9 2" stroke="#5e5d58" stroke-width="0.6" fill="none" opacity="0.5"/><path d="M131.3 41.1 q-0.5 2.7 1.9 -1.7" stroke="#7e7d77" stroke-width="0.6" fill="none" opacity="0.5"/><path d="M33.9 85.3 q0.2 -3 -7.4 0.5" stroke="#7e7d77" stroke-width="0.6" fill="none" opacity="0.5"/><path d="M18.9 106.3 q1.4 -0.7 1.5 0.3" stroke="#7e7d77" stroke-width="0.6" fill="none" opacity="0.5"/><path d="M76.1 65.1 q-0.7 1.5 -6.2 1.2" stroke="#7e7d77" stroke-width="0.6" fill="none" opacity="0.5"/><path d="M76.6 49.8 q-3.2 -3.3 0.6 2.3" stroke="#7e7d77" stroke-width="0.6" fill="none" opacity="0.5"/><path d="M51.1 65.8 q-2.4 -2.8 -0.5 -1.8" stroke="#7e7d77" stroke-width="0.6" fill="none" opacity="0.5"/><path d="M63.3 42.6 q2.9 -0.9 -1.3 -1.7" stroke="#5e5d58" stroke-width="0.6" fill="none" opacity="0.5"/><path d="M61.4 66.3 q2.9 2 4.3 -1.7" stroke="#5e5d58" stroke-width="0.6" fill="none" opacity="0.5"/><path d="M40.6 77 q3.7 -2.3 -7 -1.8" stroke="#7e7d77" stroke-width="0.6" fill="none" opacity="0.5"/><path d="M130.6 12.7 q-2.9 1.3 6.7 -1.1" stroke="#5e5d58" stroke-width="0.6" fill="none" opacity="0.5"/><path d="M26.5 140.8 q0.5 2.7 -6.2 1" stroke="#7e7d77" stroke-width="0.6" fill="none" opacity="0.5"/><path d="M91.3 12.5 q0.4 -1.5 3.9 0.7" stroke="#7e7d77" stroke-width="0.6" fill="none" opacity="0.5"/></svg></div>

<!-- ROW 3 captions -->
<div class="a c" style="transform:scaleX(1.331);transform-origin:0 0;width:128.0px;overflow:hidden;left:51px;top:620px">合せガラス:<b class="sp"></b>グレイッシュホワイト／笠木:<b class="sp"></b>サテングレー</div>
<div class="a c" style="transform:scaleX(1.224);transform-origin:0 0;width:81.5px;overflow:hidden;left:246.5px;top:620px">床材:<b class="sp"></b>クラフトタイル　アイボリー</div>
<div class="a c" style="transform:scaleX(1.385);transform-origin:0 0;width:88.0px;overflow:hidden;left:362px;top:620px">合せガラス:<b class="sp"></b>乳白／笠木:<b class="sp"></b>サテングレー</div>
<div class="a c" style="transform:scaleX(1.230);transform-origin:0 0;width:81.5px;overflow:hidden;left:558px;top:620px">床材:<b class="sp"></b>クラフトタイル　アイボリー</div>
<div class="a c" style="transform:scaleX(0.983);transform-origin:0 0;width:116.5px;overflow:hidden;left:832px;top:620px">CA630/D25++SH　600×299　ア:<b class="sp"></b>9.5</div>

<div style="transform:scaleX(1.020);transform-origin:0 0;width:307.0px;overflow:hidden;left:268px" class="a fn">※仕様・色柄・色調等は、印刷のため実物とは多少異なる場合があります。</div>
<div class="a ft"></div>
<div class="a fl"></div>
<div class="a fv"></div>
<div style="transform:scaleX(0.792);transform-origin:0 0;width:165.0px;overflow:hidden;left:859.4px" class="a ftx">SEKISUI HOUSE HOKURIKU OFFICE</div>
</body></html>
